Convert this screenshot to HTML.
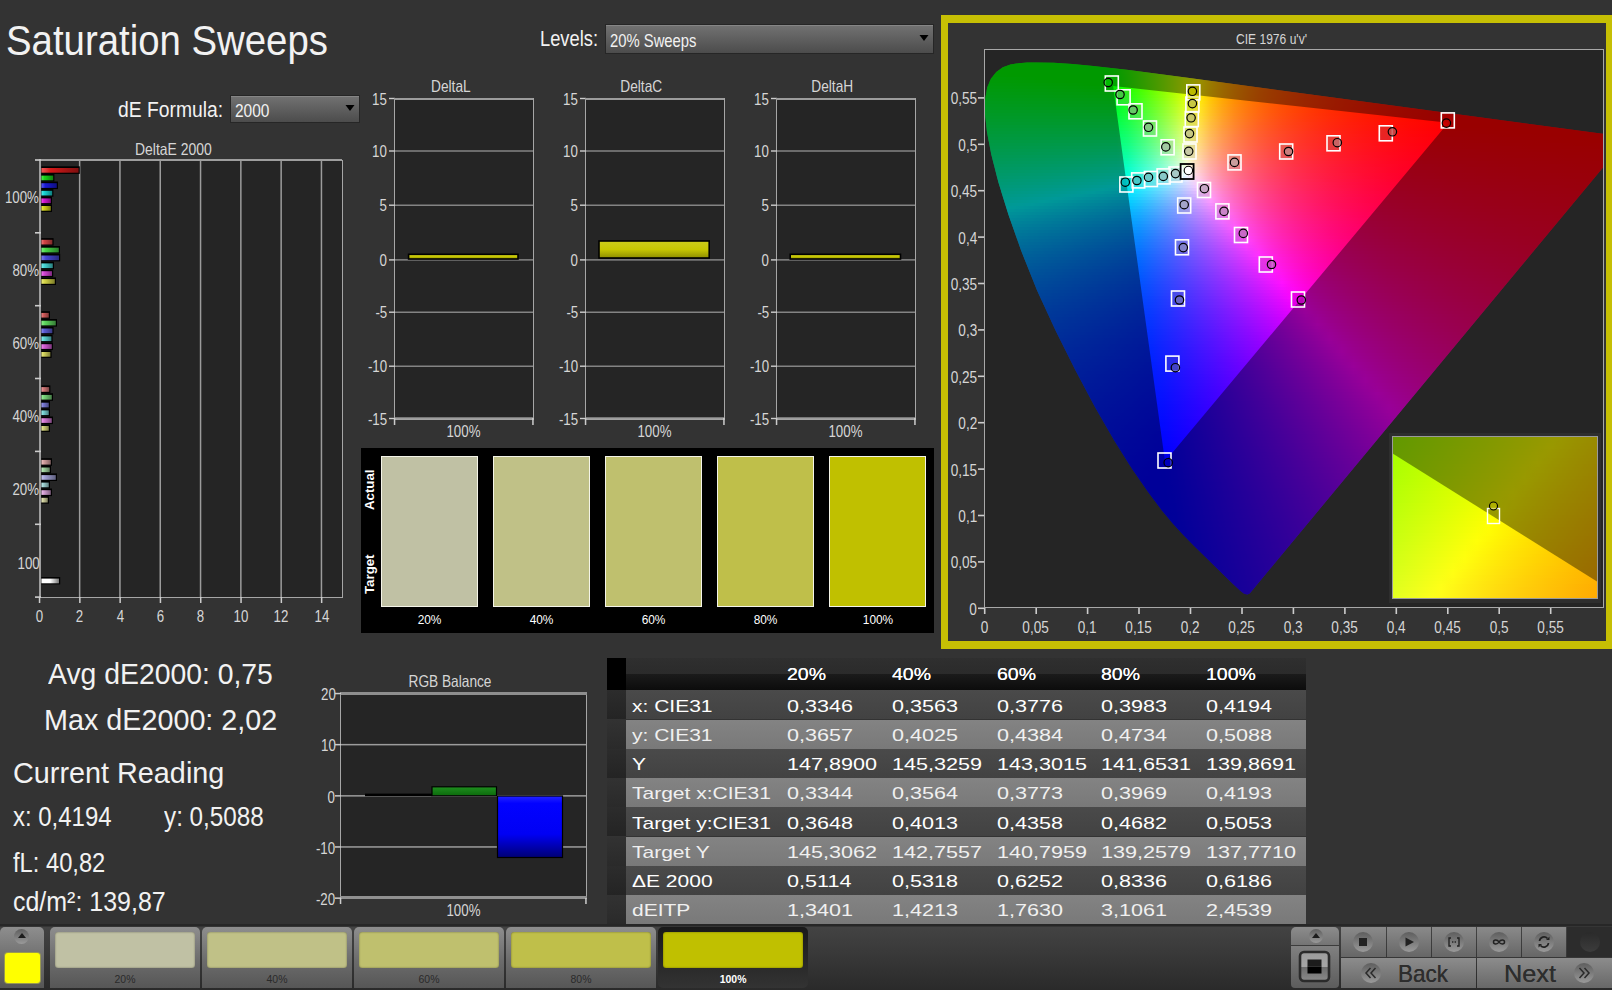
<!DOCTYPE html><html><head><meta charset="utf-8"><title>Saturation Sweeps</title><style>html,body{margin:0;padding:0}body{width:1612px;height:990px;background:#333;position:relative;overflow:hidden;font-family:"Liberation Sans",sans-serif}.t{position:absolute;white-space:nowrap;line-height:1}.s{position:absolute;left:0;width:100%}</style></head><body><div style="position:absolute;left:941.0px;top:15.0px;width:671.0px;height:634.0px;background:#c6bf04"></div>
<div style="position:absolute;left:948.0px;top:23.0px;width:658.0px;height:618.0px;background:#333"></div>
<div style="position:absolute;left:984.0px;top:49.0px;width:620.0px;height:559.0px;background:#252525;border:1px solid #a8a8a8;box-sizing:border-box"></div>
<div style="position:absolute;left:985px;top:50px;width:618px;height:558px;overflow:hidden">
<div style="position:absolute;left:0;top:0;width:618px;height:558px;clip-path:polygon(262.4px 544.4px,264.7px 543.4px,641.8px 88.7px,642.0px 88.1px,642.0px 87.6px,641.6px 87.1px,617.5px 83.7px,202.5px 27.8px,143.8px 20.1px,108.2px 15.9px,87.5px 13.9px,68.7px 12.7px,51.0px 12.4px,42.2px 12.6px,33.6px 13.2px,25.4px 14.6px,17.9px 17.3px,11.3px 21.9px,5.9px 28.7px,2.2px 37.6px,0.1px 49.5px,-0.0px 64.0px,2.0px 82.0px,6.3px 104.6px,13.3px 132.0px,23.4px 164.5px,36.3px 201.1px,52.1px 240.4px,70.7px 280.7px,90.3px 320.1px,110.1px 357.3px,129.1px 390.3px,146.8px 418.5px,163.1px 442.1px,176.7px 460.2px,188.2px 473.9px,198.6px 485.2px,207.9px 494.8px,248.0px 534.1px,255.6px 541.1px,258.8px 543.5px,260.0px 544.1px)">
<div class="s" style="top:0px;height:3px;background:linear-gradient(90deg,#00ff00,#00ff00,#00ff00,#00ff00,#00ff00,#00ff00,#00ff00,#00ff00,#00ff00,#00ff00,#00ff00,#11ff00,#2dff00,#4bff00,#6bff00,#8dff00,#b1ff00,#d9ff00,#fffb00,#ffd500,#ffb800,#ff9f00,#ff8b00,#ff7a00,#ff6c00,#ff6000,#ff5500,#ff4b00,#ff4300,#ff3b00,#ff3400,#ff2e00,#ff2900,#ff2400,#ff1f00,#ff1b00,#ff1700,#ff1300,#ff1000,#ff0d00,#ff0a00,#ff0700,#ff0500,#ff0200,#ff0000,#ff0000,#ff0000,#ff0000,#ff0000,#ff0000,#ff0000,#ff0000,#ff0000)"></div>
<div class="s" style="top:3px;height:3px;background:linear-gradient(90deg,#00ff00,#00ff00,#00ff00,#00ff00,#00ff00,#00ff00,#00ff00,#00ff00,#00ff00,#00ff00,#00ff00,#10ff00,#2cff00,#4aff00,#6aff00,#8dff00,#b2ff00,#d9ff00,#fffa00,#ffd400,#ffb700,#ff9e00,#ff8a00,#ff7a00,#ff6b00,#ff5f00,#ff5400,#ff4a00,#ff4200,#ff3b00,#ff3400,#ff2e00,#ff2800,#ff2300,#ff1f00,#ff1a00,#ff1600,#ff1300,#ff0f00,#ff0c00,#ff0900,#ff0700,#ff0400,#ff0200,#ff0000,#ff0000,#ff0000,#ff0000,#ff0000,#ff0000,#ff0000,#ff0000,#ff0000)"></div>
<div class="s" style="top:6px;height:3px;background:linear-gradient(90deg,#00ff00,#00ff00,#00ff00,#00ff00,#00ff00,#00ff00,#00ff00,#00ff00,#00ff00,#00ff00,#00ff00,#0fff00,#2bff00,#4aff00,#6aff00,#8dff00,#b2ff00,#daff00,#fff900,#ffd300,#ffb600,#ff9d00,#ff8900,#ff7900,#ff6a00,#ff5e00,#ff5300,#ff4a00,#ff4100,#ff3a00,#ff3300,#ff2d00,#ff2800,#ff2300,#ff1e00,#ff1a00,#ff1600,#ff1200,#ff0f00,#ff0c00,#ff0900,#ff0600,#ff0400,#ff0100,#ff0000,#ff0000,#ff0000,#ff0000,#ff0000,#ff0000,#ff0000,#ff0000,#ff0000)"></div>
<div class="s" style="top:9px;height:3px;background:linear-gradient(90deg,#00ff00,#00ff00,#00ff00,#00ff00,#00ff00,#00ff00,#00ff00,#00ff00,#00ff00,#00ff00,#00ff00,#0eff00,#2bff00,#49ff00,#6aff00,#8dff00,#b2ff00,#daff00,#fff800,#ffd300,#ffb500,#ff9c00,#ff8900,#ff7800,#ff6900,#ff5d00,#ff5200,#ff4900,#ff4100,#ff3900,#ff3200,#ff2c00,#ff2700,#ff2200,#ff1d00,#ff1900,#ff1500,#ff1200,#ff0e00,#ff0b00,#ff0800,#ff0600,#ff0300,#ff0100,#ff0000,#ff0000,#ff0000,#ff0000,#ff0000,#ff0000,#ff0000,#ff0000,#ff0000)"></div>
<div class="s" style="top:12px;height:3px;background:linear-gradient(90deg,#00ff00,#00ff00,#00ff00,#00ff00,#00ff00,#00ff00,#00ff00,#00ff00,#00ff00,#00ff00,#00ff00,#0dff00,#2aff00,#49ff00,#6aff00,#8dff00,#b2ff00,#dbff00,#fff700,#ffd200,#ffb400,#ff9c00,#ff8800,#ff7700,#ff6900,#ff5c00,#ff5200,#ff4800,#ff4000,#ff3800,#ff3200,#ff2c00,#ff2600,#ff2100,#ff1d00,#ff1900,#ff1500,#ff1100,#ff0e00,#ff0b00,#ff0800,#ff0500,#ff0300,#ff0000,#ff0000,#ff0000,#ff0000,#ff0000,#ff0000,#ff0000,#ff0000,#ff0000,#ff0000)"></div>
<div class="s" style="top:15px;height:3px;background:linear-gradient(90deg,#00ff00,#00ff00,#00ff00,#00ff00,#00ff00,#00ff00,#00ff00,#00ff00,#00ff00,#00ff00,#00ff00,#0cff00,#29ff00,#48ff00,#69ff00,#8dff00,#b3ff00,#dcff00,#fff600,#ffd100,#ffb300,#ff9b00,#ff8700,#ff7600,#ff6800,#ff5b00,#ff5100,#ff4700,#ff3f00,#ff3800,#ff3100,#ff2b00,#ff2600,#ff2100,#ff1c00,#ff1800,#ff1400,#ff1100,#ff0d00,#ff0a00,#ff0700,#ff0500,#ff0200,#ff0000,#ff0000,#ff0000,#ff0000,#ff0000,#ff0000,#ff0000,#ff0000,#ff0000,#ff0000)"></div>
<div class="s" style="top:18px;height:3px;background:linear-gradient(90deg,#00ff00,#00ff00,#00ff00,#00ff00,#00ff00,#00ff00,#00ff00,#00ff00,#00ff00,#00ff00,#00ff00,#0bff00,#29ff00,#48ff00,#69ff00,#8dff00,#b3ff00,#dcff00,#fff600,#ffd000,#ffb200,#ff9a00,#ff8600,#ff7500,#ff6700,#ff5b00,#ff5000,#ff4700,#ff3e00,#ff3700,#ff3000,#ff2a00,#ff2500,#ff2000,#ff1b00,#ff1700,#ff1300,#ff1000,#ff0d00,#ff0a00,#ff0700,#ff0400,#ff0200,#ff0000,#ff0000,#ff0000,#ff0000,#ff0000,#ff0000,#ff0000,#ff0000,#ff0000,#ff0000)"></div>
<div class="s" style="top:21px;height:3px;background:linear-gradient(90deg,#00ff01,#00ff00,#00ff00,#00ff00,#00ff00,#00ff00,#00ff00,#00ff00,#00ff00,#00ff00,#00ff00,#0bff00,#28ff00,#47ff00,#69ff00,#8dff00,#b3ff00,#ddff00,#fff500,#ffcf00,#ffb100,#ff9900,#ff8500,#ff7400,#ff6600,#ff5a00,#ff4f00,#ff4600,#ff3d00,#ff3600,#ff3000,#ff2a00,#ff2400,#ff1f00,#ff1b00,#ff1700,#ff1300,#ff0f00,#ff0c00,#ff0900,#ff0600,#ff0400,#ff0100,#ff0000,#ff0000,#ff0000,#ff0000,#ff0000,#ff0000,#ff0000,#ff0000,#ff0000,#ff0000)"></div>
<div class="s" style="top:24px;height:3px;background:linear-gradient(90deg,#00ff05,#00ff03,#00ff01,#00ff00,#00ff00,#00ff00,#00ff00,#00ff00,#00ff00,#00ff00,#00ff00,#0aff00,#27ff00,#47ff00,#68ff00,#8cff00,#b3ff00,#ddff00,#fff400,#ffce00,#ffb000,#ff9800,#ff8400,#ff7300,#ff6500,#ff5900,#ff4e00,#ff4500,#ff3d00,#ff3500,#ff2f00,#ff2900,#ff2400,#ff1f00,#ff1a00,#ff1600,#ff1200,#ff0f00,#ff0c00,#ff0900,#ff0600,#ff0300,#ff0100,#ff0000,#ff0000,#ff0000,#ff0000,#ff0000,#ff0000,#ff0000,#ff0000,#ff0000,#ff0000)"></div>
<div class="s" style="top:27px;height:3px;background:linear-gradient(90deg,#00ff09,#00ff08,#00ff06,#00ff04,#00ff02,#00ff00,#00ff00,#00ff00,#00ff00,#00ff00,#00ff00,#09ff00,#26ff00,#46ff00,#68ff00,#8cff00,#b4ff00,#deff00,#fff300,#ffcd00,#ffaf00,#ff9700,#ff8300,#ff7200,#ff6400,#ff5800,#ff4d00,#ff4400,#ff3c00,#ff3500,#ff2e00,#ff2800,#ff2300,#ff1e00,#ff1a00,#ff1500,#ff1200,#ff0e00,#ff0b00,#ff0800,#ff0500,#ff0300,#ff0000,#ff0000,#ff0000,#ff0000,#ff0000,#ff0000,#ff0000,#ff0000,#ff0000,#ff0000,#ff0000)"></div>
<div class="s" style="top:30px;height:3px;background:linear-gradient(90deg,#00ff0d,#00ff0c,#00ff0a,#00ff09,#00ff07,#00ff05,#00ff03,#00ff01,#00ff00,#00ff00,#00ff00,#08ff00,#26ff00,#45ff00,#68ff00,#8cff00,#b4ff00,#dfff00,#fff200,#ffcc00,#ffae00,#ff9600,#ff8200,#ff7100,#ff6300,#ff5700,#ff4d00,#ff4300,#ff3b00,#ff3400,#ff2d00,#ff2800,#ff2200,#ff1d00,#ff1900,#ff1500,#ff1100,#ff0e00,#ff0a00,#ff0800,#ff0500,#ff0200,#ff0000,#ff0000,#ff0000,#ff0000,#ff0000,#ff0000,#ff0000,#ff0000,#ff0000,#ff0000,#ff0000)"></div>
<div class="s" style="top:33px;height:3px;background:linear-gradient(90deg,#00ff12,#00ff10,#00ff0f,#00ff0d,#00ff0c,#00ff0a,#00ff08,#00ff06,#00ff04,#00ff01,#00ff00,#07ff00,#25ff00,#45ff00,#67ff00,#8cff00,#b4ff00,#dfff00,#fff100,#ffcb00,#ffad00,#ff9500,#ff8100,#ff7000,#ff6200,#ff5600,#ff4c00,#ff4300,#ff3a00,#ff3300,#ff2d00,#ff2700,#ff2200,#ff1d00,#ff1800,#ff1400,#ff1100,#ff0d00,#ff0a00,#ff0700,#ff0400,#ff0200,#ff0000,#ff0000,#ff0000,#ff0000,#ff0000,#ff0000,#ff0000,#ff0000,#ff0000,#ff0000,#ff0000)"></div>
<div class="s" style="top:36px;height:3px;background:linear-gradient(90deg,#00ff16,#00ff15,#00ff13,#00ff12,#00ff10,#00ff0f,#00ff0d,#00ff0b,#00ff09,#00ff07,#00ff05,#06ff02,#24ff00,#44ff00,#67ff00,#8cff00,#b5ff00,#e0ff00,#fff000,#ffca00,#ffac00,#ff9400,#ff8000,#ff6f00,#ff6100,#ff5500,#ff4b00,#ff4200,#ff3a00,#ff3200,#ff2c00,#ff2600,#ff2100,#ff1c00,#ff1800,#ff1400,#ff1000,#ff0d00,#ff0900,#ff0600,#ff0400,#ff0100,#ff0000,#ff0000,#ff0000,#ff0000,#ff0000,#ff0000,#ff0000,#ff0000,#ff0000,#ff0000,#ff0000)"></div>
<div class="s" style="top:39px;height:3px;background:linear-gradient(90deg,#00ff1b,#00ff19,#00ff18,#00ff17,#00ff15,#00ff14,#00ff12,#00ff10,#00ff0e,#00ff0c,#00ff0a,#05ff08,#23ff06,#44ff03,#67ff01,#8cff00,#b5ff00,#e1ff00,#ffef00,#ffc800,#ffab00,#ff9300,#ff7f00,#ff6e00,#ff6000,#ff5400,#ff4a00,#ff4100,#ff3900,#ff3200,#ff2b00,#ff2500,#ff2000,#ff1b00,#ff1700,#ff1300,#ff0f00,#ff0c00,#ff0900,#ff0600,#ff0300,#ff0100,#ff0000,#ff0000,#ff0000,#ff0000,#ff0000,#ff0000,#ff0000,#ff0000,#ff0000,#ff0000,#ff0000)"></div>
<div class="s" style="top:42px;height:3px;background:linear-gradient(90deg,#00ff1f,#00ff1e,#00ff1d,#00ff1b,#00ff1a,#00ff19,#00ff17,#00ff16,#00ff14,#00ff12,#00ff10,#04ff0e,#22ff0c,#43ff0a,#66ff07,#8cff05,#b5ff02,#e1ff00,#ffee00,#ffc700,#ffaa00,#ff9200,#ff7e00,#ff6d00,#ff5f00,#ff5400,#ff4900,#ff4000,#ff3800,#ff3100,#ff2a00,#ff2500,#ff1f00,#ff1b00,#ff1600,#ff1200,#ff0f00,#ff0b00,#ff0800,#ff0500,#ff0300,#ff0000,#ff0000,#ff0000,#ff0000,#ff0000,#ff0000,#ff0000,#ff0000,#ff0000,#ff0000,#ff0000,#ff0000)"></div>
<div class="s" style="top:45px;height:3px;background:linear-gradient(90deg,#00ff24,#00ff22,#00ff21,#00ff20,#00ff1f,#00ff1e,#00ff1c,#00ff1b,#00ff19,#00ff18,#00ff16,#03ff14,#22ff12,#43ff10,#66ff0e,#8cff0b,#b5ff09,#e2ff06,#ffed03,#ffc600,#ffa800,#ff9100,#ff7d00,#ff6c00,#ff5f00,#ff5300,#ff4800,#ff3f00,#ff3700,#ff3000,#ff2a00,#ff2400,#ff1f00,#ff1a00,#ff1600,#ff1200,#ff0e00,#ff0b00,#ff0800,#ff0500,#ff0200,#ff0000,#ff0000,#ff0000,#ff0000,#ff0000,#ff0000,#ff0000,#ff0000,#ff0000,#ff0000,#ff0000,#ff0000)"></div>
<div class="s" style="top:48px;height:3px;background:linear-gradient(90deg,#00ff28,#00ff27,#00ff26,#00ff25,#00ff24,#00ff23,#00ff22,#00ff20,#00ff1f,#00ff1e,#00ff1c,#02ff1a,#21ff19,#42ff17,#66ff15,#8cff12,#b6ff10,#e3ff0d,#ffec0a,#ffc506,#ffa703,#ff8f00,#ff7c00,#ff6b00,#ff5e00,#ff5200,#ff4700,#ff3e00,#ff3600,#ff2f00,#ff2900,#ff2300,#ff1e00,#ff1900,#ff1500,#ff1100,#ff0e00,#ff0a00,#ff0700,#ff0400,#ff0200,#ff0000,#ff0000,#ff0000,#ff0000,#ff0000,#ff0000,#ff0000,#ff0000,#ff0000,#ff0000,#ff0000,#ff0000)"></div>
<div class="s" style="top:51px;height:3px;background:linear-gradient(90deg,#00ff2d,#00ff2c,#00ff2b,#00ff2a,#00ff29,#00ff28,#00ff27,#00ff26,#00ff25,#00ff23,#00ff22,#01ff21,#20ff1f,#41ff1d,#65ff1c,#8cff1a,#b6ff17,#e4ff15,#ffeb11,#ffc40c,#ffa608,#ff8e05,#ff7b03,#ff6b01,#ff5d00,#ff5100,#ff4700,#ff3e00,#ff3600,#ff2f00,#ff2800,#ff2300,#ff1d00,#ff1900,#ff1400,#ff1100,#ff0d00,#ff0a00,#ff0700,#ff0400,#ff0100,#ff0000,#ff0000,#ff0000,#ff0000,#ff0000,#ff0000,#ff0000,#ff0000,#ff0000,#ff0000,#ff0000,#ff0000)"></div>
<div class="s" style="top:54px;height:3px;background:linear-gradient(90deg,#00ff31,#00ff31,#00ff30,#00ff2f,#00ff2e,#00ff2d,#00ff2c,#00ff2b,#00ff2a,#00ff29,#00ff28,#00ff27,#1fff26,#41ff24,#65ff22,#8cff21,#b6ff1f,#e4ff1d,#ffea19,#ffc313,#ffa50e,#ff8d0b,#ff7a08,#ff6a05,#ff5c03,#ff5001,#ff4600,#ff3d00,#ff3500,#ff2e00,#ff2800,#ff2200,#ff1d00,#ff1800,#ff1400,#ff1000,#ff0c00,#ff0900,#ff0600,#ff0300,#ff0000,#ff0000,#ff0000,#ff0000,#ff0000,#ff0000,#ff0000,#ff0000,#ff0000,#ff0000,#ff0000,#ff0000,#ff0000)"></div>
<div class="s" style="top:57px;height:3px;background:linear-gradient(90deg,#00ff36,#00ff35,#00ff35,#00ff34,#00ff33,#00ff33,#00ff32,#00ff31,#00ff30,#00ff2f,#00ff2e,#00ff2d,#1eff2c,#40ff2b,#65ff2a,#8cff28,#b7ff27,#e5ff25,#ffe920,#ffc219,#ffa414,#ff8c10,#ff790c,#ff6909,#ff5b07,#ff4f05,#ff4503,#ff3c01,#ff3400,#ff2d00,#ff2700,#ff2100,#ff1c00,#ff1700,#ff1300,#ff0f00,#ff0c00,#ff0800,#ff0500,#ff0300,#ff0000,#ff0000,#ff0000,#ff0000,#ff0000,#ff0000,#ff0000,#ff0000,#ff0000,#ff0000,#ff0000,#ff0000,#ff0000)"></div>
<div class="s" style="top:60px;height:3px;background:linear-gradient(90deg,#00ff3b,#00ff3a,#00ff3a,#00ff39,#00ff39,#00ff38,#00ff37,#00ff37,#00ff36,#00ff35,#00ff35,#00ff34,#1dff33,#3fff32,#64ff31,#8cff30,#b7ff2e,#e6ff2d,#ffe728,#ffc120,#ffa31a,#ff8b15,#ff7811,#ff680e,#ff5a0b,#ff4e09,#ff4406,#ff3b05,#ff3303,#ff2c02,#ff2600,#ff2000,#ff1b00,#ff1700,#ff1300,#ff0f00,#ff0b00,#ff0800,#ff0500,#ff0200,#ff0000,#ff0000,#ff0000,#ff0000,#ff0000,#ff0000,#ff0000,#ff0000,#ff0000,#ff0000,#ff0000,#ff0000,#ff0000)"></div>
<div class="s" style="top:63px;height:3px;background:linear-gradient(90deg,#00ff40,#00ff3f,#00ff3f,#00ff3e,#00ff3e,#00ff3e,#00ff3d,#00ff3d,#00ff3c,#00ff3c,#00ff3b,#00ff3a,#1cff3a,#3fff39,#64ff38,#8cff37,#b7ff36,#e7ff35,#ffe62f,#ffc026,#ffa220,#ff8a1a,#ff7716,#ff6712,#ff590f,#ff4d0c,#ff430a,#ff3a08,#ff3206,#ff2b05,#ff2503,#ff2002,#ff1b01,#ff1600,#ff1200,#ff0e00,#ff0b00,#ff0700,#ff0400,#ff0100,#ff0000,#ff0000,#ff0000,#ff0000,#ff0000,#ff0000,#ff0000,#ff0000,#ff0000,#ff0000,#ff0000,#ff0000,#ff0000)"></div>
<div class="s" style="top:66px;height:3px;background:linear-gradient(90deg,#00ff44,#00ff44,#00ff44,#00ff44,#00ff43,#00ff43,#00ff43,#00ff42,#00ff42,#00ff42,#00ff41,#00ff41,#1cff41,#3eff40,#63ff40,#8cff3f,#b8ff3e,#e7ff3e,#ffe537,#ffbf2d,#ffa126,#ff891f,#ff761a,#ff6616,#ff5813,#ff4c10,#ff420d,#ff390b,#ff3209,#ff2b07,#ff2506,#ff1f04,#ff1a03,#ff1502,#ff1101,#ff0d00,#ff0a00,#ff0700,#ff0400,#ff0100,#ff0000,#ff0000,#ff0000,#ff0000,#ff0000,#ff0000,#ff0000,#ff0000,#ff0000,#ff0000,#ff0000,#ff0000,#ff0000)"></div>
<div class="s" style="top:69px;height:3px;background:linear-gradient(90deg,#00ff49,#00ff49,#00ff49,#00ff49,#00ff49,#00ff49,#00ff49,#00ff48,#00ff48,#00ff48,#00ff48,#00ff48,#1bff48,#3dff47,#63ff47,#8cff47,#b8ff47,#e8ff46,#ffe43f,#ffbe34,#ffa02b,#ff8825,#ff751f,#ff651b,#ff5717,#ff4b14,#ff4111,#ff380e,#ff310c,#ff2a0a,#ff2409,#ff1e07,#ff1906,#ff1504,#ff1103,#ff0d02,#ff0901,#ff0600,#ff0300,#ff0000,#ff0000,#ff0000,#ff0000,#ff0000,#ff0000,#ff0000,#ff0000,#ff0000,#ff0000,#ff0000,#ff0000,#ff0000,#ff0000)"></div>
<div class="s" style="top:72px;height:3px;background:linear-gradient(90deg,#00ff4e,#00ff4e,#00ff4e,#00ff4e,#00ff4e,#00ff4e,#00ff4e,#00ff4e,#00ff4f,#00ff4f,#00ff4f,#00ff4f,#1aff4f,#3dff4f,#63ff4f,#8cff4f,#b8ff4f,#e9ff4f,#ffe347,#ffbc3b,#ff9f31,#ff872a,#ff7424,#ff631f,#ff561b,#ff4a17,#ff4014,#ff3812,#ff300f,#ff290d,#ff230b,#ff1d0a,#ff1908,#ff1407,#ff1005,#ff0c04,#ff0903,#ff0602,#ff0301,#ff0000,#ff0000,#ff0000,#ff0000,#ff0000,#ff0000,#ff0000,#ff0000,#ff0000,#ff0000,#ff0000,#ff0000,#ff0000,#ff0000)"></div>
<div class="s" style="top:75px;height:3px;background:linear-gradient(90deg,#00ff53,#00ff53,#00ff54,#00ff54,#00ff54,#00ff54,#00ff54,#00ff55,#00ff55,#00ff55,#00ff55,#00ff56,#19ff56,#3cff56,#62ff57,#8cff57,#b9ff58,#eaff58,#ffe24f,#ffbb42,#ff9d37,#ff8630,#ff7229,#ff6224,#ff551f,#ff491b,#ff3f18,#ff3715,#ff2f12,#ff2810,#ff220e,#ff1d0c,#ff180b,#ff1309,#ff0f08,#ff0c06,#ff0805,#ff0504,#ff0203,#ff0002,#ff0001,#ff0001,#ff0000,#ff0000,#ff0000,#ff0000,#ff0000,#ff0000,#ff0000,#ff0000,#ff0000,#ff0000,#ff0000)"></div>
<div class="s" style="top:78px;height:3px;background:linear-gradient(90deg,#00ff58,#00ff59,#00ff59,#00ff59,#00ff5a,#00ff5a,#00ff5a,#00ff5b,#00ff5b,#00ff5c,#00ff5c,#00ff5d,#18ff5d,#3bff5e,#62ff5f,#8cff5f,#b9ff60,#ebff61,#ffe157,#ffba48,#ff9c3e,#ff8535,#ff712e,#ff6128,#ff5423,#ff481f,#ff3f1b,#ff3618,#ff2e15,#ff2713,#ff2111,#ff1c0f,#ff170d,#ff130b,#ff0f0a,#ff0b09,#ff0707,#ff0406,#ff0105,#ff0004,#ff0003,#ff0002,#ff0002,#ff0001,#ff0000,#ff0000,#ff0000,#ff0000,#ff0000,#ff0000,#ff0000,#ff0000,#ff0000)"></div>
<div class="s" style="top:81px;height:3px;background:linear-gradient(90deg,#00ff5d,#00ff5e,#00ff5e,#00ff5f,#00ff5f,#00ff60,#00ff60,#00ff61,#00ff62,#00ff62,#00ff63,#00ff64,#17ff65,#3bff66,#61ff67,#8cff68,#b9ff69,#ecff6a,#ffe05f,#ffb94f,#ff9b44,#ff843a,#ff7033,#ff602d,#ff5327,#ff4823,#ff3e1f,#ff351c,#ff2d19,#ff2716,#ff2114,#ff1b11,#ff1610,#ff120e,#ff0e0c,#ff0a0b,#ff0709,#ff0408,#ff0107,#ff0006,#ff0005,#ff0004,#ff0003,#ff0002,#ff0002,#ff0001,#ff0000,#ff0000,#ff0000,#ff0000,#ff0000,#ff0000,#ff0000)"></div>
<div class="s" style="top:84px;height:3px;background:linear-gradient(90deg,#00ff63,#00ff63,#00ff64,#00ff64,#00ff65,#00ff66,#00ff67,#00ff67,#00ff68,#00ff69,#00ff6a,#00ff6b,#16ff6c,#3aff6e,#61ff6f,#8bff71,#baff72,#edff74,#ffde67,#ffb856,#ff9a4a,#ff8240,#ff6f38,#ff5f31,#ff522b,#ff4727,#ff3d23,#ff341f,#ff2d1c,#ff2619,#ff2016,#ff1b14,#ff1612,#ff1110,#ff0d0e,#ff0a0d,#ff060b,#ff030a,#ff0009,#ff0008,#ff0007,#ff0006,#ff0005,#ff0004,#ff0003,#ff0002,#ff0002,#ff0001,#ff0000,#ff0000,#ff0000,#ff0000,#ff0000)"></div>
<div class="s" style="top:87px;height:3px;background:linear-gradient(90deg,#00ff68,#00ff68,#00ff69,#00ff6a,#00ff6b,#00ff6c,#00ff6d,#00ff6e,#00ff6f,#00ff70,#00ff71,#00ff73,#15ff74,#39ff76,#61ff77,#8bff79,#baff7b,#edff7e,#ffdd6f,#ffb75e,#ff9950,#ff8145,#ff6e3d,#ff5e36,#ff5130,#ff462b,#ff3c26,#ff3322,#ff2c1f,#ff251c,#ff1f19,#ff1a17,#ff1515,#ff1113,#ff0d11,#ff090f,#ff060e,#ff030c,#ff000b,#ff000a,#ff0009,#ff0008,#ff0007,#ff0006,#ff0005,#ff0004,#ff0003,#ff0003,#ff0002,#ff0001,#ff0001,#ff0000,#ff0000)"></div>
<div class="s" style="top:90px;height:3px;background:linear-gradient(90deg,#00ff6d,#00ff6e,#00ff6f,#00ff70,#00ff71,#00ff72,#00ff73,#00ff74,#00ff76,#00ff77,#00ff79,#00ff7a,#14ff7c,#38ff7e,#60ff80,#8bff82,#bbff85,#eeff87,#ffdc77,#ffb565,#ff9856,#ff804b,#ff6d42,#ff5d3a,#ff5034,#ff452e,#ff3b2a,#ff3226,#ff2b22,#ff241f,#ff1e1c,#ff1919,#ff1417,#ff1015,#ff0c13,#ff0811,#ff0510,#ff020e,#ff000d,#ff000c,#ff000a,#ff0009,#ff0008,#ff0007,#ff0006,#ff0006,#ff0005,#ff0004,#ff0003,#ff0003,#ff0002,#ff0001,#ff0001)"></div>
<div class="s" style="top:93px;height:3px;background:linear-gradient(90deg,#00ff72,#00ff73,#00ff75,#00ff76,#00ff77,#00ff78,#00ff7a,#00ff7b,#00ff7d,#00ff7e,#00ff80,#00ff82,#13ff84,#38ff86,#60ff89,#8bff8b,#bbff8e,#efff92,#ffdb80,#ffb46c,#ff965d,#ff7f51,#ff6c47,#ff5c3f,#ff4f38,#ff4432,#ff3a2d,#ff3129,#ff2a25,#ff2322,#ff1e1f,#ff181c,#ff141a,#ff0f17,#ff0b15,#ff0813,#ff0412,#ff0110,#ff000f,#ff000d,#ff000c,#ff000b,#ff000a,#ff0009,#ff0008,#ff0007,#ff0006,#ff0005,#ff0005,#ff0004,#ff0003,#ff0003,#ff0002)"></div>
<div class="s" style="top:96px;height:3px;background:linear-gradient(90deg,#00ff78,#00ff79,#00ff7a,#00ff7c,#00ff7d,#00ff7e,#00ff80,#00ff82,#00ff84,#00ff85,#00ff88,#00ff8a,#12ff8c,#37ff8f,#5fff92,#8bff95,#bbff98,#f0ff9c,#ffda88,#ffb373,#ff9563,#ff7e56,#ff6b4c,#ff5b44,#ff4e3c,#ff4336,#ff3931,#ff312c,#ff2928,#ff2325,#ff1d22,#ff181f,#ff131c,#ff0f1a,#ff0b18,#ff0716,#ff0414,#ff0112,#ff0011,#ff000f,#ff000e,#ff000d,#ff000c,#ff000b,#ff000a,#ff0009,#ff0008,#ff0007,#ff0006,#ff0005,#ff0005,#ff0004,#ff0003)"></div>
<div class="s" style="top:99px;height:3px;background:linear-gradient(90deg,#00ff7d,#00ff7f,#00ff80,#00ff82,#00ff83,#00ff85,#00ff87,#00ff89,#00ff8b,#00ff8d,#00ff8f,#00ff92,#11ff94,#36ff97,#5fff9b,#8bff9e,#bcffa2,#f1ffa6,#ffd891,#ffb27b,#ff946a,#ff7d5c,#ff6a51,#ff5a48,#ff4d41,#ff423a,#ff3835,#ff3030,#ff282c,#ff2228,#ff1c24,#ff1721,#ff121f,#ff0e1c,#ff0a1a,#ff0618,#ff0316,#ff0014,#ff0013,#ff0011,#ff0010,#ff000f,#ff000d,#ff000c,#ff000b,#ff000a,#ff0009,#ff0008,#ff0007,#ff0007,#ff0006,#ff0005,#ff0005)"></div>
<div class="s" style="top:102px;height:3px;background:linear-gradient(90deg,#00ff83,#00ff84,#00ff86,#00ff88,#00ff89,#00ff8b,#00ff8d,#00ff8f,#00ff92,#00ff94,#00ff97,#00ff9a,#0fff9d,#35ffa0,#5effa4,#8bffa8,#bcffac,#f2ffb1,#ffd79a,#ffb082,#ff9370,#ff7b62,#ff6956,#ff594d,#ff4c45,#ff413e,#ff3738,#ff2f33,#ff272f,#ff212b,#ff1b27,#ff1624,#ff1121,#ff0d1f,#ff091c,#ff061a,#ff0218,#ff0016,#ff0015,#ff0013,#ff0012,#ff0010,#ff000f,#ff000e,#ff000d,#ff000c,#ff000b,#ff000a,#ff0009,#ff0008,#ff0007,#ff0007,#ff0006)"></div>
<div class="s" style="top:105px;height:3px;background:linear-gradient(90deg,#00ff88,#00ff8a,#00ff8c,#00ff8e,#00ff90,#00ff92,#00ff94,#00ff96,#00ff99,#00ff9c,#00ff9f,#00ffa2,#0effa5,#34ffa9,#5effad,#8bffb2,#bdffb7,#f3ffbc,#ffd6a3,#ffaf8a,#ff9277,#ff7a68,#ff675c,#ff5852,#ff4b49,#ff4042,#ff363c,#ff2e37,#ff2732,#ff202e,#ff1a2a,#ff1527,#ff1124,#ff0c21,#ff091f,#ff051c,#ff021a,#ff0018,#ff0017,#ff0015,#ff0013,#ff0012,#ff0011,#ff000f,#ff000e,#ff000d,#ff000c,#ff000b,#ff000a,#ff0009,#ff0009,#ff0008,#ff0007)"></div>
<div class="s" style="top:108px;height:3px;background:linear-gradient(90deg,#00ff8e,#00ff90,#00ff92,#00ff94,#00ff96,#00ff98,#00ff9b,#00ff9e,#00ffa0,#00ffa3,#00ffa7,#00ffaa,#0dffae,#34ffb2,#5dffb7,#8bffbc,#bdffc1,#f4ffc7,#ffd5ac,#ffae91,#ff907d,#ff796e,#ff6661,#ff5756,#ff4a4e,#ff3f46,#ff3540,#ff2d3a,#ff2635,#ff1f31,#ff1a2d,#ff1529,#ff1026,#ff0c24,#ff0821,#ff041f,#ff011c,#ff001a,#ff0019,#ff0017,#ff0015,#ff0014,#ff0012,#ff0011,#ff0010,#ff000f,#ff000e,#ff000d,#ff000c,#ff000b,#ff000a,#ff0009,#ff0008)"></div>
<div class="s" style="top:111px;height:3px;background:linear-gradient(90deg,#00ff94,#00ff96,#00ff98,#00ff9a,#00ff9d,#00ff9f,#00ffa2,#00ffa5,#00ffa8,#00ffab,#00ffaf,#00ffb3,#0cffb7,#33ffbb,#5dffc0,#8bffc6,#beffcc,#f5ffd3,#ffd3b5,#ffad99,#ff8f84,#ff7873,#ff6566,#ff565b,#ff4952,#ff3e4a,#ff3443,#ff2c3e,#ff2538,#ff1f34,#ff1930,#ff142c,#ff0f29,#ff0b26,#ff0723,#ff0421,#ff011f,#ff001c,#ff001b,#ff0019,#ff0017,#ff0016,#ff0014,#ff0013,#ff0011,#ff0010,#ff000f,#ff000e,#ff000d,#ff000c,#ff000b,#ff000a,#ff000a)"></div>
<div class="s" style="top:114px;height:3px;background:linear-gradient(90deg,#00ff9a,#00ff9c,#00ff9e,#00ffa1,#00ffa3,#00ffa6,#00ffa9,#00ffac,#00ffaf,#00ffb3,#00ffb7,#00ffbb,#0bffc0,#32ffc5,#5cffca,#8bffd0,#beffd7,#f7ffde,#ffd2be,#ffaba1,#ff8e8b,#ff7779,#ff646b,#ff5560,#ff4856,#ff3d4e,#ff3347,#ff2b41,#ff243c,#ff1e37,#ff1833,#ff132f,#ff0e2c,#ff0a28,#ff0726,#ff0323,#ff0021,#ff001f,#ff001d,#ff001b,#ff0019,#ff0017,#ff0016,#ff0014,#ff0013,#ff0012,#ff0011,#ff0010,#ff000f,#ff000e,#ff000d,#ff000c,#ff000b)"></div>
<div class="s" style="top:117px;height:3px;background:linear-gradient(90deg,#00ff9f,#00ffa2,#00ffa4,#00ffa7,#00ffaa,#00ffad,#00ffb0,#00ffb3,#00ffb7,#00ffbb,#00ffbf,#00ffc4,#0affc9,#31ffcf,#5cffd4,#8bffdb,#beffe2,#f8ffea,#ffd1c7,#ffaaa9,#ff8c91,#ff757f,#ff6371,#ff5365,#ff475b,#ff3c52,#ff324b,#ff2a45,#ff233f,#ff1d3a,#ff1736,#ff1232,#ff0e2e,#ff0a2b,#ff0628,#ff0225,#ff0023,#ff0021,#ff001f,#ff001d,#ff001b,#ff0019,#ff0018,#ff0016,#ff0015,#ff0013,#ff0012,#ff0011,#ff0010,#ff000f,#ff000e,#ff000d,#ff000c)"></div>
<div class="s" style="top:120px;height:3px;background:linear-gradient(90deg,#00ffa5,#00ffa8,#00ffab,#00ffad,#00ffb1,#00ffb4,#00ffb7,#00ffbb,#00ffbf,#00ffc3,#00ffc8,#00ffcd,#08ffd2,#30ffd8,#5bffdf,#8bffe6,#bfffee,#f9fff6,#ffcfd0,#ffa9b0,#ff8b98,#ff7485,#ff6276,#ff526a,#ff465f,#ff3b56,#ff314f,#ff2948,#ff2242,#ff1c3d,#ff1639,#ff1134,#ff0d31,#ff092d,#ff052a,#ff0228,#ff0025,#ff0023,#ff0021,#ff001e,#ff001d,#ff001b,#ff0019,#ff0018,#ff0016,#ff0015,#ff0014,#ff0013,#ff0011,#ff0010,#ff000f,#ff000e,#ff000d)"></div>
<div class="s" style="top:123px;height:3px;background:linear-gradient(90deg,#00ffab,#00ffae,#00ffb1,#00ffb4,#00ffb7,#00ffbb,#00ffbf,#00ffc3,#00ffc7,#00ffcc,#00ffd1,#00ffd6,#07ffdc,#2fffe2,#5bffe9,#8bfff1,#bffff9,#f6fbff,#ffceda,#ffa7b8,#ff8a9f,#ff738b,#ff607c,#ff516f,#ff4464,#ff3a5a,#ff3052,#ff284c,#ff2146,#ff1b40,#ff163b,#ff1137,#ff0c33,#ff0830,#ff042d,#ff012a,#ff0027,#ff0025,#ff0022,#ff0020,#ff001e,#ff001d,#ff001b,#ff0019,#ff0018,#ff0017,#ff0015,#ff0014,#ff0013,#ff0012,#ff0011,#ff0010,#ff000f)"></div>
<div class="s" style="top:126px;height:3px;background:linear-gradient(90deg,#00ffb1,#00ffb4,#00ffb7,#00ffbb,#00ffbe,#00ffc2,#00ffc6,#00ffca,#00ffcf,#00ffd4,#00ffd9,#00ffdf,#06ffe6,#2effec,#5afff4,#8afffc,#bbf9ff,#ecefff,#ffcde3,#ffa6c0,#ff89a6,#ff7292,#ff5f81,#ff5073,#ff4368,#ff395f,#ff2f56,#ff274f,#ff2049,#ff1a43,#ff153e,#ff103a,#ff0b36,#ff0732,#ff042f,#ff002c,#ff0029,#ff0027,#ff0024,#ff0022,#ff0020,#ff001e,#ff001d,#ff001b,#ff001a,#ff0018,#ff0017,#ff0015,#ff0014,#ff0013,#ff0012,#ff0011,#ff0010)"></div>
<div class="s" style="top:129px;height:3px;background:linear-gradient(90deg,#00ffb8,#00ffbb,#00ffbe,#00ffc2,#00ffc5,#00ffc9,#00ffce,#00ffd2,#00ffd7,#00ffdd,#00ffe2,#00ffe9,#05ffef,#2dfff7,#5affff,#86f6ff,#b3eeff,#e2e4ff,#ffcbed,#ffa5c9,#ff87ad,#ff7098,#ff5e87,#ff4f78,#ff426d,#ff3863,#ff2e5a,#ff2753,#ff204c,#ff1946,#ff1441,#ff0f3d,#ff0b39,#ff0735,#ff0331,#ff002e,#ff002c,#ff0029,#ff0027,#ff0024,#ff0022,#ff0020,#ff001e,#ff001d,#ff001b,#ff001a,#ff0018,#ff0017,#ff0016,#ff0015,#ff0013,#ff0012,#ff0011)"></div>
<div class="s" style="top:132px;height:3px;background:linear-gradient(90deg,#00ffbe,#00ffc1,#00ffc5,#00ffc8,#00ffcc,#00ffd1,#00ffd5,#00ffda,#00ffe0,#00ffe5,#00ffeb,#00fff2,#03fff9,#2cfdff,#55f4ff,#80ecff,#ace3ff,#d9daff,#ffcaf7,#ffa3d1,#ff86b4,#ff6f9e,#ff5d8c,#ff4e7d,#ff4171,#ff3767,#ff2d5e,#ff2656,#ff1f50,#ff194a,#ff1344,#ff0e40,#ff0a3b,#ff0637,#ff0234,#ff0031,#ff002e,#ff002b,#ff0029,#ff0026,#ff0024,#ff0022,#ff0020,#ff001e,#ff001d,#ff001b,#ff001a,#ff0018,#ff0017,#ff0016,#ff0015,#ff0014,#ff0013)"></div>
<div class="s" style="top:135px;height:3px;background:linear-gradient(90deg,#00ffc4,#00ffc8,#00ffcb,#00ffcf,#00ffd4,#00ffd8,#00ffdd,#00ffe2,#00ffe8,#00ffee,#00fff5,#00fffc,#02faff,#29f3ff,#51eaff,#7be2ff,#a5d9ff,#d1d1ff,#fdc7ff,#ffa2d9,#ff85bb,#ff6ea4,#ff5b92,#ff4d82,#ff4076,#ff366b,#ff2c62,#ff255a,#ff1e53,#ff184d,#ff1247,#ff0e42,#ff093e,#ff053a,#ff0236,#ff0033,#ff0030,#ff002d,#ff002b,#ff0028,#ff0026,#ff0024,#ff0022,#ff0020,#ff001e,#ff001d,#ff001b,#ff001a,#ff0019,#ff0017,#ff0016,#ff0015,#ff0014)"></div>
<div class="s" style="top:138px;height:3px;background:linear-gradient(90deg,#00ffca,#00ffce,#00ffd2,#00ffd6,#00ffdb,#00ffe0,#00ffe5,#00ffeb,#00fff1,#00fff7,#00fffe,#00f8ff,#01f1ff,#27e9ff,#4de1ff,#75d9ff,#9ed0ff,#c9c8ff,#f4bfff,#ffa0e1,#ff83c2,#ff6caa,#ff5a97,#ff4b87,#ff3f7a,#ff346f,#ff2c66,#ff245d,#ff1d56,#ff1750,#ff124a,#ff0d45,#ff0841,#ff043c,#ff0139,#ff0035,#ff0032,#ff002f,#ff002d,#ff002a,#ff0028,#ff0026,#ff0024,#ff0022,#ff0020,#ff001e,#ff001d,#ff001b,#ff001a,#ff0019,#ff0017,#ff0016,#ff0015)"></div>
<div class="s" style="top:141px;height:3px;background:linear-gradient(90deg,#00ffd1,#00ffd5,#00ffd9,#00ffde,#00ffe2,#00ffe8,#00ffed,#00fff3,#00fff9,#00feff,#00f7ff,#00efff,#00e8ff,#24e0ff,#4ad8ff,#71d0ff,#98c8ff,#c1bfff,#ebb6ff,#ff9fea,#ff82ca,#ff6bb1,#ff599d,#ff4a8d,#ff3e7f,#ff3373,#ff2a6a,#ff2361,#ff1c5a,#ff1653,#ff114d,#ff0c48,#ff0843,#ff043f,#ff003b,#ff0038,#ff0034,#ff0031,#ff002f,#ff002c,#ff002a,#ff0027,#ff0025,#ff0023,#ff0022,#ff0020,#ff001e,#ff001d,#ff001b,#ff001a,#ff0019,#ff0018,#ff0016)"></div>
<div class="s" style="top:144px;height:3px;background:linear-gradient(90deg,#00ffd7,#00ffdc,#00ffe0,#00ffe5,#00ffea,#00ffef,#00fff5,#00fffc,#00fcff,#00f5ff,#00eeff,#00e7ff,#00dfff,#22d8ff,#47d0ff,#6cc8ff,#93c0ff,#bab7ff,#e3afff,#ff9df2,#ff80d1,#ff6ab7,#ff58a3,#ff4992,#ff3d84,#ff3278,#ff296e,#ff2265,#ff1b5d,#ff1556,#ff1050,#ff0b4b,#ff0746,#ff0342,#ff003e,#ff003a,#ff0037,#ff0033,#ff0031,#ff002e,#ff002c,#ff0029,#ff0027,#ff0025,#ff0023,#ff0022,#ff0020,#ff001e,#ff001d,#ff001c,#ff001a,#ff0019,#ff0018)"></div>
<div class="s" style="top:147px;height:3px;background:linear-gradient(90deg,#00ffde,#00ffe3,#00ffe7,#00ffec,#00fff2,#00fff7,#00fffe,#00faff,#00f3ff,#00ecff,#00e5ff,#00deff,#00d7ff,#20cfff,#43c8ff,#68c0ff,#8db8ff,#b3b0ff,#dba7ff,#ff9cfb,#ff7fd8,#ff68be,#ff57a8,#ff4897,#ff3c88,#ff317c,#ff2872,#ff2168,#ff1a60,#ff1459,#ff0f53,#ff0a4e,#ff0649,#ff0244,#ff0040,#ff003c,#ff0039,#ff0036,#ff0033,#ff0030,#ff002d,#ff002b,#ff0029,#ff0027,#ff0025,#ff0023,#ff0021,#ff0020,#ff001e,#ff001d,#ff001c,#ff001a,#ff0019)"></div>
<div class="s" style="top:150px;height:3px;background:linear-gradient(90deg,#00ffe5,#00ffe9,#00ffee,#00fff4,#00fff9,#00ffff,#00f8ff,#00f2ff,#00ebff,#00e4ff,#00deff,#00d6ff,#00cfff,#1ec8ff,#40c0ff,#64b9ff,#88b1ff,#ada9ff,#d3a0ff,#fa98ff,#ff7ee0,#ff67c4,#ff55ae,#ff479c,#ff3a8d,#ff3080,#ff2775,#ff206c,#ff1964,#ff135d,#ff0e56,#ff0a50,#ff054b,#ff0247,#ff0042,#ff003f,#ff003b,#ff0038,#ff0035,#ff0032,#ff002f,#ff002d,#ff002b,#ff0029,#ff0027,#ff0025,#ff0023,#ff0021,#ff0020,#ff001e,#ff001d,#ff001c,#ff001a)"></div>
<div class="s" style="top:153px;height:3px;background:linear-gradient(90deg,#00ffec,#00fff0,#00fff6,#00fffb,#00fdff,#00f7ff,#00f0ff,#00eaff,#00e3ff,#00ddff,#00d6ff,#00cfff,#00c8ff,#1cc1ff,#3db9ff,#60b2ff,#83aaff,#a7a2ff,#cc9aff,#f291ff,#ff7ce7,#ff66cb,#ff54b4,#ff45a1,#ff3992,#ff2f85,#ff2679,#ff1f70,#ff1867,#ff1260,#ff0d59,#ff0953,#ff054e,#ff0149,#ff0045,#ff0041,#ff003d,#ff003a,#ff0037,#ff0034,#ff0031,#ff002f,#ff002c,#ff002a,#ff0028,#ff0026,#ff0025,#ff0023,#ff0021,#ff0020,#ff001e,#ff001d,#ff001c)"></div>
<div class="s" style="top:156px;height:3px;background:linear-gradient(90deg,#00fff2,#00fff8,#00fffd,#00fbff,#00f5ff,#00efff,#00e9ff,#00e3ff,#00dcff,#00d6ff,#00cfff,#00c8ff,#00c1ff,#1abaff,#3bb3ff,#5cabff,#7fa3ff,#a29cff,#c694ff,#ea8bff,#ff7bef,#ff64d1,#ff53ba,#ff44a6,#ff3897,#ff2e89,#ff257d,#ff1e74,#ff176b,#ff1263,#ff0c5c,#ff0856,#ff0451,#ff004c,#ff0047,#ff0043,#ff003f,#ff003c,#ff0039,#ff0036,#ff0033,#ff0031,#ff002e,#ff002c,#ff002a,#ff0028,#ff0026,#ff0024,#ff0023,#ff0021,#ff0020,#ff001e,#ff001d)"></div>
<div class="s" style="top:159px;height:3px;background:linear-gradient(90deg,#00fff9,#00ffff,#00faff,#00f4ff,#00eeff,#00e8ff,#00e2ff,#00dcff,#00d5ff,#00cfff,#00c8ff,#00c1ff,#00baff,#18b3ff,#38acff,#59a5ff,#7a9dff,#9c96ff,#bf8eff,#e386ff,#ff79f7,#ff63d8,#ff51c0,#ff43ac,#ff379b,#ff2d8d,#ff2482,#ff1d77,#ff166e,#ff1166,#ff0c5f,#ff0759,#ff0353,#ff004e,#ff004a,#ff0046,#ff0042,#ff003e,#ff003b,#ff0038,#ff0035,#ff0032,#ff0030,#ff002e,#ff002c,#ff002a,#ff0028,#ff0026,#ff0024,#ff0023,#ff0021,#ff0020,#ff001e)"></div>
<div class="s" style="top:162px;height:3px;background:linear-gradient(90deg,#00feff,#00f8ff,#00f2ff,#00edff,#00e7ff,#00e1ff,#00dbff,#00d5ff,#00cfff,#00c8ff,#00c2ff,#00bbff,#00b4ff,#17adff,#36a6ff,#569fff,#7697ff,#9790ff,#b988ff,#dc80ff,#ff78fe,#ff62df,#ff50c6,#ff42b1,#ff36a0,#ff2c92,#ff2386,#ff1c7b,#ff1572,#ff106a,#ff0b62,#ff065c,#ff0256,#ff0051,#ff004c,#ff0048,#ff0044,#ff0040,#ff003d,#ff003a,#ff0037,#ff0034,#ff0032,#ff002f,#ff002d,#ff002b,#ff0029,#ff0027,#ff0026,#ff0024,#ff0022,#ff0021,#ff0020)"></div>
<div class="s" style="top:165px;height:3px;background:linear-gradient(90deg,#00f7ff,#00f1ff,#00ecff,#00e6ff,#00e0ff,#00daff,#00d4ff,#00ceff,#00c8ff,#00c2ff,#00bbff,#00b5ff,#00aeff,#15a7ff,#33a0ff,#5299ff,#7292ff,#938aff,#b483ff,#d57bff,#f873ff,#ff60e5,#ff4fcc,#ff41b6,#ff35a5,#ff2b96,#ff228a,#ff1b7f,#ff1575,#ff0f6d,#ff0a66,#ff055f,#ff0159,#ff0054,#ff004f,#ff004a,#ff0046,#ff0042,#ff003f,#ff003c,#ff0039,#ff0036,#ff0034,#ff0031,#ff002f,#ff002d,#ff002b,#ff0029,#ff0027,#ff0025,#ff0024,#ff0022,#ff0021)"></div>
<div class="s" style="top:168px;height:3px;background:linear-gradient(90deg,#00f0ff,#00ebff,#00e5ff,#00e0ff,#00daff,#00d4ff,#00ceff,#00c8ff,#00c2ff,#00bcff,#00b6ff,#00afff,#00a8ff,#13a2ff,#319bff,#4f94ff,#6e8dff,#8e85ff,#ae7eff,#cf76ff,#f16eff,#ff5fec,#ff4dd2,#ff3fbc,#ff34aa,#ff2a9b,#ff218e,#ff1a83,#ff1479,#ff0e70,#ff0969,#ff0562,#ff015c,#ff0056,#ff0051,#ff004d,#ff0048,#ff0045,#ff0041,#ff003e,#ff003b,#ff0038,#ff0035,#ff0033,#ff0031,#ff002e,#ff002c,#ff002a,#ff0029,#ff0027,#ff0025,#ff0024,#ff0022)"></div>
<div class="s" style="top:171px;height:3px;background:linear-gradient(90deg,#00eaff,#00e4ff,#00dfff,#00d9ff,#00d4ff,#00ceff,#00c8ff,#00c2ff,#00bcff,#00b6ff,#00b0ff,#00a9ff,#00a3ff,#129cff,#2f96ff,#4d8fff,#6b88ff,#8a80ff,#a979ff,#c971ff,#ea6aff,#ff5df3,#ff4cd8,#ff3ec1,#ff32af,#ff299f,#ff2092,#ff1986,#ff137c,#ff0d74,#ff086c,#ff0465,#ff005e,#ff0059,#ff0054,#ff004f,#ff004b,#ff0047,#ff0043,#ff0040,#ff003d,#ff003a,#ff0037,#ff0035,#ff0032,#ff0030,#ff002e,#ff002c,#ff002a,#ff0028,#ff0027,#ff0025,#ff0024)"></div>
<div class="s" style="top:174px;height:3px;background:linear-gradient(90deg,#00e4ff,#00deff,#00d9ff,#00d4ff,#00ceff,#00c8ff,#00c3ff,#00bdff,#00b7ff,#00b1ff,#00aaff,#00a4ff,#009eff,#1197ff,#2d90ff,#4a8aff,#6783ff,#857cff,#a474ff,#c36dff,#e366ff,#ff5cfa,#ff4bde,#ff3dc7,#ff31b4,#ff27a4,#ff1f96,#ff188a,#ff1280,#ff0c77,#ff076f,#ff0368,#ff0061,#ff005b,#ff0056,#ff0051,#ff004d,#ff0049,#ff0045,#ff0042,#ff003f,#ff003c,#ff0039,#ff0036,#ff0034,#ff0032,#ff002f,#ff002d,#ff002c,#ff002a,#ff0028,#ff0026,#ff0025)"></div>
<div class="s" style="top:177px;height:3px;background:linear-gradient(90deg,#00deff,#00d9ff,#00d3ff,#00ceff,#00c8ff,#00c3ff,#00bdff,#00b7ff,#00b1ff,#00abff,#00a5ff,#009fff,#0099ff,#0f92ff,#2b8cff,#4785ff,#647eff,#8277ff,#9f70ff,#be69ff,#dd61ff,#fd5aff,#ff49e4,#ff3ccc,#ff30b9,#ff26a8,#ff1e9a,#ff178e,#ff1183,#ff0b7a,#ff0672,#ff026b,#ff0064,#ff005e,#ff0059,#ff0054,#ff004f,#ff004b,#ff0047,#ff0044,#ff0041,#ff003e,#ff003b,#ff0038,#ff0036,#ff0033,#ff0031,#ff002f,#ff002d,#ff002b,#ff0029,#ff0028,#ff0026)"></div>
<div class="s" style="top:180px;height:3px;background:linear-gradient(90deg,#00d8ff,#00d3ff,#00ceff,#00c8ff,#00c3ff,#00bdff,#00b8ff,#00b2ff,#00acff,#00a6ff,#00a0ff,#009aff,#0094ff,#0e8eff,#2987ff,#4580ff,#617aff,#7e73ff,#9b6cff,#b965ff,#d75dff,#f656ff,#ff48ea,#ff3ad2,#ff2fbe,#ff25ad,#ff1d9e,#ff1692,#ff1087,#ff0a7e,#ff0675,#ff016e,#ff0067,#ff0061,#ff005b,#ff0056,#ff0052,#ff004d,#ff0049,#ff0046,#ff0042,#ff003f,#ff003c,#ff003a,#ff0037,#ff0035,#ff0033,#ff0031,#ff002f,#ff002d,#ff002b,#ff0029,#ff0028)"></div>
<div class="s" style="top:183px;height:3px;background:linear-gradient(90deg,#00d3ff,#00ceff,#00c8ff,#00c3ff,#00beff,#00b8ff,#00b3ff,#00adff,#00a7ff,#00a1ff,#009cff,#0095ff,#008fff,#0d89ff,#2783ff,#427cff,#5e75ff,#7a6fff,#9768ff,#b461ff,#d15aff,#f052ff,#ff47f0,#ff39d7,#ff2ec3,#ff24b1,#ff1ca3,#ff1596,#ff0f8b,#ff0981,#ff0578,#ff0071,#ff006a,#ff0063,#ff005e,#ff0059,#ff0054,#ff0050,#ff004c,#ff0048,#ff0044,#ff0041,#ff003e,#ff003c,#ff0039,#ff0036,#ff0034,#ff0032,#ff0030,#ff002e,#ff002c,#ff002b,#ff0029)"></div>
<div class="s" style="top:186px;height:3px;background:linear-gradient(90deg,#00ceff,#00c9ff,#00c3ff,#00beff,#00b9ff,#00b3ff,#00aeff,#00a8ff,#00a3ff,#009dff,#0097ff,#0091ff,#008bff,#0c85ff,#267eff,#4078ff,#5b71ff,#776bff,#9364ff,#af5dff,#cc56ff,#ea4fff,#ff45f7,#ff38dd,#ff2cc8,#ff23b6,#ff1ba7,#ff149a,#ff0e8e,#ff0984,#ff047b,#ff0074,#ff006c,#ff0066,#ff0060,#ff005b,#ff0056,#ff0052,#ff004e,#ff004a,#ff0046,#ff0043,#ff0040,#ff003d,#ff003b,#ff0038,#ff0036,#ff0034,#ff0031,#ff0030,#ff002e,#ff002c,#ff002a)"></div>
<div class="s" style="top:189px;height:3px;background:linear-gradient(90deg,#00c9ff,#00c4ff,#00beff,#00b9ff,#00b4ff,#00afff,#00a9ff,#00a4ff,#009eff,#0098ff,#0093ff,#008dff,#0087ff,#0b81ff,#247aff,#3e74ff,#586eff,#7367ff,#8f60ff,#aa5aff,#c753ff,#e44cff,#ff44fd,#ff36e3,#ff2bcd,#ff22bb,#ff1aab,#ff139e,#ff0d92,#ff0888,#ff037f,#ff0077,#ff006f,#ff0069,#ff0063,#ff005d,#ff0058,#ff0054,#ff0050,#ff004c,#ff0048,#ff0045,#ff0042,#ff003f,#ff003c,#ff003a,#ff0037,#ff0035,#ff0033,#ff0031,#ff002f,#ff002d,#ff002c)"></div>
<div class="s" style="top:192px;height:3px;background:linear-gradient(90deg,#00c4ff,#00bfff,#00baff,#00b5ff,#00afff,#00aaff,#00a5ff,#009fff,#009aff,#0094ff,#008eff,#0088ff,#0083ff,#0a7dff,#2376ff,#3c70ff,#566aff,#7063ff,#8b5dff,#a656ff,#c24fff,#de48ff,#fb41ff,#ff35e8,#ff2ad2,#ff21bf,#ff19af,#ff12a2,#ff0c96,#ff078b,#ff0282,#ff007a,#ff0072,#ff006b,#ff0065,#ff0060,#ff005b,#ff0056,#ff0052,#ff004e,#ff004a,#ff0047,#ff0044,#ff0041,#ff003e,#ff003b,#ff0039,#ff0037,#ff0034,#ff0032,#ff0030,#ff002f,#ff002d)"></div>
<div class="s" style="top:195px;height:3px;background:linear-gradient(90deg,#00bfff,#00baff,#00b5ff,#00b0ff,#00abff,#00a6ff,#00a0ff,#009bff,#0095ff,#0090ff,#008aff,#0084ff,#007fff,#0979ff,#2173ff,#3a6dff,#5366ff,#6d60ff,#8759ff,#a253ff,#bd4cff,#d945ff,#f53eff,#ff34ee,#ff29d7,#ff1fc4,#ff18b4,#ff11a5,#ff0b99,#ff068f,#ff0185,#ff007d,#ff0075,#ff006e,#ff0068,#ff0062,#ff005d,#ff0058,#ff0054,#ff0050,#ff004c,#ff0049,#ff0046,#ff0043,#ff0040,#ff003d,#ff003b,#ff0038,#ff0036,#ff0034,#ff0032,#ff0030,#ff002e)"></div>
<div class="s" style="top:198px;height:3px;background:linear-gradient(90deg,#00baff,#00b6ff,#00b1ff,#00acff,#00a7ff,#00a1ff,#009cff,#0097ff,#0091ff,#008cff,#0086ff,#0081ff,#007bff,#0875ff,#206fff,#3869ff,#5163ff,#6a5dff,#8456ff,#9e50ff,#b849ff,#d342ff,#ef3cff,#ff32f4,#ff27dc,#ff1ec9,#ff16b8,#ff10a9,#ff0a9d,#ff0592,#ff0088,#ff0080,#ff0078,#ff0071,#ff006b,#ff0065,#ff005f,#ff005b,#ff0056,#ff0052,#ff004e,#ff004b,#ff0047,#ff0044,#ff0041,#ff003f,#ff003c,#ff003a,#ff0037,#ff0035,#ff0033,#ff0031,#ff0030)"></div>
<div class="s" style="top:201px;height:3px;background:linear-gradient(90deg,#00b6ff,#00b1ff,#00acff,#00a7ff,#00a2ff,#009dff,#0098ff,#0093ff,#008dff,#0088ff,#0082ff,#007dff,#0077ff,#0771ff,#1e6cff,#3666ff,#4e60ff,#6759ff,#8053ff,#9a4dff,#b446ff,#ce40ff,#e939ff,#ff31fa,#ff26e1,#ff1dcd,#ff15bc,#ff0fad,#ff09a1,#ff0495,#ff008b,#ff0083,#ff007b,#ff0074,#ff006d,#ff0067,#ff0062,#ff005d,#ff0058,#ff0054,#ff0050,#ff004d,#ff0049,#ff0046,#ff0043,#ff0040,#ff003e,#ff003b,#ff0039,#ff0037,#ff0035,#ff0033,#ff0031)"></div>
<div class="s" style="top:204px;height:3px;background:linear-gradient(90deg,#00b2ff,#00adff,#00a8ff,#00a3ff,#009eff,#0099ff,#0094ff,#008fff,#008aff,#0084ff,#007fff,#0079ff,#0074ff,#066eff,#1d68ff,#3462ff,#4c5cff,#6456ff,#7d50ff,#964aff,#b043ff,#ca3dff,#e436ff,#ff30ff,#ff25e7,#ff1cd2,#ff14c1,#ff0eb1,#ff08a4,#ff0399,#ff008f,#ff0086,#ff007e,#ff0076,#ff0070,#ff006a,#ff0064,#ff005f,#ff005a,#ff0056,#ff0052,#ff004e,#ff004b,#ff0048,#ff0045,#ff0042,#ff003f,#ff003d,#ff003a,#ff0038,#ff0036,#ff0034,#ff0032)"></div>
<div class="s" style="top:207px;height:3px;background:linear-gradient(90deg,#00aeff,#00a9ff,#00a4ff,#009fff,#009aff,#0095ff,#0090ff,#008bff,#0086ff,#0081ff,#007bff,#0076ff,#0070ff,#056bff,#1b65ff,#335fff,#4a59ff,#6253ff,#7a4dff,#9347ff,#ac41ff,#c53aff,#df34ff,#f92dff,#ff24ec,#ff1bd7,#ff13c5,#ff0db5,#ff07a8,#ff029c,#ff0092,#ff0089,#ff0080,#ff0079,#ff0072,#ff006c,#ff0067,#ff0061,#ff005d,#ff0058,#ff0054,#ff0050,#ff004d,#ff004a,#ff0047,#ff0044,#ff0041,#ff003e,#ff003c,#ff003a,#ff0038,#ff0036,#ff0034)"></div>
<div class="s" style="top:210px;height:3px;background:linear-gradient(90deg,#00aaff,#00a5ff,#00a0ff,#009cff,#0097ff,#0092ff,#008dff,#0088ff,#0082ff,#007dff,#0078ff,#0073ff,#006dff,#0467ff,#1a62ff,#315cff,#4856ff,#5f50ff,#774aff,#8f44ff,#a83eff,#c038ff,#da31ff,#f32bff,#ff22f1,#ff19dc,#ff12c9,#ff0cba,#ff06ac,#ff01a0,#ff0095,#ff008c,#ff0083,#ff007c,#ff0075,#ff006f,#ff0069,#ff0064,#ff005f,#ff005a,#ff0056,#ff0052,#ff004f,#ff004b,#ff0048,#ff0045,#ff0043,#ff0040,#ff003e,#ff003b,#ff0039,#ff0037,#ff0035)"></div>
<div class="s" style="top:213px;height:3px;background:linear-gradient(90deg,#00a6ff,#00a1ff,#009dff,#0098ff,#0093ff,#008eff,#0089ff,#0084ff,#007fff,#007aff,#0075ff,#006fff,#006aff,#0364ff,#195fff,#2f59ff,#4653ff,#5d4eff,#7448ff,#8c42ff,#a43cff,#bc35ff,#d52fff,#ee29ff,#ff21f7,#ff18e0,#ff11ce,#ff0abe,#ff05b0,#ff00a3,#ff0099,#ff008f,#ff0086,#ff007f,#ff0077,#ff0071,#ff006b,#ff0066,#ff0061,#ff005c,#ff0058,#ff0054,#ff0051,#ff004d,#ff004a,#ff0047,#ff0044,#ff0042,#ff003f,#ff003d,#ff003a,#ff0038,#ff0036)"></div>
<div class="s" style="top:216px;height:3px;background:linear-gradient(90deg,#00a2ff,#009eff,#0099ff,#0094ff,#008fff,#008bff,#0086ff,#0081ff,#007cff,#0077ff,#0071ff,#006cff,#0067ff,#0261ff,#185cff,#2e56ff,#4451ff,#5a4bff,#7145ff,#883fff,#a039ff,#b833ff,#d02dff,#e927ff,#ff20fc,#ff17e5,#ff10d2,#ff09c2,#ff04b3,#ff00a7,#ff009c,#ff0092,#ff0089,#ff0081,#ff007a,#ff0074,#ff006e,#ff0068,#ff0063,#ff005e,#ff005a,#ff0056,#ff0052,#ff004f,#ff004c,#ff0049,#ff0046,#ff0043,#ff0041,#ff003e,#ff003c,#ff003a,#ff0038)"></div>
<div class="s" style="top:219px;height:3px;background:linear-gradient(90deg,#009fff,#009aff,#0095ff,#0091ff,#008cff,#0087ff,#0082ff,#007dff,#0078ff,#0073ff,#006eff,#0069ff,#0064ff,#025fff,#1759ff,#2c54ff,#424eff,#5848ff,#6f43ff,#853dff,#9c37ff,#b431ff,#cc2bff,#e424ff,#fd1eff,#ff16ea,#ff0fd7,#ff08c6,#ff03b7,#ff00aa,#ff009f,#ff0095,#ff008c,#ff0084,#ff007d,#ff0076,#ff0070,#ff006a,#ff0065,#ff0061,#ff005c,#ff0058,#ff0054,#ff0051,#ff004d,#ff004a,#ff0047,#ff0045,#ff0042,#ff0040,#ff003d,#ff003b,#ff0039)"></div>
<div class="s" style="top:222px;height:3px;background:linear-gradient(90deg,#009bff,#0097ff,#0092ff,#008dff,#0089ff,#0084ff,#007fff,#007aff,#0075ff,#0070ff,#006bff,#0066ff,#0061ff,#015cff,#1656ff,#2b51ff,#404bff,#5646ff,#6c40ff,#823aff,#9935ff,#b02fff,#c829ff,#df22ff,#f71cff,#ff15ef,#ff0ddb,#ff07ca,#ff02bb,#ff00ae,#ff00a2,#ff0098,#ff008f,#ff0087,#ff007f,#ff0079,#ff0072,#ff006d,#ff0067,#ff0063,#ff005e,#ff005a,#ff0056,#ff0053,#ff004f,#ff004c,#ff0049,#ff0046,#ff0044,#ff0041,#ff003f,#ff003d,#ff003a)"></div>
<div class="s" style="top:225px;height:3px;background:linear-gradient(90deg,#0098ff,#0093ff,#008fff,#008aff,#0085ff,#0081ff,#007cff,#0077ff,#0072ff,#006dff,#0068ff,#0063ff,#005eff,#0059ff,#1554ff,#294eff,#3e49ff,#5443ff,#693eff,#7f38ff,#9632ff,#ac2dff,#c327ff,#db21ff,#f21aff,#ff13f4,#ff0ce0,#ff06ce,#ff01bf,#ff00b2,#ff00a6,#ff009b,#ff0092,#ff008a,#ff0082,#ff007b,#ff0075,#ff006f,#ff006a,#ff0065,#ff0060,#ff005c,#ff0058,#ff0054,#ff0051,#ff004e,#ff004b,#ff0048,#ff0045,#ff0043,#ff0040,#ff003e,#ff003c)"></div>
<div class="s" style="top:228px;height:3px;background:linear-gradient(90deg,#0094ff,#0090ff,#008bff,#0087ff,#0082ff,#007eff,#0079ff,#0074ff,#006fff,#006bff,#0066ff,#0061ff,#005cff,#0056ff,#1451ff,#284cff,#3d46ff,#5241ff,#673cff,#7d36ff,#9330ff,#a92aff,#bf25ff,#d61fff,#ed19ff,#ff12f9,#ff0be4,#ff05d2,#ff00c3,#ff00b5,#ff00a9,#ff009f,#ff0095,#ff008c,#ff0085,#ff007e,#ff0077,#ff0071,#ff006c,#ff0067,#ff0062,#ff005e,#ff005a,#ff0056,#ff0053,#ff004f,#ff004c,#ff0049,#ff0047,#ff0044,#ff0042,#ff003f,#ff003d)"></div>
<div class="s" style="top:231px;height:3px;background:linear-gradient(90deg,#0091ff,#008dff,#0088ff,#0084ff,#007fff,#007bff,#0076ff,#0071ff,#006dff,#0068ff,#0063ff,#005eff,#0059ff,#0054ff,#134fff,#2749ff,#3b44ff,#503fff,#6539ff,#7a34ff,#8f2eff,#a529ff,#bb23ff,#d21dff,#e917ff,#ff11fe,#ff0ae9,#ff04d6,#ff00c7,#ff00b9,#ff00ad,#ff00a2,#ff0098,#ff008f,#ff0087,#ff0080,#ff007a,#ff0074,#ff006e,#ff0069,#ff0064,#ff0060,#ff005c,#ff0058,#ff0054,#ff0051,#ff004e,#ff004b,#ff0048,#ff0046,#ff0043,#ff0041,#ff003e)"></div>
<div class="s" style="top:234px;height:3px;background:linear-gradient(90deg,#008eff,#008aff,#0085ff,#0081ff,#007cff,#0078ff,#0073ff,#006fff,#006aff,#0065ff,#0060ff,#005bff,#0056ff,#0051ff,#124cff,#2547ff,#3942ff,#4e3dff,#6237ff,#7732ff,#8c2cff,#a227ff,#b821ff,#ce1bff,#e415ff,#fb0fff,#ff09ed,#ff03db,#ff00cb,#ff00bc,#ff00b0,#ff00a5,#ff009b,#ff0092,#ff008a,#ff0083,#ff007c,#ff0076,#ff0070,#ff006b,#ff0066,#ff0062,#ff005e,#ff005a,#ff0056,#ff0053,#ff0050,#ff004d,#ff004a,#ff0047,#ff0045,#ff0042,#ff0040)"></div>
<div class="s" style="top:237px;height:3px;background:linear-gradient(90deg,#008bff,#0087ff,#0082ff,#007eff,#007aff,#0075ff,#0070ff,#006cff,#0067ff,#0062ff,#005eff,#0059ff,#0054ff,#004fff,#114aff,#2445ff,#3840ff,#4c3aff,#6035ff,#7530ff,#8a2aff,#9f25ff,#b41fff,#ca19ff,#e014ff,#f60eff,#ff08f2,#ff02df,#ff00ce,#ff00c0,#ff00b3,#ff00a8,#ff009e,#ff0095,#ff008d,#ff0085,#ff007e,#ff0078,#ff0072,#ff006d,#ff0068,#ff0064,#ff0060,#ff005c,#ff0058,#ff0054,#ff0051,#ff004e,#ff004b,#ff0049,#ff0046,#ff0044,#ff0041)"></div>
<div class="s" style="top:240px;height:3px;background:linear-gradient(90deg,#0088ff,#0084ff,#007fff,#007bff,#0077ff,#0072ff,#006eff,#0069ff,#0065ff,#0060ff,#005bff,#0056ff,#0052ff,#004dff,#1048ff,#2343ff,#363eff,#4a38ff,#5e33ff,#722eff,#8728ff,#9b23ff,#b11dff,#c618ff,#db12ff,#f10cff,#ff06f7,#ff01e3,#ff00d2,#ff00c4,#ff00b7,#ff00ab,#ff00a1,#ff0098,#ff008f,#ff0088,#ff0081,#ff007b,#ff0075,#ff006f,#ff006a,#ff0066,#ff0061,#ff005d,#ff005a,#ff0056,#ff0053,#ff0050,#ff004d,#ff004a,#ff0047,#ff0045,#ff0043)"></div>
<div class="s" style="top:243px;height:3px;background:linear-gradient(90deg,#0085ff,#0081ff,#007dff,#0078ff,#0074ff,#0070ff,#006bff,#0067ff,#0062ff,#005dff,#0059ff,#0054ff,#004fff,#004aff,#0f46ff,#2241ff,#353bff,#4836ff,#5c31ff,#702cff,#8427ff,#9821ff,#ad1cff,#c216ff,#d711ff,#ed0bff,#ff05fb,#ff00e7,#ff00d6,#ff00c7,#ff00ba,#ff00ae,#ff00a4,#ff009b,#ff0092,#ff008a,#ff0083,#ff007d,#ff0077,#ff0071,#ff006c,#ff0068,#ff0063,#ff005f,#ff005b,#ff0058,#ff0054,#ff0051,#ff004e,#ff004c,#ff0049,#ff0046,#ff0044)"></div>
<div class="s" style="top:246px;height:3px;background:linear-gradient(90deg,#0082ff,#007eff,#007aff,#0076ff,#0071ff,#006dff,#0069ff,#0064ff,#0060ff,#005bff,#0056ff,#0052ff,#004dff,#0048ff,#0e43ff,#213eff,#3339ff,#4734ff,#5a2fff,#6d2aff,#8125ff,#9520ff,#aa1aff,#be15ff,#d30fff,#e90aff,#fe04ff,#ff00ec,#ff00da,#ff00cb,#ff00be,#ff00b2,#ff00a7,#ff009d,#ff0095,#ff008d,#ff0086,#ff007f,#ff0079,#ff0074,#ff006e,#ff006a,#ff0065,#ff0061,#ff005d,#ff005a,#ff0056,#ff0053,#ff0050,#ff004d,#ff004a,#ff0048,#ff0045)"></div>
<div class="s" style="top:249px;height:3px;background:linear-gradient(90deg,#0080ff,#007bff,#0077ff,#0073ff,#006fff,#006bff,#0066ff,#0062ff,#005dff,#0059ff,#0054ff,#0050ff,#004bff,#0046ff,#0d41ff,#1f3cff,#3238ff,#4533ff,#582eff,#6b28ff,#7f23ff,#931eff,#a719ff,#bb13ff,#cf0eff,#e408ff,#f903ff,#ff00f0,#ff00de,#ff00cf,#ff00c1,#ff00b5,#ff00aa,#ff00a0,#ff0097,#ff008f,#ff0088,#ff0082,#ff007b,#ff0076,#ff0070,#ff006c,#ff0067,#ff0063,#ff005f,#ff005b,#ff0058,#ff0055,#ff0051,#ff004f,#ff004c,#ff0049,#ff0047)"></div>
<div class="s" style="top:252px;height:3px;background:linear-gradient(90deg,#007dff,#0079ff,#0075ff,#0071ff,#006cff,#0068ff,#0064ff,#005fff,#005bff,#0056ff,#0052ff,#004dff,#0049ff,#0044ff,#0c3fff,#1e3bff,#3136ff,#4331ff,#562cff,#6927ff,#7c22ff,#901cff,#a317ff,#b712ff,#cc0cff,#e007ff,#f501ff,#ff00f4,#ff00e2,#ff00d2,#ff00c5,#ff00b8,#ff00ad,#ff00a3,#ff009a,#ff0092,#ff008b,#ff0084,#ff007e,#ff0078,#ff0073,#ff006e,#ff0069,#ff0065,#ff0061,#ff005d,#ff0059,#ff0056,#ff0053,#ff0050,#ff004d,#ff004b,#ff0048)"></div>
<div class="s" style="top:255px;height:3px;background:linear-gradient(90deg,#007aff,#0076ff,#0072ff,#006eff,#006aff,#0066ff,#0061ff,#005dff,#0059ff,#0054ff,#0050ff,#004bff,#0047ff,#0042ff,#0c3dff,#1d39ff,#2f34ff,#422fff,#542aff,#6725ff,#7a20ff,#8d1bff,#a016ff,#b410ff,#c80bff,#dc06ff,#f100ff,#ff00f9,#ff00e6,#ff00d6,#ff00c8,#ff00bb,#ff00b0,#ff00a6,#ff009d,#ff0095,#ff008d,#ff0086,#ff0080,#ff007a,#ff0075,#ff0070,#ff006b,#ff0067,#ff0063,#ff005f,#ff005b,#ff0058,#ff0055,#ff0052,#ff004f,#ff004c,#ff004a)"></div>
<div class="s" style="top:258px;height:3px;background:linear-gradient(90deg,#0078ff,#0074ff,#0070ff,#006cff,#0068ff,#0063ff,#005fff,#005bff,#0057ff,#0052ff,#004eff,#0049ff,#0045ff,#0040ff,#0b3bff,#1c37ff,#2e32ff,#402dff,#5228ff,#6523ff,#771eff,#8a19ff,#9d14ff,#b10fff,#c40aff,#d805ff,#ec00ff,#ff00fd,#ff00ea,#ff00da,#ff00cb,#ff00bf,#ff00b3,#ff00a9,#ff00a0,#ff0097,#ff0090,#ff0089,#ff0082,#ff007c,#ff0077,#ff0072,#ff006d,#ff0068,#ff0064,#ff0060,#ff005d,#ff0059,#ff0056,#ff0053,#ff0050,#ff004d,#ff004b)"></div>
<div class="s" style="top:261px;height:3px;background:linear-gradient(90deg,#0075ff,#0071ff,#006dff,#0069ff,#0065ff,#0061ff,#005dff,#0059ff,#0054ff,#0050ff,#004cff,#0047ff,#0043ff,#003eff,#0a3aff,#1b35ff,#2d30ff,#3f2cff,#5127ff,#6322ff,#751dff,#8818ff,#9b13ff,#ae0eff,#c109ff,#d503ff,#e800ff,#fc00ff,#ff00ee,#ff00de,#ff00cf,#ff00c2,#ff00b6,#ff00ac,#ff00a2,#ff009a,#ff0092,#ff008b,#ff0084,#ff007e,#ff0079,#ff0074,#ff006f,#ff006a,#ff0066,#ff0062,#ff005e,#ff005b,#ff0058,#ff0055,#ff0052,#ff004f,#ff004c)"></div>
<div class="s" style="top:264px;height:3px;background:linear-gradient(90deg,#0073ff,#006fff,#006bff,#0067ff,#0063ff,#005fff,#005bff,#0057ff,#0052ff,#004eff,#004aff,#0045ff,#0041ff,#003cff,#0938ff,#1a33ff,#2c2fff,#3d2aff,#4f25ff,#6120ff,#731bff,#8517ff,#9812ff,#ab0cff,#be07ff,#d102ff,#e400ff,#f800ff,#ff00f3,#ff00e1,#ff00d3,#ff00c5,#ff00b9,#ff00af,#ff00a5,#ff009d,#ff0095,#ff008d,#ff0087,#ff0081,#ff007b,#ff0076,#ff0071,#ff006c,#ff0068,#ff0064,#ff0060,#ff005d,#ff0059,#ff0056,#ff0053,#ff0050,#ff004e)"></div>
<div class="s" style="top:267px;height:3px;background:linear-gradient(90deg,#0071ff,#006dff,#0069ff,#0065ff,#0061ff,#005dff,#0059ff,#0054ff,#0050ff,#004cff,#0048ff,#0043ff,#003fff,#003bff,#0936ff,#1932ff,#2b2dff,#3c28ff,#4d24ff,#5f1fff,#711aff,#8315ff,#9510ff,#a80bff,#ba06ff,#cd01ff,#e100ff,#f400ff,#ff00f7,#ff00e5,#ff00d6,#ff00c9,#ff00bd,#ff00b2,#ff00a8,#ff009f,#ff0097,#ff0090,#ff0089,#ff0083,#ff007d,#ff0078,#ff0073,#ff006e,#ff006a,#ff0066,#ff0062,#ff005e,#ff005b,#ff0058,#ff0055,#ff0052,#ff004f)"></div>
<div class="s" style="top:270px;height:3px;background:linear-gradient(90deg,#006eff,#006aff,#0067ff,#0063ff,#005fff,#005bff,#0057ff,#0052ff,#004eff,#004aff,#0046ff,#0042ff,#003dff,#0039ff,#0834ff,#1930ff,#292bff,#3a27ff,#4c22ff,#5d1dff,#6f19ff,#8014ff,#930fff,#a50aff,#b705ff,#ca00ff,#dd00ff,#f000ff,#ff00fb,#ff00e9,#ff00da,#ff00cc,#ff00c0,#ff00b5,#ff00ab,#ff00a2,#ff009a,#ff0092,#ff008b,#ff0085,#ff007f,#ff007a,#ff0075,#ff0070,#ff006b,#ff0067,#ff0063,#ff0060,#ff005c,#ff0059,#ff0056,#ff0053,#ff0050)"></div>
<div class="s" style="top:273px;height:3px;background:linear-gradient(90deg,#006cff,#0068ff,#0064ff,#0060ff,#005dff,#0059ff,#0055ff,#0050ff,#004cff,#0048ff,#0044ff,#0040ff,#003bff,#0037ff,#0733ff,#182eff,#282aff,#3925ff,#4a21ff,#5b1cff,#6d17ff,#7e13ff,#900eff,#a209ff,#b404ff,#c700ff,#d900ff,#ec00ff,#ff00ff,#ff00ed,#ff00dd,#ff00cf,#ff00c3,#ff00b8,#ff00ae,#ff00a4,#ff009c,#ff0095,#ff008e,#ff0087,#ff0081,#ff007c,#ff0077,#ff0072,#ff006d,#ff0069,#ff0065,#ff0061,#ff005e,#ff005b,#ff0058,#ff0055,#ff0052)"></div>
<div class="s" style="top:276px;height:3px;background:linear-gradient(90deg,#006aff,#0066ff,#0062ff,#005eff,#005bff,#0057ff,#0053ff,#004fff,#004aff,#0046ff,#0042ff,#003eff,#003aff,#0035ff,#0731ff,#172dff,#2728ff,#3824ff,#491fff,#591bff,#6b16ff,#7c11ff,#8d0cff,#9f08ff,#b103ff,#c300ff,#d600ff,#e800ff,#fb00ff,#ff00f1,#ff00e1,#ff00d3,#ff00c6,#ff00bb,#ff00b0,#ff00a7,#ff009f,#ff0097,#ff0090,#ff0089,#ff0083,#ff007e,#ff0078,#ff0074,#ff006f,#ff006b,#ff0067,#ff0063,#ff0060,#ff005c,#ff0059,#ff0056,#ff0053)"></div>
<div class="s" style="top:279px;height:3px;background:linear-gradient(90deg,#0068ff,#0064ff,#0060ff,#005cff,#0059ff,#0055ff,#0051ff,#004dff,#0049ff,#0045ff,#0040ff,#003cff,#0038ff,#0034ff,#062fff,#162bff,#2627ff,#3622ff,#471eff,#5819ff,#6915ff,#7a10ff,#8b0bff,#9d07ff,#ae02ff,#c000ff,#d200ff,#e500ff,#f700ff,#ff00f5,#ff00e4,#ff00d6,#ff00c9,#ff00be,#ff00b3,#ff00aa,#ff00a1,#ff0099,#ff0092,#ff008b,#ff0085,#ff0080,#ff007a,#ff0075,#ff0071,#ff006d,#ff0069,#ff0065,#ff0061,#ff005e,#ff005b,#ff0058,#ff0055)"></div>
<div class="s" style="top:282px;height:3px;background:linear-gradient(90deg,#0066ff,#0062ff,#005eff,#005aff,#0057ff,#0053ff,#004fff,#004bff,#0047ff,#0043ff,#003fff,#003bff,#0036ff,#0032ff,#052eff,#152aff,#2525ff,#3521ff,#461cff,#5618ff,#6713ff,#780fff,#890aff,#9a05ff,#ab01ff,#bd00ff,#cf00ff,#e100ff,#f300ff,#ff00f9,#ff00e8,#ff00d9,#ff00cc,#ff00c1,#ff00b6,#ff00ac,#ff00a4,#ff009c,#ff0094,#ff008e,#ff0087,#ff0082,#ff007c,#ff0077,#ff0073,#ff006e,#ff006a,#ff0066,#ff0063,#ff005f,#ff005c,#ff0059,#ff0056)"></div>
<div class="s" style="top:285px;height:3px;background:linear-gradient(90deg,#0064ff,#0060ff,#005cff,#0058ff,#0055ff,#0051ff,#004dff,#0049ff,#0045ff,#0041ff,#003dff,#0039ff,#0035ff,#0031ff,#052cff,#1428ff,#2424ff,#3420ff,#441bff,#5417ff,#6512ff,#760eff,#8609ff,#9704ff,#a900ff,#ba00ff,#cc00ff,#dd00ff,#ef00ff,#ff00fc,#ff00ec,#ff00dd,#ff00cf,#ff00c4,#ff00b9,#ff00af,#ff00a6,#ff009e,#ff0097,#ff0090,#ff008a,#ff0084,#ff007e,#ff0079,#ff0075,#ff0070,#ff006c,#ff0068,#ff0064,#ff0061,#ff005e,#ff005a,#ff0058)"></div>
<div class="s" style="top:288px;height:3px;background:linear-gradient(90deg,#0062ff,#005eff,#005aff,#0057ff,#0053ff,#004fff,#004bff,#0047ff,#0043ff,#003fff,#003bff,#0037ff,#0033ff,#002fff,#042bff,#1427ff,#2323ff,#331eff,#431aff,#5315ff,#6311ff,#740dff,#8408ff,#9503ff,#a600ff,#b700ff,#c800ff,#da00ff,#ec00ff,#fe00ff,#ff00ef,#ff00e0,#ff00d3,#ff00c7,#ff00bc,#ff00b2,#ff00a9,#ff00a1,#ff0099,#ff0092,#ff008c,#ff0086,#ff0080,#ff007b,#ff0076,#ff0072,#ff006e,#ff006a,#ff0066,#ff0062,#ff005f,#ff005c,#ff0059)"></div>
<div class="s" style="top:291px;height:3px;background:linear-gradient(90deg,#0060ff,#005cff,#0058ff,#0055ff,#0051ff,#004dff,#0049ff,#0046ff,#0042ff,#003eff,#003aff,#0036ff,#0032ff,#002eff,#042aff,#1325ff,#2221ff,#321dff,#4119ff,#5114ff,#6110ff,#720bff,#8207ff,#9202ff,#a300ff,#b400ff,#c500ff,#d700ff,#e800ff,#fa00ff,#ff00f3,#ff00e4,#ff00d6,#ff00ca,#ff00bf,#ff00b4,#ff00ab,#ff00a3,#ff009b,#ff0094,#ff008e,#ff0088,#ff0082,#ff007d,#ff0078,#ff0074,#ff006f,#ff006b,#ff0068,#ff0064,#ff0061,#ff005d,#ff005a)"></div>
<div class="s" style="top:294px;height:3px;background:linear-gradient(90deg,#005eff,#005aff,#0057ff,#0053ff,#004fff,#004bff,#0048ff,#0044ff,#0040ff,#003cff,#0038ff,#0034ff,#0030ff,#002cff,#0328ff,#1224ff,#2120ff,#311cff,#4017ff,#5013ff,#600fff,#700aff,#8006ff,#9001ff,#a100ff,#b100ff,#c200ff,#d300ff,#e500ff,#f600ff,#ff00f7,#ff00e7,#ff00d9,#ff00cd,#ff00c1,#ff00b7,#ff00ae,#ff00a5,#ff009e,#ff0097,#ff0090,#ff008a,#ff0084,#ff007f,#ff007a,#ff0075,#ff0071,#ff006d,#ff0069,#ff0066,#ff0062,#ff005f,#ff005c)"></div>
<div class="s" style="top:297px;height:3px;background:linear-gradient(90deg,#005cff,#0058ff,#0055ff,#0051ff,#004eff,#004aff,#0046ff,#0042ff,#003eff,#003bff,#0037ff,#0033ff,#002fff,#002bff,#0227ff,#1123ff,#201fff,#2f1aff,#3f16ff,#4e12ff,#5e0eff,#6e09ff,#7e05ff,#8e00ff,#9e00ff,#af00ff,#bf00ff,#d000ff,#e100ff,#f200ff,#ff00fa,#ff00ea,#ff00dc,#ff00d0,#ff00c4,#ff00ba,#ff00b1,#ff00a8,#ff00a0,#ff0099,#ff0092,#ff008c,#ff0086,#ff0081,#ff007c,#ff0077,#ff0073,#ff006f,#ff006b,#ff0067,#ff0064,#ff0060,#ff005d)"></div>
<div class="s" style="top:300px;height:3px;background:linear-gradient(90deg,#005aff,#0057ff,#0053ff,#004fff,#004cff,#0048ff,#0044ff,#0041ff,#003dff,#0039ff,#0035ff,#0031ff,#002dff,#0029ff,#0225ff,#1121ff,#1f1dff,#2e19ff,#3e15ff,#4d11ff,#5c0dff,#6c08ff,#7c04ff,#8c00ff,#9c00ff,#ac00ff,#bc00ff,#cd00ff,#de00ff,#ef00ff,#ff00fe,#ff00ee,#ff00e0,#ff00d3,#ff00c7,#ff00bd,#ff00b3,#ff00aa,#ff00a2,#ff009b,#ff0094,#ff008e,#ff0088,#ff0083,#ff007e,#ff0079,#ff0074,#ff0070,#ff006c,#ff0069,#ff0065,#ff0062,#ff005f)"></div>
<div class="s" style="top:303px;height:3px;background:linear-gradient(90deg,#0058ff,#0055ff,#0051ff,#004eff,#004aff,#0047ff,#0043ff,#003fff,#003bff,#0038ff,#0034ff,#0030ff,#002cff,#0028ff,#0124ff,#1020ff,#1f1cff,#2d18ff,#3c14ff,#4b10ff,#5b0bff,#6a07ff,#7a03ff,#8900ff,#9900ff,#a900ff,#ba00ff,#ca00ff,#db00ff,#eb00ff,#fc00ff,#ff00f1,#ff00e3,#ff00d6,#ff00ca,#ff00bf,#ff00b6,#ff00ad,#ff00a5,#ff009d,#ff0096,#ff0090,#ff008a,#ff0085,#ff0080,#ff007b,#ff0076,#ff0072,#ff006e,#ff006a,#ff0067,#ff0063,#ff0060)"></div>
<div class="s" style="top:306px;height:3px;background:linear-gradient(90deg,#0057ff,#0053ff,#0050ff,#004cff,#0049ff,#0045ff,#0041ff,#003eff,#003aff,#0036ff,#0032ff,#002fff,#002bff,#0027ff,#0123ff,#0f1fff,#1e1bff,#2c17ff,#3b13ff,#4a0fff,#590aff,#6806ff,#7802ff,#8700ff,#9700ff,#a700ff,#b700ff,#c700ff,#d700ff,#e800ff,#f900ff,#ff00f5,#ff00e6,#ff00d9,#ff00cd,#ff00c2,#ff00b8,#ff00af,#ff00a7,#ff00a0,#ff0099,#ff0092,#ff008c,#ff0087,#ff0081,#ff007c,#ff0078,#ff0074,#ff0070,#ff006c,#ff0068,#ff0065,#ff0062)"></div>
<div class="s" style="top:309px;height:3px;background:linear-gradient(90deg,#0055ff,#0051ff,#004eff,#004aff,#0047ff,#0043ff,#0040ff,#003cff,#0038ff,#0035ff,#0031ff,#002dff,#0029ff,#0026ff,#0022ff,#0f1eff,#1d1aff,#2b16ff,#3a12ff,#490eff,#5809ff,#6705ff,#7601ff,#8500ff,#9500ff,#a400ff,#b400ff,#c400ff,#d400ff,#e500ff,#f500ff,#ff00f8,#ff00e9,#ff00dc,#ff00d0,#ff00c5,#ff00bb,#ff00b2,#ff00aa,#ff00a2,#ff009b,#ff0094,#ff008e,#ff0088,#ff0083,#ff007e,#ff007a,#ff0075,#ff0071,#ff006d,#ff006a,#ff0066,#ff0063)"></div>
<div class="s" style="top:312px;height:3px;background:linear-gradient(90deg,#0053ff,#0050ff,#004cff,#0049ff,#0045ff,#0042ff,#003eff,#003bff,#0037ff,#0033ff,#0030ff,#002cff,#0028ff,#0024ff,#0020ff,#0e1dff,#1c19ff,#2a15ff,#3911ff,#470dff,#5608ff,#6504ff,#7400ff,#8300ff,#9200ff,#a200ff,#b200ff,#c100ff,#d100ff,#e100ff,#f200ff,#ff00fc,#ff00ed,#ff00df,#ff00d3,#ff00c8,#ff00be,#ff00b4,#ff00ac,#ff00a4,#ff009d,#ff0096,#ff0090,#ff008a,#ff0085,#ff0080,#ff007b,#ff0077,#ff0073,#ff006f,#ff006b,#ff0068,#ff0064)"></div>
<div class="s" style="top:315px;height:3px;background:linear-gradient(90deg,#0052ff,#004eff,#004bff,#0047ff,#0044ff,#0040ff,#003dff,#0039ff,#0036ff,#0032ff,#002eff,#002bff,#0027ff,#0023ff,#001fff,#0d1bff,#1b17ff,#2914ff,#3810ff,#460cff,#5508ff,#6303ff,#7200ff,#8100ff,#9000ff,#a000ff,#af00ff,#bf00ff,#ce00ff,#de00ff,#ee00ff,#ff00ff,#ff00f0,#ff00e2,#ff00d6,#ff00ca,#ff00c0,#ff00b7,#ff00ae,#ff00a6,#ff009f,#ff0098,#ff0092,#ff008c,#ff0087,#ff0082,#ff007d,#ff0079,#ff0074,#ff0070,#ff006d,#ff0069,#ff0066)"></div>
<div class="s" style="top:318px;height:3px;background:linear-gradient(90deg,#0050ff,#004dff,#0049ff,#0046ff,#0042ff,#003fff,#003bff,#0038ff,#0034ff,#0031ff,#002dff,#0029ff,#0026ff,#0022ff,#001eff,#0d1aff,#1b16ff,#2812ff,#370fff,#450bff,#5307ff,#6203ff,#7000ff,#7f00ff,#8e00ff,#9d00ff,#ad00ff,#bc00ff,#cb00ff,#db00ff,#eb00ff,#fb00ff,#ff00f3,#ff00e5,#ff00d9,#ff00cd,#ff00c3,#ff00b9,#ff00b1,#ff00a9,#ff00a1,#ff009b,#ff0094,#ff008e,#ff0089,#ff0084,#ff007f,#ff007a,#ff0076,#ff0072,#ff006e,#ff006b,#ff0067)"></div>
<div class="s" style="top:321px;height:3px;background:linear-gradient(90deg,#004eff,#004bff,#0048ff,#0044ff,#0041ff,#003dff,#003aff,#0036ff,#0033ff,#002fff,#002cff,#0028ff,#0024ff,#0021ff,#001dff,#0c19ff,#1a15ff,#2811ff,#360eff,#440aff,#5206ff,#6002ff,#6f00ff,#7d00ff,#8c00ff,#9b00ff,#aa00ff,#b900ff,#c900ff,#d800ff,#e800ff,#f800ff,#ff00f7,#ff00e8,#ff00dc,#ff00d0,#ff00c5,#ff00bc,#ff00b3,#ff00ab,#ff00a4,#ff009d,#ff0096,#ff0090,#ff008b,#ff0085,#ff0081,#ff007c,#ff0078,#ff0074,#ff0070,#ff006c,#ff0069)"></div>
<div class="s" style="top:324px;height:3px;background:linear-gradient(90deg,#004dff,#004aff,#0046ff,#0043ff,#003fff,#003cff,#0039ff,#0035ff,#0032ff,#002eff,#002aff,#0027ff,#0023ff,#001fff,#001cff,#0b18ff,#1914ff,#2710ff,#340dff,#4209ff,#5005ff,#5f01ff,#6d00ff,#7b00ff,#8a00ff,#9900ff,#a800ff,#b700ff,#c600ff,#d500ff,#e500ff,#f400ff,#ff00fa,#ff00ec,#ff00df,#ff00d3,#ff00c8,#ff00be,#ff00b5,#ff00ad,#ff00a6,#ff009f,#ff0098,#ff0092,#ff008d,#ff0087,#ff0082,#ff007e,#ff0079,#ff0075,#ff0071,#ff006e,#ff006a)"></div>
<div class="s" style="top:327px;height:3px;background:linear-gradient(90deg,#004bff,#0048ff,#0045ff,#0041ff,#003eff,#003bff,#0037ff,#0034ff,#0030ff,#002dff,#0029ff,#0026ff,#0022ff,#001eff,#001bff,#0b17ff,#1813ff,#260fff,#330cff,#4108ff,#4f04ff,#5d00ff,#6b00ff,#7a00ff,#8800ff,#9700ff,#a500ff,#b400ff,#c300ff,#d200ff,#e200ff,#f100ff,#ff00fd,#ff00ef,#ff00e1,#ff00d6,#ff00cb,#ff00c1,#ff00b8,#ff00b0,#ff00a8,#ff00a1,#ff009a,#ff0094,#ff008e,#ff0089,#ff0084,#ff007f,#ff007b,#ff0077,#ff0073,#ff006f,#ff006c)"></div>
<div class="s" style="top:330px;height:3px;background:linear-gradient(90deg,#004aff,#0047ff,#0043ff,#0040ff,#003dff,#0039ff,#0036ff,#0032ff,#002fff,#002cff,#0028ff,#0024ff,#0021ff,#001dff,#001aff,#0a16ff,#1812ff,#250eff,#320bff,#4007ff,#4e03ff,#5c00ff,#6a00ff,#7800ff,#8600ff,#9500ff,#a300ff,#b200ff,#c100ff,#d000ff,#df00ff,#ee00ff,#fd00ff,#ff00f2,#ff00e4,#ff00d8,#ff00cd,#ff00c3,#ff00ba,#ff00b2,#ff00aa,#ff00a3,#ff009c,#ff0096,#ff0090,#ff008b,#ff0086,#ff0081,#ff007d,#ff0078,#ff0074,#ff0071,#ff006d)"></div>
<div class="s" style="top:333px;height:3px;background:linear-gradient(90deg,#0048ff,#0045ff,#0042ff,#003fff,#003bff,#0038ff,#0035ff,#0031ff,#002eff,#002aff,#0027ff,#0023ff,#0020ff,#001cff,#0019ff,#0a15ff,#1711ff,#240eff,#310aff,#3f06ff,#4d02ff,#5a00ff,#6800ff,#7600ff,#8400ff,#9200ff,#a100ff,#af00ff,#be00ff,#cd00ff,#dc00ff,#eb00ff,#fa00ff,#ff00f5,#ff00e7,#ff00db,#ff00d0,#ff00c6,#ff00bd,#ff00b4,#ff00ac,#ff00a5,#ff009e,#ff0098,#ff0092,#ff008d,#ff0088,#ff0083,#ff007e,#ff007a,#ff0076,#ff0072,#ff006f)"></div>
<div class="s" style="top:336px;height:3px;background:linear-gradient(90deg,#0047ff,#0044ff,#0041ff,#003dff,#003aff,#0037ff,#0033ff,#0030ff,#002dff,#0029ff,#0026ff,#0022ff,#001fff,#001bff,#0018ff,#0914ff,#1610ff,#230dff,#3009ff,#3e05ff,#4b01ff,#5900ff,#6700ff,#7400ff,#8200ff,#9000ff,#9f00ff,#ad00ff,#bc00ff,#ca00ff,#d900ff,#e800ff,#f700ff,#ff00f8,#ff00ea,#ff00de,#ff00d3,#ff00c9,#ff00bf,#ff00b7,#ff00af,#ff00a7,#ff00a0,#ff009a,#ff0094,#ff008f,#ff0089,#ff0084,#ff0080,#ff007c,#ff0077,#ff0074,#ff0070)"></div>
<div class="s" style="top:339px;height:3px;background:linear-gradient(90deg,#0046ff,#0042ff,#003fff,#003cff,#0039ff,#0035ff,#0032ff,#002fff,#002bff,#0028ff,#0025ff,#0021ff,#001eff,#001aff,#0017ff,#0913ff,#160fff,#220cff,#3008ff,#3d04ff,#4a01ff,#5800ff,#6500ff,#7300ff,#8100ff,#8e00ff,#9d00ff,#ab00ff,#b900ff,#c700ff,#d600ff,#e500ff,#f400ff,#ff00fb,#ff00ed,#ff00e1,#ff00d6,#ff00cb,#ff00c2,#ff00b9,#ff00b1,#ff00a9,#ff00a2,#ff009c,#ff0096,#ff0090,#ff008b,#ff0086,#ff0082,#ff007d,#ff0079,#ff0075,#ff0071)"></div>
<div class="s" style="top:342px;height:3px;background:linear-gradient(90deg,#0044ff,#0041ff,#003eff,#003bff,#0037ff,#0034ff,#0031ff,#002eff,#002aff,#0027ff,#0023ff,#0020ff,#001dff,#0019ff,#0016ff,#0812ff,#150eff,#220bff,#2f07ff,#3c03ff,#4900ff,#5600ff,#6400ff,#7100ff,#7f00ff,#8d00ff,#9a00ff,#a800ff,#b700ff,#c500ff,#d300ff,#e200ff,#f100ff,#ff00ff,#ff00f1,#ff00e4,#ff00d8,#ff00ce,#ff00c4,#ff00bb,#ff00b3,#ff00ab,#ff00a4,#ff009e,#ff0098,#ff0092,#ff008d,#ff0088,#ff0083,#ff007f,#ff007b,#ff0077,#ff0073)"></div>
<div class="s" style="top:345px;height:3px;background:linear-gradient(90deg,#0043ff,#0040ff,#003dff,#0039ff,#0036ff,#0033ff,#0030ff,#002cff,#0029ff,#0026ff,#0022ff,#001fff,#001cff,#0018ff,#0015ff,#0811ff,#140dff,#210aff,#2e06ff,#3b03ff,#4800ff,#5500ff,#6200ff,#7000ff,#7d00ff,#8b00ff,#9800ff,#a600ff,#b400ff,#c200ff,#d100ff,#df00ff,#ee00ff,#fc00ff,#ff00f4,#ff00e7,#ff00db,#ff00d0,#ff00c7,#ff00be,#ff00b5,#ff00ae,#ff00a7,#ff00a0,#ff009a,#ff0094,#ff008f,#ff008a,#ff0085,#ff0080,#ff007c,#ff0078,#ff0074)"></div>
<div class="s" style="top:348px;height:3px;background:linear-gradient(90deg,#0042ff,#003eff,#003bff,#0038ff,#0035ff,#0032ff,#002fff,#002bff,#0028ff,#0025ff,#0021ff,#001eff,#001bff,#0017ff,#0014ff,#0710ff,#140dff,#2009ff,#2d05ff,#3a02ff,#4700ff,#5400ff,#6100ff,#6e00ff,#7b00ff,#8900ff,#9600ff,#a400ff,#b200ff,#c000ff,#ce00ff,#dc00ff,#eb00ff,#f900ff,#ff00f7,#ff00ea,#ff00de,#ff00d3,#ff00c9,#ff00c0,#ff00b8,#ff00b0,#ff00a9,#ff00a2,#ff009c,#ff0096,#ff0090,#ff008b,#ff0087,#ff0082,#ff007e,#ff007a,#ff0076)"></div>
<div class="s" style="top:351px;height:3px;background:linear-gradient(90deg,#0040ff,#003dff,#003aff,#0037ff,#0034ff,#0031ff,#002dff,#002aff,#0027ff,#0024ff,#0020ff,#001dff,#001aff,#0016ff,#0013ff,#070fff,#130cff,#1f08ff,#2c05ff,#3901ff,#4500ff,#5200ff,#5f00ff,#6c00ff,#7a00ff,#8700ff,#9400ff,#a200ff,#b000ff,#bd00ff,#cb00ff,#d900ff,#e800ff,#f600ff,#ff00fa,#ff00ec,#ff00e0,#ff00d5,#ff00cb,#ff00c2,#ff00ba,#ff00b2,#ff00ab,#ff00a4,#ff009e,#ff0098,#ff0092,#ff008d,#ff0088,#ff0084,#ff007f,#ff007b,#ff0077)"></div>
<div class="s" style="top:354px;height:3px;background:linear-gradient(90deg,#003fff,#003cff,#0039ff,#0036ff,#0033ff,#002fff,#002cff,#0029ff,#0026ff,#0023ff,#001fff,#001cff,#0019ff,#0015ff,#0012ff,#060eff,#120bff,#1f07ff,#2b04ff,#3800ff,#4400ff,#5100ff,#5e00ff,#6b00ff,#7800ff,#8500ff,#9200ff,#a000ff,#ad00ff,#bb00ff,#c900ff,#d700ff,#e500ff,#f300ff,#ff00fd,#ff00ef,#ff00e3,#ff00d8,#ff00ce,#ff00c5,#ff00bc,#ff00b4,#ff00ad,#ff00a6,#ff00a0,#ff009a,#ff0094,#ff008f,#ff008a,#ff0085,#ff0081,#ff007d,#ff0079)"></div>
<div class="s" style="top:357px;height:3px;background:linear-gradient(90deg,#003eff,#003bff,#0038ff,#0035ff,#0031ff,#002eff,#002bff,#0028ff,#0025ff,#0021ff,#001eff,#001bff,#0018ff,#0014ff,#0011ff,#060dff,#120aff,#1e07ff,#2a03ff,#3700ff,#4300ff,#5000ff,#5d00ff,#6900ff,#7600ff,#8300ff,#9100ff,#9e00ff,#ab00ff,#b900ff,#c600ff,#d400ff,#e200ff,#f000ff,#fe00ff,#ff00f2,#ff00e6,#ff00db,#ff00d0,#ff00c7,#ff00be,#ff00b6,#ff00af,#ff00a8,#ff00a1,#ff009b,#ff0096,#ff0090,#ff008c,#ff0087,#ff0082,#ff007e,#ff007a)"></div>
<div class="s" style="top:360px;height:3px;background:linear-gradient(90deg,#003dff,#003aff,#0036ff,#0033ff,#0030ff,#002dff,#002aff,#0027ff,#0024ff,#0020ff,#001dff,#001aff,#0017ff,#0013ff,#0010ff,#050dff,#1109ff,#1d06ff,#2902ff,#3600ff,#4200ff,#4f00ff,#5b00ff,#6800ff,#7500ff,#8200ff,#8f00ff,#9c00ff,#a900ff,#b700ff,#c400ff,#d200ff,#df00ff,#ed00ff,#fb00ff,#ff00f5,#ff00e9,#ff00dd,#ff00d3,#ff00c9,#ff00c1,#ff00b8,#ff00b1,#ff00aa,#ff00a3,#ff009d,#ff0098,#ff0092,#ff008d,#ff0088,#ff0084,#ff0080,#ff007c)"></div>
<div class="s" style="top:363px;height:3px;background:linear-gradient(90deg,#003bff,#0038ff,#0035ff,#0032ff,#002fff,#002cff,#0029ff,#0026ff,#0023ff,#001fff,#001cff,#0019ff,#0016ff,#0012ff,#000fff,#050cff,#1108ff,#1d05ff,#2902ff,#3500ff,#4100ff,#4d00ff,#5a00ff,#6700ff,#7300ff,#8000ff,#8d00ff,#9a00ff,#a700ff,#b400ff,#c200ff,#cf00ff,#dd00ff,#ea00ff,#f800ff,#ff00f8,#ff00eb,#ff00e0,#ff00d5,#ff00cc,#ff00c3,#ff00bb,#ff00b3,#ff00ac,#ff00a5,#ff009f,#ff0099,#ff0094,#ff008f,#ff008a,#ff0086,#ff0081,#ff007d)"></div>
<div class="s" style="top:366px;height:3px;background:linear-gradient(90deg,#003aff,#0037ff,#0034ff,#0031ff,#002eff,#002bff,#0028ff,#0025ff,#0022ff,#001eff,#001bff,#0018ff,#0015ff,#0012ff,#000eff,#040bff,#1008ff,#1c04ff,#2801ff,#3400ff,#4000ff,#4c00ff,#5900ff,#6500ff,#7200ff,#7e00ff,#8b00ff,#9800ff,#a500ff,#b200ff,#bf00ff,#cd00ff,#da00ff,#e800ff,#f500ff,#ff00fb,#ff00ee,#ff00e3,#ff00d8,#ff00ce,#ff00c5,#ff00bd,#ff00b5,#ff00ae,#ff00a7,#ff00a1,#ff009b,#ff0096,#ff0091,#ff008c,#ff0087,#ff0083,#ff007f)"></div>
<div class="s" style="top:369px;height:3px;background:linear-gradient(90deg,#0039ff,#0036ff,#0033ff,#0030ff,#002dff,#002aff,#0027ff,#0024ff,#0021ff,#001eff,#001aff,#0017ff,#0014ff,#0011ff,#000dff,#040aff,#0f07ff,#1b03ff,#2700ff,#3300ff,#3f00ff,#4b00ff,#5700ff,#6400ff,#7000ff,#7d00ff,#8900ff,#9600ff,#a300ff,#b000ff,#bd00ff,#ca00ff,#d700ff,#e500ff,#f200ff,#ff00fe,#ff00f1,#ff00e5,#ff00da,#ff00d1,#ff00c7,#ff00bf,#ff00b7,#ff00b0,#ff00a9,#ff00a3,#ff009d,#ff0097,#ff0092,#ff008d,#ff0089,#ff0084,#ff0080)"></div>
<div class="s" style="top:372px;height:3px;background:linear-gradient(90deg,#0038ff,#0035ff,#0032ff,#002fff,#002cff,#0029ff,#0026ff,#0023ff,#0020ff,#001dff,#0019ff,#0016ff,#0013ff,#0010ff,#000dff,#0309ff,#0f06ff,#1b03ff,#2600ff,#3200ff,#3e00ff,#4a00ff,#5600ff,#6200ff,#6f00ff,#7b00ff,#8800ff,#9400ff,#a100ff,#ae00ff,#bb00ff,#c800ff,#d500ff,#e200ff,#f000ff,#fd00ff,#ff00f4,#ff00e8,#ff00dd,#ff00d3,#ff00ca,#ff00c1,#ff00b9,#ff00b2,#ff00ab,#ff00a5,#ff009f,#ff0099,#ff0094,#ff008f,#ff008a,#ff0086,#ff0082)"></div>
<div class="s" style="top:375px;height:3px;background:linear-gradient(90deg,#0037ff,#0034ff,#0031ff,#002eff,#002bff,#0028ff,#0025ff,#0022ff,#001fff,#001cff,#0019ff,#0015ff,#0012ff,#000fff,#000cff,#0309ff,#0e05ff,#1a02ff,#2600ff,#3100ff,#3d00ff,#4900ff,#5500ff,#6100ff,#6d00ff,#7a00ff,#8600ff,#9200ff,#9f00ff,#ac00ff,#b900ff,#c500ff,#d300ff,#e000ff,#ed00ff,#fa00ff,#ff00f7,#ff00eb,#ff00df,#ff00d5,#ff00cc,#ff00c3,#ff00bb,#ff00b4,#ff00ad,#ff00a7,#ff00a1,#ff009b,#ff0096,#ff0091,#ff008c,#ff0087,#ff0083)"></div>
<div class="s" style="top:378px;height:3px;background:linear-gradient(90deg,#0036ff,#0033ff,#0030ff,#002dff,#002aff,#0027ff,#0024ff,#0021ff,#001eff,#001bff,#0018ff,#0015ff,#0011ff,#000eff,#000bff,#0308ff,#0e05ff,#1901ff,#2500ff,#3000ff,#3c00ff,#4800ff,#5400ff,#6000ff,#6c00ff,#7800ff,#8400ff,#9100ff,#9d00ff,#aa00ff,#b600ff,#c300ff,#d000ff,#dd00ff,#ea00ff,#f700ff,#ff00f9,#ff00ed,#ff00e2,#ff00d8,#ff00ce,#ff00c6,#ff00be,#ff00b6,#ff00af,#ff00a9,#ff00a2,#ff009d,#ff0097,#ff0092,#ff008d,#ff0089,#ff0085)"></div>
<div class="s" style="top:381px;height:3px;background:linear-gradient(90deg,#0034ff,#0032ff,#002fff,#002cff,#0029ff,#0026ff,#0023ff,#0020ff,#001dff,#001aff,#0017ff,#0014ff,#0011ff,#000dff,#000aff,#0207ff,#0d04ff,#1901ff,#2400ff,#3000ff,#3b00ff,#4700ff,#5300ff,#5f00ff,#6a00ff,#7700ff,#8300ff,#8f00ff,#9b00ff,#a800ff,#b400ff,#c100ff,#ce00ff,#db00ff,#e800ff,#f500ff,#ff00fc,#ff00f0,#ff00e5,#ff00da,#ff00d1,#ff00c8,#ff00c0,#ff00b8,#ff00b1,#ff00aa,#ff00a4,#ff009e,#ff0099,#ff0094,#ff008f,#ff008a,#ff0086)"></div>
<div class="s" style="top:384px;height:3px;background:linear-gradient(90deg,#0033ff,#0031ff,#002eff,#002bff,#0028ff,#0025ff,#0022ff,#001fff,#001cff,#0019ff,#0016ff,#0013ff,#0010ff,#000dff,#0009ff,#0206ff,#0d03ff,#1800ff,#2300ff,#2f00ff,#3a00ff,#4600ff,#5200ff,#5d00ff,#6900ff,#7500ff,#8100ff,#8d00ff,#9900ff,#a600ff,#b200ff,#bf00ff,#cb00ff,#d800ff,#e500ff,#f200ff,#ff00ff,#ff00f3,#ff00e7,#ff00dd,#ff00d3,#ff00ca,#ff00c2,#ff00ba,#ff00b3,#ff00ac,#ff00a6,#ff00a0,#ff009b,#ff0096,#ff0091,#ff008c,#ff0088)"></div>
<div class="s" style="top:387px;height:3px;background:linear-gradient(90deg,#0032ff,#0030ff,#002dff,#002aff,#0027ff,#0024ff,#0021ff,#001eff,#001bff,#0018ff,#0015ff,#0012ff,#000fff,#000cff,#0009ff,#0106ff,#0c02ff,#1700ff,#2300ff,#2e00ff,#3900ff,#4500ff,#5000ff,#5c00ff,#6800ff,#7400ff,#8000ff,#8c00ff,#9800ff,#a400ff,#b000ff,#bd00ff,#c900ff,#d600ff,#e200ff,#ef00ff,#fc00ff,#ff00f5,#ff00ea,#ff00df,#ff00d5,#ff00cc,#ff00c4,#ff00bc,#ff00b5,#ff00ae,#ff00a8,#ff00a2,#ff009c,#ff0097,#ff0092,#ff008e,#ff0089)"></div>
<div class="s" style="top:390px;height:3px;background:linear-gradient(90deg,#0031ff,#002fff,#002cff,#0029ff,#0026ff,#0023ff,#0020ff,#001dff,#001aff,#0017ff,#0014ff,#0011ff,#000eff,#000bff,#0008ff,#0105ff,#0c02ff,#1700ff,#2200ff,#2d00ff,#3800ff,#4400ff,#4f00ff,#5b00ff,#6600ff,#7200ff,#7e00ff,#8a00ff,#9600ff,#a200ff,#ae00ff,#ba00ff,#c700ff,#d300ff,#e000ff,#ed00ff,#f900ff,#ff00f8,#ff00ec,#ff00e2,#ff00d8,#ff00cf,#ff00c6,#ff00be,#ff00b7,#ff00b0,#ff00aa,#ff00a4,#ff009e,#ff0099,#ff0094,#ff008f,#ff008b)"></div>
<div class="s" style="top:393px;height:3px;background:linear-gradient(90deg,#0030ff,#002eff,#002bff,#0028ff,#0025ff,#0022ff,#001fff,#001cff,#0019ff,#0016ff,#0013ff,#0010ff,#000dff,#000aff,#0007ff,#0104ff,#0b01ff,#1600ff,#2100ff,#2c00ff,#3800ff,#4300ff,#4e00ff,#5a00ff,#6500ff,#7100ff,#7c00ff,#8800ff,#9400ff,#a000ff,#ac00ff,#b800ff,#c500ff,#d100ff,#dd00ff,#ea00ff,#f700ff,#ff00fb,#ff00ef,#ff00e4,#ff00da,#ff00d1,#ff00c8,#ff00c0,#ff00b9,#ff00b2,#ff00ac,#ff00a6,#ff00a0,#ff009a,#ff0095,#ff0091,#ff008c)"></div>
<div class="s" style="top:396px;height:3px;background:linear-gradient(90deg,#002fff,#002dff,#002aff,#0027ff,#0024ff,#0021ff,#001eff,#001bff,#0019ff,#0016ff,#0013ff,#0010ff,#000dff,#000aff,#0007ff,#0003ff,#0b00ff,#1600ff,#2100ff,#2c00ff,#3700ff,#4200ff,#4d00ff,#5800ff,#6400ff,#6f00ff,#7b00ff,#8700ff,#9200ff,#9e00ff,#aa00ff,#b600ff,#c200ff,#cf00ff,#db00ff,#e700ff,#f400ff,#ff00fd,#ff00f1,#ff00e6,#ff00dc,#ff00d3,#ff00ca,#ff00c2,#ff00bb,#ff00b4,#ff00ad,#ff00a7,#ff00a2,#ff009c,#ff0097,#ff0092,#ff008e)"></div>
<div class="s" style="top:399px;height:3px;background:linear-gradient(90deg,#002eff,#002cff,#0029ff,#0026ff,#0023ff,#0020ff,#001dff,#001bff,#0018ff,#0015ff,#0012ff,#000fff,#000cff,#0009ff,#0006ff,#0003ff,#0a00ff,#1500ff,#2000ff,#2b00ff,#3600ff,#4100ff,#4c00ff,#5700ff,#6300ff,#6e00ff,#7a00ff,#8500ff,#9100ff,#9d00ff,#a800ff,#b400ff,#c000ff,#cc00ff,#d900ff,#e500ff,#f100ff,#fe00ff,#ff00f4,#ff00e9,#ff00df,#ff00d5,#ff00cd,#ff00c4,#ff00bd,#ff00b6,#ff00af,#ff00a9,#ff00a3,#ff009e,#ff0099,#ff0094,#ff008f)"></div>
<div class="s" style="top:402px;height:3px;background:linear-gradient(90deg,#002dff,#002bff,#0028ff,#0025ff,#0022ff,#001fff,#001dff,#001aff,#0017ff,#0014ff,#0011ff,#000eff,#000bff,#0008ff,#0005ff,#0002ff,#0a00ff,#1500ff,#1f00ff,#2a00ff,#3500ff,#4000ff,#4b00ff,#5600ff,#6100ff,#6d00ff,#7800ff,#8400ff,#8f00ff,#9b00ff,#a700ff,#b200ff,#be00ff,#ca00ff,#d600ff,#e300ff,#ef00ff,#fb00ff,#ff00f7,#ff00eb,#ff00e1,#ff00d8,#ff00cf,#ff00c6,#ff00bf,#ff00b8,#ff00b1,#ff00ab,#ff00a5,#ff009f,#ff009a,#ff0095,#ff0091)"></div>
<div class="s" style="top:405px;height:3px;background:linear-gradient(90deg,#002cff,#002aff,#0027ff,#0024ff,#0021ff,#001fff,#001cff,#0019ff,#0016ff,#0013ff,#0010ff,#000dff,#000aff,#0007ff,#0005ff,#0002ff,#0a00ff,#1400ff,#1f00ff,#2900ff,#3400ff,#3f00ff,#4a00ff,#5500ff,#6000ff,#6b00ff,#7700ff,#8200ff,#8e00ff,#9900ff,#a500ff,#b000ff,#bc00ff,#c800ff,#d400ff,#e000ff,#ec00ff,#f900ff,#ff00f9,#ff00ee,#ff00e3,#ff00da,#ff00d1,#ff00c9,#ff00c1,#ff00ba,#ff00b3,#ff00ad,#ff00a7,#ff00a1,#ff009c,#ff0097,#ff0092)"></div>
<div class="s" style="top:408px;height:3px;background:linear-gradient(90deg,#002bff,#0029ff,#0026ff,#0023ff,#0021ff,#001eff,#001bff,#0018ff,#0015ff,#0012ff,#0010ff,#000dff,#000aff,#0007ff,#0004ff,#0001ff,#0900ff,#1400ff,#1e00ff,#2900ff,#3300ff,#3e00ff,#4900ff,#5400ff,#5f00ff,#6a00ff,#7500ff,#8100ff,#8c00ff,#9700ff,#a300ff,#ae00ff,#ba00ff,#c600ff,#d200ff,#de00ff,#ea00ff,#f600ff,#ff00fc,#ff00f0,#ff00e6,#ff00dc,#ff00d3,#ff00cb,#ff00c3,#ff00bc,#ff00b5,#ff00ae,#ff00a8,#ff00a3,#ff009e,#ff0099,#ff0094)"></div>
<div class="s" style="top:411px;height:3px;background:linear-gradient(90deg,#002bff,#0028ff,#0025ff,#0022ff,#0020ff,#001dff,#001aff,#0017ff,#0014ff,#0012ff,#000fff,#000cff,#0009ff,#0006ff,#0003ff,#0000ff,#0900ff,#1300ff,#1e00ff,#2800ff,#3300ff,#3d00ff,#4800ff,#5300ff,#5e00ff,#6900ff,#7400ff,#7f00ff,#8a00ff,#9600ff,#a100ff,#ad00ff,#b800ff,#c400ff,#d000ff,#db00ff,#e700ff,#f300ff,#ff00fe,#ff00f3,#ff00e8,#ff00de,#ff00d5,#ff00cd,#ff00c5,#ff00be,#ff00b7,#ff00b0,#ff00aa,#ff00a5,#ff009f,#ff009a,#ff0095)"></div>
<div class="s" style="top:414px;height:3px;background:linear-gradient(90deg,#002aff,#0027ff,#0024ff,#0022ff,#001fff,#001cff,#0019ff,#0017ff,#0014ff,#0011ff,#000eff,#000bff,#0008ff,#0005ff,#0003ff,#0000ff,#0800ff,#1300ff,#1d00ff,#2700ff,#3200ff,#3c00ff,#4700ff,#5200ff,#5d00ff,#6800ff,#7300ff,#7e00ff,#8900ff,#9400ff,#9f00ff,#ab00ff,#b600ff,#c200ff,#cd00ff,#d900ff,#e500ff,#f100ff,#fd00ff,#ff00f5,#ff00eb,#ff00e1,#ff00d7,#ff00cf,#ff00c7,#ff00bf,#ff00b9,#ff00b2,#ff00ac,#ff00a6,#ff00a1,#ff009c,#ff0097)"></div>
<div class="s" style="top:417px;height:3px;background:linear-gradient(90deg,#0029ff,#0026ff,#0023ff,#0021ff,#001eff,#001bff,#0019ff,#0016ff,#0013ff,#0010ff,#000dff,#000bff,#0008ff,#0005ff,#0002ff,#0000ff,#0800ff,#1200ff,#1c00ff,#2700ff,#3100ff,#3c00ff,#4600ff,#5100ff,#5c00ff,#6600ff,#7100ff,#7c00ff,#8700ff,#9200ff,#9e00ff,#a900ff,#b400ff,#c000ff,#cb00ff,#d700ff,#e300ff,#ee00ff,#fa00ff,#ff00f8,#ff00ed,#ff00e3,#ff00da,#ff00d1,#ff00c9,#ff00c1,#ff00ba,#ff00b4,#ff00ae,#ff00a8,#ff00a2,#ff009d,#ff0098)"></div>
<div class="s" style="top:420px;height:3px;background:linear-gradient(90deg,#0028ff,#0025ff,#0023ff,#0020ff,#001dff,#001aff,#0018ff,#0015ff,#0012ff,#000fff,#000dff,#000aff,#0007ff,#0004ff,#0001ff,#0000ff,#0700ff,#1200ff,#1c00ff,#2600ff,#3000ff,#3b00ff,#4500ff,#5000ff,#5b00ff,#6500ff,#7000ff,#7b00ff,#8600ff,#9100ff,#9c00ff,#a700ff,#b200ff,#be00ff,#c900ff,#d500ff,#e000ff,#ec00ff,#f800ff,#ff00fa,#ff00ef,#ff00e5,#ff00dc,#ff00d3,#ff00cb,#ff00c3,#ff00bc,#ff00b6,#ff00af,#ff00aa,#ff00a4,#ff009f,#ff009a)"></div>
<div class="s" style="top:423px;height:3px;background:linear-gradient(90deg,#0027ff,#0024ff,#0022ff,#001fff,#001cff,#001aff,#0017ff,#0014ff,#0011ff,#000fff,#000cff,#0009ff,#0006ff,#0004ff,#0001ff,#0000ff,#0700ff,#1100ff,#1b00ff,#2500ff,#3000ff,#3a00ff,#4400ff,#4f00ff,#5900ff,#6400ff,#6f00ff,#7a00ff,#8400ff,#8f00ff,#9a00ff,#a500ff,#b100ff,#bc00ff,#c700ff,#d300ff,#de00ff,#ea00ff,#f500ff,#ff00fd,#ff00f2,#ff00e7,#ff00de,#ff00d5,#ff00cd,#ff00c5,#ff00be,#ff00b7,#ff00b1,#ff00ab,#ff00a6,#ff00a0,#ff009b)"></div>
<div class="s" style="top:426px;height:3px;background:linear-gradient(90deg,#0026ff,#0023ff,#0021ff,#001eff,#001cff,#0019ff,#0016ff,#0014ff,#0011ff,#000eff,#000bff,#0009ff,#0006ff,#0003ff,#0000ff,#0000ff,#0700ff,#1100ff,#1b00ff,#2500ff,#2f00ff,#3900ff,#4300ff,#4e00ff,#5800ff,#6300ff,#6e00ff,#7800ff,#8300ff,#8e00ff,#9900ff,#a400ff,#af00ff,#ba00ff,#c500ff,#d000ff,#dc00ff,#e700ff,#f300ff,#ff00ff,#ff00f4,#ff00ea,#ff00e0,#ff00d7,#ff00cf,#ff00c7,#ff00c0,#ff00b9,#ff00b3,#ff00ad,#ff00a7,#ff00a2,#ff009d)"></div>
<div class="s" style="top:429px;height:3px;background:linear-gradient(90deg,#0025ff,#0023ff,#0020ff,#001dff,#001bff,#0018ff,#0015ff,#0013ff,#0010ff,#000dff,#000bff,#0008ff,#0005ff,#0002ff,#0000ff,#0000ff,#0600ff,#1000ff,#1a00ff,#2400ff,#2e00ff,#3800ff,#4300ff,#4d00ff,#5700ff,#6200ff,#6c00ff,#7700ff,#8200ff,#8c00ff,#9700ff,#a200ff,#ad00ff,#b800ff,#c300ff,#ce00ff,#da00ff,#e500ff,#f100ff,#fc00ff,#ff00f7,#ff00ec,#ff00e2,#ff00d9,#ff00d1,#ff00c9,#ff00c2,#ff00bb,#ff00b5,#ff00af,#ff00a9,#ff00a4,#ff009f)"></div>
<div class="s" style="top:432px;height:3px;background:linear-gradient(90deg,#0024ff,#0022ff,#001fff,#001dff,#001aff,#0017ff,#0015ff,#0012ff,#000fff,#000dff,#000aff,#0007ff,#0004ff,#0002ff,#0000ff,#0000ff,#0600ff,#1000ff,#1a00ff,#2300ff,#2d00ff,#3800ff,#4200ff,#4c00ff,#5600ff,#6100ff,#6b00ff,#7600ff,#8000ff,#8b00ff,#9600ff,#a000ff,#ab00ff,#b600ff,#c100ff,#cc00ff,#d800ff,#e300ff,#ee00ff,#fa00ff,#ff00f9,#ff00ee,#ff00e5,#ff00dc,#ff00d3,#ff00cb,#ff00c4,#ff00bd,#ff00b6,#ff00b0,#ff00ab,#ff00a5,#ff00a0)"></div>
<div class="s" style="top:435px;height:3px;background:linear-gradient(90deg,#0024ff,#0021ff,#001eff,#001cff,#0019ff,#0017ff,#0014ff,#0011ff,#000fff,#000cff,#0009ff,#0007ff,#0004ff,#0001ff,#0000ff,#0000ff,#0500ff,#0f00ff,#1900ff,#2300ff,#2d00ff,#3700ff,#4100ff,#4b00ff,#5500ff,#6000ff,#6a00ff,#7400ff,#7f00ff,#8900ff,#9400ff,#9f00ff,#a900ff,#b400ff,#bf00ff,#ca00ff,#d500ff,#e100ff,#ec00ff,#f700ff,#ff00fb,#ff00f1,#ff00e7,#ff00de,#ff00d5,#ff00cd,#ff00c6,#ff00bf,#ff00b8,#ff00b2,#ff00ac,#ff00a7,#ff00a2)"></div>
<div class="s" style="top:438px;height:3px;background:linear-gradient(90deg,#0023ff,#0020ff,#001eff,#001bff,#0019ff,#0016ff,#0013ff,#0011ff,#000eff,#000bff,#0009ff,#0006ff,#0003ff,#0000ff,#0000ff,#0000ff,#0500ff,#0f00ff,#1800ff,#2200ff,#2c00ff,#3600ff,#4000ff,#4a00ff,#5400ff,#5e00ff,#6900ff,#7300ff,#7d00ff,#8800ff,#9200ff,#9d00ff,#a800ff,#b300ff,#bd00ff,#c800ff,#d300ff,#de00ff,#ea00ff,#f500ff,#ff00fe,#ff00f3,#ff00e9,#ff00e0,#ff00d7,#ff00cf,#ff00c8,#ff00c1,#ff00ba,#ff00b4,#ff00ae,#ff00a8,#ff00a3)"></div>
<div class="s" style="top:441px;height:3px;background:linear-gradient(90deg,#0022ff,#001fff,#001dff,#001aff,#0018ff,#0015ff,#0013ff,#0010ff,#000dff,#000bff,#0008ff,#0005ff,#0003ff,#0000ff,#0000ff,#0000ff,#0500ff,#0e00ff,#1800ff,#2200ff,#2b00ff,#3500ff,#3f00ff,#4900ff,#5300ff,#5d00ff,#6800ff,#7200ff,#7c00ff,#8600ff,#9100ff,#9b00ff,#a600ff,#b100ff,#bc00ff,#c600ff,#d100ff,#dc00ff,#e700ff,#f200ff,#fe00ff,#ff00f5,#ff00eb,#ff00e2,#ff00d9,#ff00d1,#ff00ca,#ff00c2,#ff00bc,#ff00b5,#ff00b0,#ff00aa,#ff00a5)"></div>
<div class="s" style="top:444px;height:3px;background:linear-gradient(90deg,#0021ff,#001fff,#001cff,#001aff,#0017ff,#0014ff,#0012ff,#000fff,#000dff,#000aff,#0007ff,#0005ff,#0002ff,#0000ff,#0000ff,#0000ff,#0400ff,#0e00ff,#1700ff,#2100ff,#2b00ff,#3500ff,#3e00ff,#4800ff,#5200ff,#5c00ff,#6600ff,#7100ff,#7b00ff,#8500ff,#8f00ff,#9a00ff,#a400ff,#af00ff,#ba00ff,#c400ff,#cf00ff,#da00ff,#e500ff,#f000ff,#fb00ff,#ff00f8,#ff00ee,#ff00e4,#ff00db,#ff00d3,#ff00cb,#ff00c4,#ff00be,#ff00b7,#ff00b1,#ff00ac,#ff00a6)"></div>
<div class="s" style="top:447px;height:3px;background:linear-gradient(90deg,#0020ff,#001eff,#001bff,#0019ff,#0016ff,#0014ff,#0011ff,#000fff,#000cff,#0009ff,#0007ff,#0004ff,#0001ff,#0000ff,#0000ff,#0000ff,#0400ff,#0d00ff,#1700ff,#2000ff,#2a00ff,#3400ff,#3e00ff,#4700ff,#5100ff,#5b00ff,#6500ff,#6f00ff,#7a00ff,#8400ff,#8e00ff,#9800ff,#a300ff,#ad00ff,#b800ff,#c300ff,#cd00ff,#d800ff,#e300ff,#ee00ff,#f900ff,#ff00fa,#ff00f0,#ff00e6,#ff00dd,#ff00d5,#ff00cd,#ff00c6,#ff00bf,#ff00b9,#ff00b3,#ff00ad,#ff00a8)"></div>
<div class="s" style="top:450px;height:3px;background:linear-gradient(90deg,#0020ff,#001dff,#001bff,#0018ff,#0016ff,#0013ff,#0011ff,#000eff,#000bff,#0009ff,#0006ff,#0004ff,#0001ff,#0000ff,#0000ff,#0000ff,#0400ff,#0d00ff,#1600ff,#2000ff,#2900ff,#3300ff,#3d00ff,#4700ff,#5000ff,#5a00ff,#6400ff,#6e00ff,#7800ff,#8200ff,#8d00ff,#9700ff,#a100ff,#ac00ff,#b600ff,#c100ff,#cb00ff,#d600ff,#e100ff,#ec00ff,#f700ff,#ff00fc,#ff00f2,#ff00e8,#ff00df,#ff00d7,#ff00cf,#ff00c8,#ff00c1,#ff00bb,#ff00b5,#ff00af,#ff00a9)"></div>
<div class="s" style="top:453px;height:3px;background:linear-gradient(90deg,#001fff,#001cff,#001aff,#0017ff,#0015ff,#0012ff,#0010ff,#000dff,#000bff,#0008ff,#0006ff,#0003ff,#0000ff,#0000ff,#0000ff,#0000ff,#0300ff,#0d00ff,#1600ff,#1f00ff,#2900ff,#3200ff,#3c00ff,#4600ff,#4f00ff,#5900ff,#6300ff,#6d00ff,#7700ff,#8100ff,#8b00ff,#9500ff,#a000ff,#aa00ff,#b400ff,#bf00ff,#c900ff,#d400ff,#df00ff,#e900ff,#f400ff,#ff00ff,#ff00f4,#ff00eb,#ff00e2,#ff00d9,#ff00d1,#ff00ca,#ff00c3,#ff00bc,#ff00b6,#ff00b0,#ff00ab)"></div>
<div class="s" style="top:456px;height:3px;background:linear-gradient(90deg,#001eff,#001cff,#0019ff,#0017ff,#0014ff,#0012ff,#000fff,#000dff,#000aff,#0008ff,#0005ff,#0002ff,#0000ff,#0000ff,#0000ff,#0000ff,#0300ff,#0c00ff,#1500ff,#1f00ff,#2800ff,#3200ff,#3b00ff,#4500ff,#4e00ff,#5800ff,#6200ff,#6c00ff,#7600ff,#8000ff,#8a00ff,#9400ff,#9e00ff,#a800ff,#b300ff,#bd00ff,#c700ff,#d200ff,#dd00ff,#e700ff,#f200ff,#fd00ff,#ff00f7,#ff00ed,#ff00e4,#ff00db,#ff00d3,#ff00cc,#ff00c5,#ff00be,#ff00b8,#ff00b2,#ff00ad)"></div>
<div class="s" style="top:459px;height:3px;background:linear-gradient(90deg,#001dff,#001bff,#0018ff,#0016ff,#0014ff,#0011ff,#000fff,#000cff,#000aff,#0007ff,#0004ff,#0002ff,#0000ff,#0000ff,#0000ff,#0000ff,#0300ff,#0c00ff,#1500ff,#1e00ff,#2800ff,#3100ff,#3a00ff,#4400ff,#4e00ff,#5700ff,#6100ff,#6b00ff,#7500ff,#7e00ff,#8800ff,#9200ff,#9d00ff,#a700ff,#b100ff,#bb00ff,#c600ff,#d000ff,#db00ff,#e500ff,#f000ff,#fb00ff,#ff00f9,#ff00ef,#ff00e6,#ff00dd,#ff00d5,#ff00ce,#ff00c6,#ff00c0,#ff00ba,#ff00b4,#ff00ae)"></div>
<div class="s" style="top:462px;height:3px;background:linear-gradient(90deg,#001dff,#001aff,#0018ff,#0015ff,#0013ff,#0010ff,#000eff,#000bff,#0009ff,#0006ff,#0004ff,#0001ff,#0000ff,#0000ff,#0000ff,#0000ff,#0200ff,#0b00ff,#1500ff,#1e00ff,#2700ff,#3000ff,#3a00ff,#4300ff,#4d00ff,#5600ff,#6000ff,#6a00ff,#7300ff,#7d00ff,#8700ff,#9100ff,#9b00ff,#a500ff,#af00ff,#b900ff,#c400ff,#ce00ff,#d900ff,#e300ff,#ee00ff,#f800ff,#ff00fb,#ff00f1,#ff00e8,#ff00df,#ff00d7,#ff00cf,#ff00c8,#ff00c2,#ff00bb,#ff00b5,#ff00b0)"></div>
<div class="s" style="top:465px;height:3px;background:linear-gradient(90deg,#001cff,#001aff,#0017ff,#0015ff,#0012ff,#0010ff,#000dff,#000bff,#0008ff,#0006ff,#0003ff,#0001ff,#0000ff,#0000ff,#0000ff,#0000ff,#0200ff,#0b00ff,#1400ff,#1d00ff,#2600ff,#3000ff,#3900ff,#4200ff,#4c00ff,#5500ff,#5f00ff,#6900ff,#7200ff,#7c00ff,#8600ff,#9000ff,#9a00ff,#a400ff,#ae00ff,#b800ff,#c200ff,#cc00ff,#d700ff,#e100ff,#eb00ff,#f600ff,#ff00fd,#ff00f3,#ff00ea,#ff00e1,#ff00d9,#ff00d1,#ff00ca,#ff00c3,#ff00bd,#ff00b7,#ff00b1)"></div>
<div class="s" style="top:468px;height:3px;background:linear-gradient(90deg,#001bff,#0019ff,#0016ff,#0014ff,#0012ff,#000fff,#000dff,#000aff,#0008ff,#0005ff,#0003ff,#0000ff,#0000ff,#0000ff,#0000ff,#0000ff,#0200ff,#0b00ff,#1400ff,#1d00ff,#2600ff,#2f00ff,#3800ff,#4200ff,#4b00ff,#5400ff,#5e00ff,#6700ff,#7100ff,#7b00ff,#8400ff,#8e00ff,#9800ff,#a200ff,#ac00ff,#b600ff,#c000ff,#ca00ff,#d500ff,#df00ff,#e900ff,#f400ff,#fe00ff,#ff00f5,#ff00ec,#ff00e3,#ff00db,#ff00d3,#ff00cc,#ff00c5,#ff00bf,#ff00b9,#ff00b3)"></div>
<div class="s" style="top:471px;height:3px;background:linear-gradient(90deg,#001bff,#0018ff,#0016ff,#0013ff,#0011ff,#000fff,#000cff,#000aff,#0007ff,#0005ff,#0002ff,#0000ff,#0000ff,#0000ff,#0000ff,#0000ff,#0100ff,#0a00ff,#1300ff,#1c00ff,#2500ff,#2e00ff,#3800ff,#4100ff,#4a00ff,#5300ff,#5d00ff,#6600ff,#7000ff,#7900ff,#8300ff,#8d00ff,#9700ff,#a100ff,#aa00ff,#b400ff,#be00ff,#c900ff,#d300ff,#dd00ff,#e700ff,#f200ff,#fc00ff,#ff00f8,#ff00ee,#ff00e5,#ff00dd,#ff00d5,#ff00ce,#ff00c7,#ff00c0,#ff00ba,#ff00b4)"></div>
<div class="s" style="top:474px;height:3px;background:linear-gradient(90deg,#001aff,#0017ff,#0015ff,#0013ff,#0010ff,#000eff,#000bff,#0009ff,#0007ff,#0004ff,#0002ff,#0000ff,#0000ff,#0000ff,#0000ff,#0000ff,#0100ff,#0a00ff,#1300ff,#1c00ff,#2500ff,#2e00ff,#3700ff,#4000ff,#4900ff,#5300ff,#5c00ff,#6500ff,#6f00ff,#7800ff,#8200ff,#8c00ff,#9500ff,#9f00ff,#a900ff,#b300ff,#bd00ff,#c700ff,#d100ff,#db00ff,#e500ff,#ef00ff,#fa00ff,#ff00fa,#ff00f0,#ff00e7,#ff00df,#ff00d7,#ff00d0,#ff00c9,#ff00c2,#ff00bc,#ff00b6)"></div>
<div class="s" style="top:477px;height:3px;background:linear-gradient(90deg,#0019ff,#0017ff,#0014ff,#0012ff,#0010ff,#000dff,#000bff,#0008ff,#0006ff,#0004ff,#0001ff,#0000ff,#0000ff,#0000ff,#0000ff,#0000ff,#0100ff,#0900ff,#1200ff,#1b00ff,#2400ff,#2d00ff,#3600ff,#3f00ff,#4800ff,#5200ff,#5b00ff,#6400ff,#6e00ff,#7700ff,#8100ff,#8a00ff,#9400ff,#9e00ff,#a700ff,#b100ff,#bb00ff,#c500ff,#cf00ff,#d900ff,#e300ff,#ed00ff,#f800ff,#ff00fc,#ff00f2,#ff00e9,#ff00e1,#ff00d9,#ff00d1,#ff00ca,#ff00c4,#ff00be,#ff00b8)"></div>
<div class="s" style="top:480px;height:3px;background:linear-gradient(90deg,#0018ff,#0016ff,#0014ff,#0011ff,#000fff,#000dff,#000aff,#0008ff,#0005ff,#0003ff,#0001ff,#0000ff,#0000ff,#0000ff,#0000ff,#0000ff,#0000ff,#0900ff,#1200ff,#1b00ff,#2400ff,#2c00ff,#3500ff,#3f00ff,#4800ff,#5100ff,#5a00ff,#6300ff,#6d00ff,#7600ff,#7f00ff,#8900ff,#9200ff,#9c00ff,#a600ff,#af00ff,#b900ff,#c300ff,#cd00ff,#d700ff,#e100ff,#eb00ff,#f500ff,#ff00fe,#ff00f4,#ff00eb,#ff00e3,#ff00db,#ff00d3,#ff00cc,#ff00c5,#ff00bf,#ff00b9)"></div>
<div class="s" style="top:483px;height:3px;background:linear-gradient(90deg,#0018ff,#0016ff,#0013ff,#0011ff,#000eff,#000cff,#000aff,#0007ff,#0005ff,#0002ff,#0000ff,#0000ff,#0000ff,#0000ff,#0000ff,#0000ff,#0000ff,#0900ff,#1100ff,#1a00ff,#2300ff,#2c00ff,#3500ff,#3e00ff,#4700ff,#5000ff,#5900ff,#6200ff,#6b00ff,#7500ff,#7e00ff,#8800ff,#9100ff,#9b00ff,#a400ff,#ae00ff,#b800ff,#c100ff,#cb00ff,#d500ff,#df00ff,#e900ff,#f300ff,#fd00ff,#ff00f7,#ff00ed,#ff00e5,#ff00dd,#ff00d5,#ff00ce,#ff00c7,#ff00c1,#ff00bb)"></div>
<div class="s" style="top:486px;height:3px;background:linear-gradient(90deg,#0017ff,#0015ff,#0013ff,#0010ff,#000eff,#000cff,#0009ff,#0007ff,#0004ff,#0002ff,#0000ff,#0000ff,#0000ff,#0000ff,#0000ff,#0000ff,#0000ff,#0800ff,#1100ff,#1a00ff,#2200ff,#2b00ff,#3400ff,#3d00ff,#4600ff,#4f00ff,#5800ff,#6100ff,#6a00ff,#7400ff,#7d00ff,#8600ff,#9000ff,#9900ff,#a300ff,#ac00ff,#b600ff,#c000ff,#c900ff,#d300ff,#dd00ff,#e700ff,#f100ff,#fb00ff,#ff00f9,#ff00ef,#ff00e7,#ff00de,#ff00d7,#ff00d0,#ff00c9,#ff00c2,#ff00bc)"></div>
<div class="s" style="top:489px;height:3px;background:linear-gradient(90deg,#0017ff,#0014ff,#0012ff,#0010ff,#000dff,#000bff,#0009ff,#0006ff,#0004ff,#0001ff,#0000ff,#0000ff,#0000ff,#0000ff,#0000ff,#0000ff,#0000ff,#0800ff,#1100ff,#1900ff,#2200ff,#2b00ff,#3300ff,#3c00ff,#4500ff,#4e00ff,#5700ff,#6000ff,#6900ff,#7300ff,#7c00ff,#8500ff,#8e00ff,#9800ff,#a100ff,#ab00ff,#b400ff,#be00ff,#c800ff,#d100ff,#db00ff,#e500ff,#ef00ff,#f900ff,#ff00fb,#ff00f1,#ff00e9,#ff00e0,#ff00d9,#ff00d1,#ff00cb,#ff00c4,#ff00be)"></div>
<div class="s" style="top:492px;height:3px;background:linear-gradient(90deg,#0016ff,#0014ff,#0011ff,#000fff,#000dff,#000aff,#0008ff,#0006ff,#0003ff,#0001ff,#0000ff,#0000ff,#0000ff,#0000ff,#0000ff,#0000ff,#0000ff,#0800ff,#1000ff,#1900ff,#2100ff,#2a00ff,#3300ff,#3c00ff,#4400ff,#4d00ff,#5600ff,#5f00ff,#6800ff,#7100ff,#7b00ff,#8400ff,#8d00ff,#9600ff,#a000ff,#a900ff,#b300ff,#bc00ff,#c600ff,#d000ff,#d900ff,#e300ff,#ed00ff,#f700ff,#ff00fd,#ff00f3,#ff00eb,#ff00e2,#ff00da,#ff00d3,#ff00cc,#ff00c6,#ff00c0)"></div>
<div class="s" style="top:495px;height:3px;background:linear-gradient(90deg,#0015ff,#0013ff,#0011ff,#000eff,#000cff,#000aff,#0007ff,#0005ff,#0003ff,#0000ff,#0000ff,#0000ff,#0000ff,#0000ff,#0000ff,#0000ff,#0000ff,#0700ff,#1000ff,#1800ff,#2100ff,#2900ff,#3200ff,#3b00ff,#4400ff,#4d00ff,#5500ff,#5e00ff,#6700ff,#7000ff,#7900ff,#8300ff,#8c00ff,#9500ff,#9e00ff,#a800ff,#b100ff,#bb00ff,#c400ff,#ce00ff,#d800ff,#e100ff,#eb00ff,#f500ff,#ff00ff,#ff00f6,#ff00ed,#ff00e4,#ff00dc,#ff00d5,#ff00ce,#ff00c7,#ff00c1)"></div>
<div class="s" style="top:498px;height:3px;background:linear-gradient(90deg,#0015ff,#0012ff,#0010ff,#000eff,#000cff,#0009ff,#0007ff,#0005ff,#0002ff,#0000ff,#0000ff,#0000ff,#0000ff,#0000ff,#0000ff,#0000ff,#0000ff,#0700ff,#0f00ff,#1800ff,#2000ff,#2900ff,#3200ff,#3a00ff,#4300ff,#4c00ff,#5500ff,#5d00ff,#6600ff,#6f00ff,#7800ff,#8100ff,#8b00ff,#9400ff,#9d00ff,#a600ff,#b000ff,#b900ff,#c300ff,#cc00ff,#d600ff,#df00ff,#e900ff,#f300ff,#fd00ff,#ff00f8,#ff00ef,#ff00e6,#ff00de,#ff00d7,#ff00d0,#ff00c9,#ff00c3)"></div>
<div class="s" style="top:501px;height:3px;background:linear-gradient(90deg,#0014ff,#0012ff,#0010ff,#000dff,#000bff,#0009ff,#0006ff,#0004ff,#0002ff,#0000ff,#0000ff,#0000ff,#0000ff,#0000ff,#0000ff,#0000ff,#0000ff,#0700ff,#0f00ff,#1700ff,#2000ff,#2800ff,#3100ff,#3a00ff,#4200ff,#4b00ff,#5400ff,#5c00ff,#6500ff,#6e00ff,#7700ff,#8000ff,#8900ff,#9200ff,#9c00ff,#a500ff,#ae00ff,#b800ff,#c100ff,#ca00ff,#d400ff,#de00ff,#e700ff,#f100ff,#fb00ff,#ff00fa,#ff00f1,#ff00e8,#ff00e0,#ff00d9,#ff00d1,#ff00cb,#ff00c5)"></div>
<div class="s" style="top:504px;height:3px;background:linear-gradient(90deg,#0013ff,#0011ff,#000fff,#000dff,#000aff,#0008ff,#0006ff,#0004ff,#0001ff,#0000ff,#0000ff,#0000ff,#0000ff,#0000ff,#0000ff,#0000ff,#0000ff,#0600ff,#0f00ff,#1700ff,#1f00ff,#2800ff,#3000ff,#3900ff,#4100ff,#4a00ff,#5300ff,#5c00ff,#6400ff,#6d00ff,#7600ff,#7f00ff,#8800ff,#9100ff,#9a00ff,#a300ff,#ad00ff,#b600ff,#bf00ff,#c900ff,#d200ff,#dc00ff,#e500ff,#ef00ff,#f900ff,#ff00fc,#ff00f3,#ff00ea,#ff00e2,#ff00da,#ff00d3,#ff00cc,#ff00c6)"></div>
<div class="s" style="top:507px;height:3px;background:linear-gradient(90deg,#0013ff,#0011ff,#000eff,#000cff,#000aff,#0008ff,#0005ff,#0003ff,#0001ff,#0000ff,#0000ff,#0000ff,#0000ff,#0000ff,#0000ff,#0000ff,#0000ff,#0600ff,#0e00ff,#1700ff,#1f00ff,#2700ff,#3000ff,#3800ff,#4100ff,#4900ff,#5200ff,#5b00ff,#6300ff,#6c00ff,#7500ff,#7e00ff,#8700ff,#9000ff,#9900ff,#a200ff,#ab00ff,#b400ff,#be00ff,#c700ff,#d000ff,#da00ff,#e300ff,#ed00ff,#f600ff,#ff00fe,#ff00f5,#ff00ec,#ff00e4,#ff00dc,#ff00d5,#ff00ce,#ff00c8)"></div>
<div class="s" style="top:510px;height:3px;background:linear-gradient(90deg,#0012ff,#0010ff,#000eff,#000cff,#0009ff,#0007ff,#0005ff,#0003ff,#0000ff,#0000ff,#0000ff,#0000ff,#0000ff,#0000ff,#0000ff,#0000ff,#0000ff,#0600ff,#0e00ff,#1600ff,#1e00ff,#2700ff,#2f00ff,#3800ff,#4000ff,#4900ff,#5100ff,#5a00ff,#6200ff,#6b00ff,#7400ff,#7d00ff,#8600ff,#8f00ff,#9800ff,#a100ff,#aa00ff,#b300ff,#bc00ff,#c500ff,#cf00ff,#d800ff,#e100ff,#eb00ff,#f400ff,#fe00ff,#ff00f7,#ff00ee,#ff00e6,#ff00de,#ff00d7,#ff00d0,#ff00c9)"></div>
<div class="s" style="top:513px;height:3px;background:linear-gradient(90deg,#0012ff,#000fff,#000dff,#000bff,#0009ff,#0007ff,#0004ff,#0002ff,#0000ff,#0000ff,#0000ff,#0000ff,#0000ff,#0000ff,#0000ff,#0000ff,#0000ff,#0500ff,#0d00ff,#1600ff,#1e00ff,#2600ff,#2f00ff,#3700ff,#3f00ff,#4800ff,#5000ff,#5900ff,#6200ff,#6a00ff,#7300ff,#7c00ff,#8400ff,#8d00ff,#9600ff,#9f00ff,#a800ff,#b100ff,#bb00ff,#c400ff,#cd00ff,#d600ff,#e000ff,#e900ff,#f200ff,#fc00ff,#ff00f9,#ff00f0,#ff00e7,#ff00e0,#ff00d8,#ff00d2,#ff00cb)"></div>
<div class="s" style="top:516px;height:3px;background:linear-gradient(90deg,#0011ff,#000fff,#000dff,#000aff,#0008ff,#0006ff,#0004ff,#0002ff,#0000ff,#0000ff,#0000ff,#0000ff,#0000ff,#0000ff,#0000ff,#0000ff,#0000ff,#0500ff,#0d00ff,#1500ff,#1d00ff,#2600ff,#2e00ff,#3600ff,#3f00ff,#4700ff,#5000ff,#5800ff,#6100ff,#6900ff,#7200ff,#7b00ff,#8300ff,#8c00ff,#9500ff,#9e00ff,#a700ff,#b000ff,#b900ff,#c200ff,#cb00ff,#d400ff,#de00ff,#e700ff,#f100ff,#fa00ff,#ff00fb,#ff00f2,#ff00e9,#ff00e2,#ff00da,#ff00d3,#ff00cd)"></div>
<div class="s" style="top:519px;height:3px;background:linear-gradient(90deg,#0011ff,#000eff,#000cff,#000aff,#0008ff,#0006ff,#0003ff,#0001ff,#0000ff,#0000ff,#0000ff,#0000ff,#0000ff,#0000ff,#0000ff,#0000ff,#0000ff,#0500ff,#0d00ff,#1500ff,#1d00ff,#2500ff,#2d00ff,#3600ff,#3e00ff,#4600ff,#4f00ff,#5700ff,#6000ff,#6800ff,#7100ff,#7900ff,#8200ff,#8b00ff,#9400ff,#9d00ff,#a500ff,#ae00ff,#b700ff,#c000ff,#ca00ff,#d300ff,#dc00ff,#e500ff,#ef00ff,#f800ff,#ff00fd,#ff00f4,#ff00eb,#ff00e3,#ff00dc,#ff00d5,#ff00ce)"></div>
<div class="s" style="top:522px;height:3px;background:linear-gradient(90deg,#0010ff,#000eff,#000cff,#0009ff,#0007ff,#0005ff,#0003ff,#0001ff,#0000ff,#0000ff,#0000ff,#0000ff,#0000ff,#0000ff,#0000ff,#0000ff,#0000ff,#0400ff,#0c00ff,#1400ff,#1c00ff,#2500ff,#2d00ff,#3500ff,#3d00ff,#4600ff,#4e00ff,#5600ff,#5f00ff,#6700ff,#7000ff,#7800ff,#8100ff,#8a00ff,#9200ff,#9b00ff,#a400ff,#ad00ff,#b600ff,#bf00ff,#c800ff,#d100ff,#da00ff,#e300ff,#ed00ff,#f600ff,#ff00ff,#ff00f6,#ff00ed,#ff00e5,#ff00de,#ff00d7,#ff00d0)"></div>
<div class="s" style="top:525px;height:3px;background:linear-gradient(90deg,#000fff,#000dff,#000bff,#0009ff,#0007ff,#0005ff,#0002ff,#0000ff,#0000ff,#0000ff,#0000ff,#0000ff,#0000ff,#0000ff,#0000ff,#0000ff,#0000ff,#0400ff,#0c00ff,#1400ff,#1c00ff,#2400ff,#2c00ff,#3400ff,#3d00ff,#4500ff,#4d00ff,#5500ff,#5e00ff,#6600ff,#6f00ff,#7700ff,#8000ff,#8900ff,#9100ff,#9a00ff,#a300ff,#ac00ff,#b400ff,#bd00ff,#c600ff,#cf00ff,#d800ff,#e200ff,#eb00ff,#f400ff,#fd00ff,#ff00f8,#ff00ef,#ff00e7,#ff00df,#ff00d8,#ff00d2)"></div>
<div class="s" style="top:528px;height:3px;background:linear-gradient(90deg,#000fff,#000dff,#000bff,#0008ff,#0006ff,#0004ff,#0002ff,#0000ff,#0000ff,#0000ff,#0000ff,#0000ff,#0000ff,#0000ff,#0000ff,#0000ff,#0000ff,#0400ff,#0c00ff,#1400ff,#1c00ff,#2400ff,#2c00ff,#3400ff,#3c00ff,#4400ff,#4c00ff,#5500ff,#5d00ff,#6500ff,#6e00ff,#7600ff,#7f00ff,#8700ff,#9000ff,#9900ff,#a100ff,#aa00ff,#b300ff,#bc00ff,#c500ff,#ce00ff,#d700ff,#e000ff,#e900ff,#f200ff,#fb00ff,#ff00fa,#ff00f1,#ff00e9,#ff00e1,#ff00da,#ff00d3)"></div>
<div class="s" style="top:531px;height:3px;background:linear-gradient(90deg,#000eff,#000cff,#000aff,#0008ff,#0006ff,#0004ff,#0001ff,#0000ff,#0000ff,#0000ff,#0000ff,#0000ff,#0000ff,#0000ff,#0000ff,#0000ff,#0000ff,#0300ff,#0b00ff,#1300ff,#1b00ff,#2300ff,#2b00ff,#3300ff,#3b00ff,#4300ff,#4c00ff,#5400ff,#5c00ff,#6400ff,#6d00ff,#7500ff,#7e00ff,#8600ff,#8f00ff,#9700ff,#a000ff,#a900ff,#b100ff,#ba00ff,#c300ff,#cc00ff,#d500ff,#de00ff,#e700ff,#f000ff,#f900ff,#ff00fb,#ff00f3,#ff00eb,#ff00e3,#ff00dc,#ff00d5)"></div>
<div class="s" style="top:534px;height:3px;background:linear-gradient(90deg,#000eff,#000cff,#000aff,#0007ff,#0005ff,#0003ff,#0001ff,#0000ff,#0000ff,#0000ff,#0000ff,#0000ff,#0000ff,#0000ff,#0000ff,#0000ff,#0000ff,#0300ff,#0b00ff,#1300ff,#1b00ff,#2300ff,#2b00ff,#3300ff,#3b00ff,#4300ff,#4b00ff,#5300ff,#5b00ff,#6400ff,#6c00ff,#7400ff,#7d00ff,#8500ff,#8e00ff,#9600ff,#9f00ff,#a700ff,#b000ff,#b900ff,#c200ff,#ca00ff,#d300ff,#dc00ff,#e500ff,#ee00ff,#f700ff,#ff00fd,#ff00f5,#ff00ec,#ff00e5,#ff00dd,#ff00d7)"></div>
<div class="s" style="top:537px;height:3px;background:linear-gradient(90deg,#000dff,#000bff,#0009ff,#0007ff,#0005ff,#0003ff,#0000ff,#0000ff,#0000ff,#0000ff,#0000ff,#0000ff,#0000ff,#0000ff,#0000ff,#0000ff,#0000ff,#0300ff,#0b00ff,#1200ff,#1a00ff,#2200ff,#2a00ff,#3200ff,#3a00ff,#4200ff,#4a00ff,#5200ff,#5a00ff,#6300ff,#6b00ff,#7300ff,#7c00ff,#8400ff,#8c00ff,#9500ff,#9d00ff,#a600ff,#af00ff,#b700ff,#c000ff,#c900ff,#d200ff,#db00ff,#e300ff,#ec00ff,#f500ff,#ff00ff,#ff00f7,#ff00ee,#ff00e6,#ff00df,#ff00d8)"></div>
<div class="s" style="top:540px;height:3px;background:linear-gradient(90deg,#000dff,#000bff,#0009ff,#0006ff,#0004ff,#0002ff,#0000ff,#0000ff,#0000ff,#0000ff,#0000ff,#0000ff,#0000ff,#0000ff,#0000ff,#0000ff,#0000ff,#0300ff,#0a00ff,#1200ff,#1a00ff,#2200ff,#2a00ff,#3100ff,#3900ff,#4100ff,#4900ff,#5100ff,#5a00ff,#6200ff,#6a00ff,#7200ff,#7a00ff,#8300ff,#8b00ff,#9400ff,#9c00ff,#a500ff,#ad00ff,#b600ff,#bf00ff,#c700ff,#d000ff,#d900ff,#e200ff,#eb00ff,#f400ff,#fd00ff,#ff00f8,#ff00f0,#ff00e8,#ff00e1,#ff00da)"></div>
<div class="s" style="top:543px;height:3px;background:linear-gradient(90deg,#000cff,#000aff,#0008ff,#0006ff,#0004ff,#0002ff,#0000ff,#0000ff,#0000ff,#0000ff,#0000ff,#0000ff,#0000ff,#0000ff,#0000ff,#0000ff,#0000ff,#0200ff,#0a00ff,#1200ff,#1900ff,#2100ff,#2900ff,#3100ff,#3900ff,#4100ff,#4900ff,#5100ff,#5900ff,#6100ff,#6900ff,#7100ff,#7900ff,#8200ff,#8a00ff,#9200ff,#9b00ff,#a300ff,#ac00ff,#b400ff,#bd00ff,#c600ff,#ce00ff,#d700ff,#e000ff,#e900ff,#f200ff,#fb00ff,#ff00fa,#ff00f2,#ff00ea,#ff00e3,#ff00dc)"></div>
<div class="s" style="top:546px;height:3px;background:linear-gradient(90deg,#000cff,#000aff,#0008ff,#0005ff,#0003ff,#0001ff,#0000ff,#0000ff,#0000ff,#0000ff,#0000ff,#0000ff,#0000ff,#0000ff,#0000ff,#0000ff,#0000ff,#0200ff,#0a00ff,#1100ff,#1900ff,#2100ff,#2800ff,#3000ff,#3800ff,#4000ff,#4800ff,#5000ff,#5800ff,#6000ff,#6800ff,#7000ff,#7800ff,#8100ff,#8900ff,#9100ff,#9a00ff,#a200ff,#ab00ff,#b300ff,#bc00ff,#c400ff,#cd00ff,#d600ff,#de00ff,#e700ff,#f000ff,#f900ff,#ff00fc,#ff00f4,#ff00ec,#ff00e4,#ff00dd)"></div>
<div class="s" style="top:549px;height:3px;background:linear-gradient(90deg,#000bff,#0009ff,#0007ff,#0005ff,#0003ff,#0001ff,#0000ff,#0000ff,#0000ff,#0000ff,#0000ff,#0000ff,#0000ff,#0000ff,#0000ff,#0000ff,#0000ff,#0200ff,#0900ff,#1100ff,#1900ff,#2000ff,#2800ff,#3000ff,#3800ff,#3f00ff,#4700ff,#4f00ff,#5700ff,#5f00ff,#6700ff,#6f00ff,#7700ff,#8000ff,#8800ff,#9000ff,#9800ff,#a100ff,#a900ff,#b200ff,#ba00ff,#c300ff,#cb00ff,#d400ff,#dd00ff,#e500ff,#ee00ff,#f700ff,#ff00fe,#ff00f6,#ff00ee,#ff00e6,#ff00df)"></div>
<div class="s" style="top:552px;height:3px;background:linear-gradient(90deg,#000bff,#0009ff,#0007ff,#0004ff,#0002ff,#0000ff,#0000ff,#0000ff,#0000ff,#0000ff,#0000ff,#0000ff,#0000ff,#0000ff,#0000ff,#0000ff,#0000ff,#0200ff,#0900ff,#1100ff,#1800ff,#2000ff,#2700ff,#2f00ff,#3700ff,#3f00ff,#4700ff,#4e00ff,#5600ff,#5e00ff,#6600ff,#6e00ff,#7600ff,#7f00ff,#8700ff,#8f00ff,#9700ff,#9f00ff,#a800ff,#b000ff,#b900ff,#c100ff,#ca00ff,#d200ff,#db00ff,#e400ff,#ec00ff,#f500ff,#fe00ff,#ff00f8,#ff00ef,#ff00e8,#ff00e1)"></div>
<div class="s" style="top:555px;height:3px;background:linear-gradient(90deg,#000aff,#0008ff,#0006ff,#0004ff,#0002ff,#0000ff,#0000ff,#0000ff,#0000ff,#0000ff,#0000ff,#0000ff,#0000ff,#0000ff,#0000ff,#0000ff,#0000ff,#0100ff,#0900ff,#1000ff,#1800ff,#1f00ff,#2700ff,#2f00ff,#3600ff,#3e00ff,#4600ff,#4e00ff,#5600ff,#5d00ff,#6500ff,#6d00ff,#7500ff,#7d00ff,#8600ff,#8e00ff,#9600ff,#9e00ff,#a700ff,#af00ff,#b700ff,#c000ff,#c800ff,#d100ff,#d900ff,#e200ff,#ea00ff,#f300ff,#fc00ff,#ff00f9,#ff00f1,#ff00e9,#ff00e2)"></div>
<svg style="position:absolute;left:0;top:0" width="618" height="558"><path d="M0 0H618V558H0Z M463.3 72.8 128.1 36.0 180.0 411.5Z" fill="#000" fill-opacity="0.4" fill-rule="evenodd"/></svg>
</div></div>
<div style="position:absolute;left:1389.0px;top:433.0px;width:212.0px;height:170.0px;background:#2e2e2e"></div>
<div style="position:absolute;left:1392.0px;top:436.0px;width:206.0px;height:163.0px;background:#9a9a9a"></div>
<div style="position:absolute;left:1393px;top:437px;width:204px;height:161px;overflow:hidden">
<div class="s" style="top:0px;height:3px;background:linear-gradient(90deg,#a3ff00,#a9ff00,#b0ff00,#b6ff00,#bdff00,#c3ff00,#caff00,#d1ff00,#d7ff00,#deff00,#e5ff00,#ecff00,#f4ff00,#fbff00,#fffc00,#fff500,#ffee00,#ffe800)"></div>
<div class="s" style="top:3px;height:3px;background:linear-gradient(90deg,#a4ff00,#aaff00,#b1ff00,#b7ff00,#beff00,#c4ff00,#cbff00,#d2ff00,#d9ff00,#e0ff00,#e7ff00,#eeff00,#f5ff00,#fcff00,#fffa00,#fff300,#ffed00,#ffe600)"></div>
<div class="s" style="top:6px;height:3px;background:linear-gradient(90deg,#a5ff00,#abff00,#b2ff00,#b8ff00,#bfff00,#c5ff00,#ccff00,#d3ff00,#daff00,#e1ff00,#e8ff00,#efff00,#f6ff00,#feff00,#fff900,#fff200,#ffeb00,#ffe500)"></div>
<div class="s" style="top:9px;height:3px;background:linear-gradient(90deg,#a6ff00,#acff00,#b3ff00,#b9ff00,#c0ff00,#c7ff00,#cdff00,#d4ff00,#dbff00,#e2ff00,#e9ff00,#f0ff00,#f8ff00,#ffff00,#fff800,#fff100,#ffea00,#ffe400)"></div>
<div class="s" style="top:12px;height:3px;background:linear-gradient(90deg,#a7ff00,#adff00,#b4ff00,#baff00,#c1ff00,#c8ff00,#cfff00,#d5ff00,#dcff00,#e3ff00,#ebff00,#f2ff00,#f9ff00,#fffd00,#fff600,#ffef00,#ffe900,#ffe200)"></div>
<div class="s" style="top:15px;height:3px;background:linear-gradient(90deg,#a8ff00,#aeff00,#b5ff00,#bbff00,#c2ff00,#c9ff00,#d0ff00,#d7ff00,#deff00,#e5ff00,#ecff00,#f3ff00,#fbff00,#fffc00,#fff500,#ffee00,#ffe800,#ffe100)"></div>
<div class="s" style="top:18px;height:3px;background:linear-gradient(90deg,#a9ff01,#afff00,#b6ff00,#bdff00,#c3ff00,#caff00,#d1ff00,#d8ff00,#dfff00,#e6ff00,#edff00,#f5ff00,#fcff00,#fffb00,#fff400,#ffed00,#ffe600,#ffe000)"></div>
<div class="s" style="top:21px;height:3px;background:linear-gradient(90deg,#aaff01,#b1ff00,#b7ff00,#beff00,#c4ff00,#cbff00,#d2ff00,#d9ff00,#e0ff00,#e7ff00,#efff00,#f6ff00,#fdff00,#fff900,#fff200,#ffeb00,#ffe500,#ffdf00)"></div>
<div class="s" style="top:24px;height:3px;background:linear-gradient(90deg,#abff02,#b2ff00,#b8ff00,#bfff00,#c6ff00,#ccff00,#d3ff00,#daff00,#e2ff00,#e9ff00,#f0ff00,#f7ff00,#ffff00,#fff800,#fff100,#ffea00,#ffe400,#ffde00)"></div>
<div class="s" style="top:27px;height:3px;background:linear-gradient(90deg,#acff02,#b3ff01,#b9ff00,#c0ff00,#c7ff00,#ceff00,#d5ff00,#dcff00,#e3ff00,#eaff00,#f1ff00,#f9ff00,#fffe00,#fff600,#fff000,#ffe900,#ffe200,#ffdc00)"></div>
<div class="s" style="top:30px;height:3px;background:linear-gradient(90deg,#adff03,#b4ff01,#baff00,#c1ff00,#c8ff00,#cfff00,#d6ff00,#ddff00,#e4ff00,#ebff00,#f3ff00,#faff00,#fffc00,#fff500,#ffee00,#ffe800,#ffe100,#ffdb00)"></div>
<div class="s" style="top:33px;height:3px;background:linear-gradient(90deg,#aeff04,#b5ff02,#bcff01,#c2ff00,#c9ff00,#d0ff00,#d7ff00,#deff00,#e5ff00,#edff00,#f4ff00,#fcff00,#fffb00,#fff400,#ffed00,#ffe600,#ffe000,#ffda00)"></div>
<div class="s" style="top:36px;height:3px;background:linear-gradient(90deg,#afff04,#b6ff03,#bdff01,#c4ff00,#caff00,#d1ff00,#d8ff00,#e0ff00,#e7ff00,#eeff00,#f6ff00,#fdff00,#fff900,#fff200,#ffeb00,#ffe500,#ffdf00,#ffd900)"></div>
<div class="s" style="top:39px;height:3px;background:linear-gradient(90deg,#b0ff05,#b7ff03,#beff02,#c5ff00,#ccff00,#d3ff00,#daff00,#e1ff00,#e8ff00,#efff00,#f7ff00,#feff00,#fff800,#fff100,#ffea00,#ffe400,#ffdd00,#ffd700)"></div>
<div class="s" style="top:42px;height:3px;background:linear-gradient(90deg,#b2ff05,#b8ff04,#bfff02,#c6ff01,#cdff00,#d4ff00,#dbff00,#e2ff00,#e9ff00,#f1ff00,#f8ff00,#fffe00,#fff700,#fff000,#ffe900,#ffe200,#ffdc00,#ffd600)"></div>
<div class="s" style="top:45px;height:3px;background:linear-gradient(90deg,#b3ff06,#b9ff04,#c0ff03,#c7ff01,#ceff00,#d5ff00,#dcff00,#e4ff00,#ebff00,#f2ff00,#faff00,#fffd00,#fff500,#ffee00,#ffe800,#ffe100,#ffdb00,#ffd500)"></div>
<div class="s" style="top:48px;height:3px;background:linear-gradient(90deg,#b4ff07,#bbff05,#c1ff04,#c8ff02,#cfff01,#d6ff00,#deff00,#e5ff00,#ecff00,#f4ff00,#fbff00,#fffb00,#fff400,#ffed00,#ffe600,#ffe000,#ffda00,#ffd400)"></div>
<div class="s" style="top:51px;height:3px;background:linear-gradient(90deg,#b5ff07,#bcff06,#c3ff04,#c9ff03,#d1ff01,#d8ff00,#dfff00,#e6ff00,#eeff00,#f5ff00,#fdff00,#fffa00,#fff200,#ffec00,#ffe500,#ffdf00,#ffd900,#ffd300)"></div>
<div class="s" style="top:54px;height:3px;background:linear-gradient(90deg,#b6ff08,#bdff06,#c4ff05,#cbff03,#d2ff02,#d9ff00,#e0ff00,#e8ff00,#efff00,#f7ff00,#feff00,#fff800,#fff100,#ffea00,#ffe400,#ffdd00,#ffd700,#ffd100)"></div>
<div class="s" style="top:57px;height:3px;background:linear-gradient(90deg,#b7ff08,#beff07,#c5ff06,#ccff04,#d3ff02,#daff01,#e2ff00,#e9ff00,#f0ff00,#f8ff00,#fffe00,#fff700,#fff000,#ffe900,#ffe200,#ffdc00,#ffd600,#ffd000)"></div>
<div class="s" style="top:60px;height:3px;background:linear-gradient(90deg,#b8ff09,#bfff08,#c6ff06,#cdff05,#d4ff03,#dcff02,#e3ff00,#eaff00,#f2ff00,#f9ff00,#fffd00,#fff500,#ffee00,#ffe800,#ffe100,#ffdb00,#ffd500,#ffcf00)"></div>
<div class="s" style="top:63px;height:3px;background:linear-gradient(90deg,#b9ff0a,#c0ff08,#c7ff07,#ceff05,#d6ff04,#ddff02,#e4ff01,#ecff00,#f3ff00,#fbff00,#fffb00,#fff400,#ffed00,#ffe600,#ffe000,#ffda00,#ffd400,#ffce00)"></div>
<div class="s" style="top:66px;height:3px;background:linear-gradient(90deg,#bbff0a,#c2ff09,#c9ff07,#d0ff06,#d7ff04,#deff03,#e6ff01,#edff00,#f5ff00,#fcff00,#fffa00,#fff300,#ffec00,#ffe500,#ffde00,#ffd800,#ffd200,#ffcd00)"></div>
<div class="s" style="top:69px;height:3px;background:linear-gradient(90deg,#bcff0b,#c3ff0a,#caff08,#d1ff07,#d8ff05,#e0ff03,#e7ff02,#eeff00,#f6ff00,#feff00,#fff900,#fff100,#ffea00,#ffe400,#ffdd00,#ffd700,#ffd100,#ffcc00)"></div>
<div class="s" style="top:72px;height:3px;background:linear-gradient(90deg,#bdff0c,#c4ff0a,#cbff09,#d2ff07,#d9ff06,#e1ff04,#e8ff03,#f0ff01,#f8ff00,#ffff00,#fff700,#fff000,#ffe900,#ffe200,#ffdc00,#ffd600,#ffd000,#ffca00)"></div>
<div class="s" style="top:75px;height:3px;background:linear-gradient(90deg,#beff0c,#c5ff0b,#ccff09,#d3ff08,#dbff06,#e2ff05,#eaff03,#f1ff02,#f9ff00,#fffd00,#fff600,#ffee00,#ffe800,#ffe100,#ffdb00,#ffd500,#ffcf00,#ffc900)"></div>
<div class="s" style="top:78px;height:3px;background:linear-gradient(90deg,#bfff0d,#c6ff0c,#ceff0a,#d5ff09,#dcff07,#e4ff05,#ebff04,#f3ff02,#faff01,#fffc00,#fff400,#ffed00,#ffe600,#ffe000,#ffd900,#ffd300,#ffce00,#ffc800)"></div>
<div class="s" style="top:81px;height:3px;background:linear-gradient(90deg,#c0ff0e,#c8ff0c,#cfff0b,#d6ff09,#ddff08,#e5ff06,#edff04,#f4ff03,#fcff01,#fffa00,#fff300,#ffec00,#ffe500,#ffde00,#ffd800,#ffd200,#ffcc00,#ffc700)"></div>
<div class="s" style="top:84px;height:3px;background:linear-gradient(90deg,#c2ff0e,#c9ff0d,#d0ff0b,#d7ff0a,#dfff08,#e6ff07,#eeff05,#f6ff04,#fdff02,#fff900,#fff100,#ffea00,#ffe400,#ffdd00,#ffd700,#ffd100,#ffcb00,#ffc600)"></div>
<div class="s" style="top:87px;height:3px;background:linear-gradient(90deg,#c3ff0f,#caff0e,#d1ff0c,#d9ff0b,#e0ff09,#e8ff07,#efff06,#f7ff04,#ffff03,#fff701,#fff000,#ffe900,#ffe200,#ffdc00,#ffd600,#ffd000,#ffca00,#ffc500)"></div>
<div class="s" style="top:90px;height:3px;background:linear-gradient(90deg,#c4ff10,#cbff0e,#d3ff0d,#daff0b,#e2ff0a,#e9ff08,#f1ff07,#f9ff05,#fffe03,#fff602,#ffef00,#ffe800,#ffe100,#ffdb00,#ffd400,#ffcf00,#ffc900,#ffc400)"></div>
<div class="s" style="top:93px;height:3px;background:linear-gradient(90deg,#c5ff10,#cdff0f,#d4ff0d,#dbff0c,#e3ff0a,#ebff09,#f2ff07,#faff06,#fffc04,#fff402,#ffed01,#ffe600,#ffe000,#ffd900,#ffd300,#ffcd00,#ffc800,#ffc200)"></div>
<div class="s" style="top:96px;height:3px;background:linear-gradient(90deg,#c7ff11,#ceff10,#d5ff0e,#ddff0d,#e4ff0b,#ecff09,#f4ff08,#fcff06,#fffb05,#fff303,#ffec01,#ffe500,#ffde00,#ffd800,#ffd200,#ffcc00,#ffc700,#ffc100)"></div>
<div class="s" style="top:99px;height:3px;background:linear-gradient(90deg,#c8ff12,#cfff10,#d7ff0f,#deff0d,#e6ff0c,#edff0a,#f5ff09,#fdff07,#fff905,#fff203,#ffea02,#ffe400,#ffdd00,#ffd700,#ffd100,#ffcb00,#ffc500,#ffc000)"></div>
<div class="s" style="top:102px;height:3px;background:linear-gradient(90deg,#c9ff13,#d0ff11,#d8ff10,#dfff0e,#e7ff0c,#efff0b,#f7ff09,#ffff08,#fff806,#fff004,#ffe902,#ffe201,#ffdc00,#ffd500,#ffd000,#ffca00,#ffc400,#ffbf00)"></div>
<div class="s" style="top:105px;height:3px;background:linear-gradient(90deg,#caff13,#d2ff12,#d9ff10,#e1ff0f,#e9ff0d,#f0ff0c,#f8ff0a,#fffe08,#fff606,#ffef05,#ffe803,#ffe101,#ffda00,#ffd400,#ffce00,#ffc900,#ffc300,#ffbe00)"></div>
<div class="s" style="top:108px;height:3px;background:linear-gradient(90deg,#ccff14,#d3ff13,#dbff11,#e2ff0f,#eaff0e,#f2ff0c,#faff0b,#fffc09,#fff507,#ffed05,#ffe604,#ffe002,#ffd901,#ffd300,#ffcd00,#ffc700,#ffc200,#ffbd00)"></div>
<div class="s" style="top:111px;height:3px;background:linear-gradient(90deg,#cdff15,#d4ff13,#dcff12,#e4ff10,#ebff0f,#f3ff0d,#fbff0b,#fffb0a,#fff308,#ffec06,#ffe504,#ffde03,#ffd801,#ffd200,#ffcc00,#ffc600,#ffc100,#ffbc00)"></div>
<div class="s" style="top:114px;height:3px;background:linear-gradient(90deg,#ceff15,#d6ff14,#ddff12,#e5ff11,#edff0f,#f5ff0e,#fdff0c,#fff90a,#fff208,#ffea07,#ffe305,#ffdd03,#ffd702,#ffd000,#ffcb00,#ffc500,#ffc000,#ffbb00)"></div>
<div class="s" style="top:117px;height:3px;background:linear-gradient(90deg,#d0ff16,#d7ff15,#dfff13,#e6ff12,#eeff10,#f6ff0e,#feff0d,#fff80b,#fff009,#ffe907,#ffe206,#ffdc04,#ffd502,#ffcf01,#ffc900,#ffc400,#ffbf00,#ffba00)"></div>
<div class="s" style="top:120px;height:3px;background:linear-gradient(90deg,#d1ff17,#d8ff15,#e0ff14,#e8ff12,#f0ff11,#f8ff0f,#fffe0e,#fff60c,#ffef0a,#ffe808,#ffe106,#ffda04,#ffd403,#ffce01,#ffc800,#ffc300,#ffbd00,#ffb800)"></div>
<div class="s" style="top:123px;height:3px;background:linear-gradient(90deg,#d2ff18,#daff16,#e2ff15,#e9ff13,#f1ff12,#f9ff10,#fffd0e,#fff50c,#ffed0a,#ffe608,#ffdf07,#ffd905,#ffd303,#ffcd02,#ffc700,#ffc200,#ffbc00,#ffb700)"></div>
<div class="s" style="top:126px;height:3px;background:linear-gradient(90deg,#d4ff18,#dbff17,#e3ff15,#ebff14,#f3ff12,#fbff11,#fffb0f,#fff30d,#ffec0b,#ffe509,#ffde07,#ffd806,#ffd104,#ffcc03,#ffc601,#ffc000,#ffbb00,#ffb600)"></div>
<div class="s" style="top:129px;height:3px;background:linear-gradient(90deg,#d5ff19,#ddff18,#e4ff16,#ecff15,#f4ff13,#fcff11,#fffa10,#fff20d,#ffea0c,#ffe30a,#ffdd08,#ffd606,#ffd005,#ffca03,#ffc502,#ffbf00,#ffba00,#ffb500)"></div>
<div class="s" style="top:132px;height:3px;background:linear-gradient(90deg,#d6ff1a,#deff18,#e6ff17,#eeff15,#f6ff14,#feff12,#fff810,#fff00e,#ffe90c,#ffe20a,#ffdb09,#ffd507,#ffcf05,#ffc904,#ffc402,#ffbe01,#ffb900,#ffb400)"></div>
<div class="s" style="top:135px;height:3px;background:linear-gradient(90deg,#d8ff1b,#dfff19,#e7ff18,#efff16,#f7ff15,#fffe13,#fff611,#ffef0f,#ffe80d,#ffe10b,#ffda09,#ffd407,#ffce06,#ffc804,#ffc203,#ffbd01,#ffb800,#ffb300)"></div>
<div class="s" style="top:138px;height:3px;background:linear-gradient(90deg,#d9ff1c,#e1ff1a,#e9ff18,#f1ff17,#f9ff15,#fffd14,#fff511,#ffed0f,#ffe60d,#ffdf0c,#ffd90a,#ffd208,#ffcc06,#ffc705,#ffc103,#ffbc02,#ffb700,#ffb200)"></div>
<div class="s" style="top:141px;height:3px;background:linear-gradient(90deg,#daff1c,#e2ff1b,#eaff19,#f2ff18,#faff16,#fffb14,#fff312,#ffec10,#ffe50e,#ffde0c,#ffd70a,#ffd109,#ffcb07,#ffc505,#ffc004,#ffbb02,#ffb601,#ffb100)"></div>
<div class="s" style="top:144px;height:3px;background:linear-gradient(90deg,#dcff1d,#e4ff1c,#ecff1a,#f4ff18,#fcff17,#fffa15,#fff213,#ffea11,#ffe30f,#ffdd0d,#ffd60b,#ffd009,#ffca08,#ffc406,#ffbf04,#ffba03,#ffb502,#ffb000)"></div>
<div class="s" style="top:147px;height:3px;background:linear-gradient(90deg,#ddff1e,#e5ff1c,#edff1b,#f5ff19,#feff18,#fff816,#fff013,#ffe911,#ffe20f,#ffdb0d,#ffd50b,#ffcf0a,#ffc908,#ffc306,#ffbe05,#ffb803,#ffb302,#ffaf01)"></div>
<div class="s" style="top:150px;height:3px;background:linear-gradient(90deg,#dfff1f,#e7ff1d,#efff1c,#f7ff1a,#ffff18,#fff716,#ffef14,#ffe812,#ffe110,#ffda0e,#ffd40c,#ffcd0a,#ffc809,#ffc207,#ffbd05,#ffb704,#ffb203,#ffae01)"></div>
<div class="s" style="top:153px;height:3px;background:linear-gradient(90deg,#e0ff20,#e8ff1e,#f0ff1c,#f8ff1b,#fffd19,#fff517,#ffed15,#ffe612,#ffdf10,#ffd90f,#ffd20d,#ffcc0b,#ffc609,#ffc108,#ffbb06,#ffb605,#ffb103,#ffad02)"></div>
<div class="s" style="top:156px;height:3px;background:linear-gradient(90deg,#e2ff20,#eaff1f,#f2ff1d,#faff1c,#fffc1a,#fff417,#ffec15,#ffe513,#ffde11,#ffd70f,#ffd10d,#ffcb0b,#ffc50a,#ffc008,#ffba07,#ffb505,#ffb004,#ffac02)"></div>
<div class="s" style="top:159px;height:3px;background:linear-gradient(90deg,#e3ff21,#ebff20,#f3ff1e,#fcff1d,#fffa1a,#fff218,#ffeb16,#ffe314,#ffdc12,#ffd610,#ffd00e,#ffca0c,#ffc40a,#ffbe09,#ffb907,#ffb406,#ffaf04,#ffaa03)"></div>
<svg style="position:absolute;left:0;top:0" width="204" height="161"><path d="M0 0H204V144.5L0 16.7Z" fill="#000" fill-opacity="0.4"/></svg>
</div>
<svg style="position:absolute;left:0;top:0" width="1612" height="990"><rect x="1161.1" y="139.8" width="13" height="15" fill="#a4c0a4" fill-opacity=".35" stroke="#fff" stroke-width="1.6"/><rect x="1143.5" y="121.0" width="13" height="15" fill="#87c087" fill-opacity=".35" stroke="#fff" stroke-width="1.6"/><rect x="1129.0" y="103.8" width="13" height="15" fill="#6ec06e" fill-opacity=".35" stroke="#fff" stroke-width="1.6"/><rect x="1117.1" y="89.8" width="13" height="15" fill="#4ac04a" fill-opacity=".35" stroke="#fff" stroke-width="1.6"/><rect x="1105.3" y="76.0" width="13" height="15" fill="#00c000" fill-opacity=".35" stroke="#fff" stroke-width="1.6"/><rect x="1183.0" y="144.0" width="13" height="15" fill="#c0c0a4" fill-opacity=".35" stroke="#fff" stroke-width="1.6"/><rect x="1184.0" y="127.0" width="13" height="15" fill="#c0c087" fill-opacity=".35" stroke="#fff" stroke-width="1.6"/><rect x="1185.3" y="111.6" width="13" height="15" fill="#c0c06e" fill-opacity=".35" stroke="#fff" stroke-width="1.6"/><rect x="1185.9" y="97.0" width="13" height="15" fill="#c0c04a" fill-opacity=".35" stroke="#fff" stroke-width="1.6"/><rect x="1186.8" y="84.9" width="13" height="15" fill="#c0c000" fill-opacity=".35" stroke="#fff" stroke-width="1.6"/><rect x="1169.0" y="167.0" width="13" height="15" fill="#a4c0c0" fill-opacity=".35" stroke="#fff" stroke-width="1.6"/><rect x="1157.1" y="168.9" width="13" height="15" fill="#87c0c0" fill-opacity=".35" stroke="#fff" stroke-width="1.6"/><rect x="1144.4" y="171.5" width="13" height="15" fill="#6ec0c0" fill-opacity=".35" stroke="#fff" stroke-width="1.6"/><rect x="1131.7" y="172.9" width="13" height="15" fill="#4ac0c0" fill-opacity=".35" stroke="#fff" stroke-width="1.6"/><rect x="1119.9" y="177.0" width="13" height="15" fill="#00c0c0" fill-opacity=".35" stroke="#fff" stroke-width="1.6"/><rect x="1228.0" y="154.9" width="13" height="15" fill="#c0a4a4" fill-opacity=".35" stroke="#fff" stroke-width="1.6"/><rect x="1279.7" y="144.0" width="13" height="15" fill="#c08787" fill-opacity=".35" stroke="#fff" stroke-width="1.6"/><rect x="1327.0" y="135.8" width="13" height="15" fill="#c06e6e" fill-opacity=".35" stroke="#fff" stroke-width="1.6"/><rect x="1379.3" y="125.8" width="13" height="15" fill="#c04a4a" fill-opacity=".35" stroke="#fff" stroke-width="1.6"/><rect x="1441.3" y="112.9" width="13" height="15" fill="#c00000" fill-opacity=".35" stroke="#fff" stroke-width="1.6"/><rect x="1197.5" y="182.5" width="13" height="15" fill="#c0a4c0" fill-opacity=".35" stroke="#fff" stroke-width="1.6"/><rect x="1215.9" y="203.9" width="13" height="15" fill="#c087c0" fill-opacity=".35" stroke="#fff" stroke-width="1.6"/><rect x="1234.5" y="227.5" width="13" height="15" fill="#c06ec0" fill-opacity=".35" stroke="#fff" stroke-width="1.6"/><rect x="1259.3" y="257.0" width="13" height="15" fill="#c04ac0" fill-opacity=".35" stroke="#fff" stroke-width="1.6"/><rect x="1291.5" y="292.0" width="13" height="15" fill="#c000c0" fill-opacity=".35" stroke="#fff" stroke-width="1.6"/><rect x="1177.7" y="198.0" width="13" height="15" fill="#a4a4c0" fill-opacity=".35" stroke="#fff" stroke-width="1.6"/><rect x="1175.5" y="239.8" width="13" height="15" fill="#8787c0" fill-opacity=".35" stroke="#fff" stroke-width="1.6"/><rect x="1171.5" y="291.0" width="13" height="15" fill="#6e6ec0" fill-opacity=".35" stroke="#fff" stroke-width="1.6"/><rect x="1165.9" y="356.1" width="13" height="15" fill="#4a4ac0" fill-opacity=".35" stroke="#fff" stroke-width="1.6"/><rect x="1158.0" y="453.0" width="13" height="15" fill="#0000c0" fill-opacity=".35" stroke="#fff" stroke-width="1.6"/><circle cx="1165.8" cy="146.9" r="4.2" fill="#a4c0a4" fill-opacity=".8" stroke="#000" stroke-width="1.2"/><circle cx="1148.5" cy="127.3" r="4.2" fill="#87c087" fill-opacity=".8" stroke="#000" stroke-width="1.2"/><circle cx="1133.1" cy="110.0" r="4.2" fill="#6ec06e" fill-opacity=".8" stroke="#000" stroke-width="1.2"/><circle cx="1120.0" cy="94.5" r="4.2" fill="#4ac04a" fill-opacity=".8" stroke="#000" stroke-width="1.2"/><circle cx="1108.2" cy="82.5" r="4.2" fill="#00c000" fill-opacity=".8" stroke="#000" stroke-width="1.2"/><circle cx="1188.7" cy="151.3" r="4.2" fill="#c0c0a4" fill-opacity=".8" stroke="#000" stroke-width="1.2"/><circle cx="1189.5" cy="133.6" r="4.2" fill="#c0c087" fill-opacity=".8" stroke="#000" stroke-width="1.2"/><circle cx="1191.1" cy="117.8" r="4.2" fill="#c0c06e" fill-opacity=".8" stroke="#000" stroke-width="1.2"/><circle cx="1192.4" cy="103.6" r="4.2" fill="#c0c04a" fill-opacity=".8" stroke="#000" stroke-width="1.2"/><circle cx="1192.4" cy="91.3" r="4.2" fill="#c0c000" fill-opacity=".8" stroke="#000" stroke-width="1.2"/><circle cx="1175.5" cy="173.6" r="4.2" fill="#a4c0c0" fill-opacity=".8" stroke="#000" stroke-width="1.2"/><circle cx="1163.3" cy="176.4" r="4.2" fill="#87c0c0" fill-opacity=".8" stroke="#000" stroke-width="1.2"/><circle cx="1148.5" cy="177.3" r="4.2" fill="#6ec0c0" fill-opacity=".8" stroke="#000" stroke-width="1.2"/><circle cx="1136.9" cy="180.5" r="4.2" fill="#4ac0c0" fill-opacity=".8" stroke="#000" stroke-width="1.2"/><circle cx="1125.3" cy="182.2" r="4.2" fill="#00c0c0" fill-opacity=".8" stroke="#000" stroke-width="1.2"/><circle cx="1234.5" cy="162.4" r="4.2" fill="#c0a4a4" fill-opacity=".8" stroke="#000" stroke-width="1.2"/><circle cx="1288.5" cy="151.5" r="4.2" fill="#c08787" fill-opacity=".8" stroke="#000" stroke-width="1.2"/><circle cx="1337.3" cy="142.7" r="4.2" fill="#c06e6e" fill-opacity=".8" stroke="#000" stroke-width="1.2"/><circle cx="1392.4" cy="131.8" r="4.2" fill="#c04a4a" fill-opacity=".8" stroke="#000" stroke-width="1.2"/><circle cx="1446.4" cy="123.1" r="4.2" fill="#c00000" fill-opacity=".8" stroke="#000" stroke-width="1.2"/><circle cx="1204.4" cy="188.7" r="4.2" fill="#c0a4c0" fill-opacity=".8" stroke="#000" stroke-width="1.2"/><circle cx="1224.0" cy="211.4" r="4.2" fill="#c087c0" fill-opacity=".8" stroke="#000" stroke-width="1.2"/><circle cx="1243.3" cy="233.4" r="4.2" fill="#c06ec0" fill-opacity=".8" stroke="#000" stroke-width="1.2"/><circle cx="1271.5" cy="264.5" r="4.2" fill="#c04ac0" fill-opacity=".8" stroke="#000" stroke-width="1.2"/><circle cx="1301.3" cy="300.0" r="4.2" fill="#c000c0" fill-opacity=".8" stroke="#000" stroke-width="1.2"/><circle cx="1184.2" cy="204.7" r="4.2" fill="#a4a4c0" fill-opacity=".8" stroke="#000" stroke-width="1.2"/><circle cx="1183.3" cy="247.6" r="4.2" fill="#8787c0" fill-opacity=".8" stroke="#000" stroke-width="1.2"/><circle cx="1179.5" cy="300.0" r="4.2" fill="#6e6ec0" fill-opacity=".8" stroke="#000" stroke-width="1.2"/><circle cx="1175.4" cy="367.7" r="4.2" fill="#4a4ac0" fill-opacity=".8" stroke="#000" stroke-width="1.2"/><circle cx="1168.2" cy="462.7" r="4.2" fill="#0000c0" fill-opacity=".8" stroke="#000" stroke-width="1.2"/><rect x="1180.6" y="164.0" width="13" height="15" fill="none" stroke="#000" stroke-width="1.8"/><circle cx="1188.4" cy="170.5" r="4.2" fill="#fff" stroke="#000" stroke-width="1.1"/><rect x="1487.5" y="508.5" width="12" height="15" fill="none" stroke="#fff" stroke-width="1.4"/><circle cx="1493.5" cy="506" r="4" fill="#c0c000" fill-opacity=".6" stroke="#000" stroke-width="1.1"/></svg>
<span class="t" style="left:968.4px;top:602.0px;font-size:16px;color:#d6d6d6;transform:scaleX(0.850);transform-origin:100% 0;">0</span>
<span class="t" style="left:980.1px;top:620.0px;font-size:16px;color:#d6d6d6;transform:scaleX(0.850);transform-origin:50% 0;">0</span>
<span class="t" style="left:946.2px;top:555.0px;font-size:16px;color:#d6d6d6;transform:scaleX(0.850);transform-origin:100% 0;">0,05</span>
<span class="t" style="left:1020.4px;top:620.0px;font-size:16px;color:#d6d6d6;transform:scaleX(0.850);transform-origin:50% 0;">0,05</span>
<span class="t" style="left:955.1px;top:509.0px;font-size:16px;color:#d6d6d6;transform:scaleX(0.850);transform-origin:100% 0;">0,1</span>
<span class="t" style="left:1076.3px;top:620.0px;font-size:16px;color:#d6d6d6;transform:scaleX(0.850);transform-origin:50% 0;">0,1</span>
<span class="t" style="left:946.2px;top:463.0px;font-size:16px;color:#d6d6d6;transform:scaleX(0.850);transform-origin:100% 0;">0,15</span>
<span class="t" style="left:1123.3px;top:620.0px;font-size:16px;color:#d6d6d6;transform:scaleX(0.850);transform-origin:50% 0;">0,15</span>
<span class="t" style="left:955.1px;top:416.0px;font-size:16px;color:#d6d6d6;transform:scaleX(0.850);transform-origin:100% 0;">0,2</span>
<span class="t" style="left:1179.2px;top:620.0px;font-size:16px;color:#d6d6d6;transform:scaleX(0.850);transform-origin:50% 0;">0,2</span>
<span class="t" style="left:946.2px;top:370.0px;font-size:16px;color:#d6d6d6;transform:scaleX(0.850);transform-origin:100% 0;">0,25</span>
<span class="t" style="left:1226.2px;top:620.0px;font-size:16px;color:#d6d6d6;transform:scaleX(0.850);transform-origin:50% 0;">0,25</span>
<span class="t" style="left:955.1px;top:323.0px;font-size:16px;color:#d6d6d6;transform:scaleX(0.850);transform-origin:100% 0;">0,3</span>
<span class="t" style="left:1282.1px;top:620.0px;font-size:16px;color:#d6d6d6;transform:scaleX(0.850);transform-origin:50% 0;">0,3</span>
<span class="t" style="left:946.2px;top:277.0px;font-size:16px;color:#d6d6d6;transform:scaleX(0.850);transform-origin:100% 0;">0,35</span>
<span class="t" style="left:1329.1px;top:620.0px;font-size:16px;color:#d6d6d6;transform:scaleX(0.850);transform-origin:50% 0;">0,35</span>
<span class="t" style="left:955.1px;top:231.0px;font-size:16px;color:#d6d6d6;transform:scaleX(0.850);transform-origin:100% 0;">0,4</span>
<span class="t" style="left:1385.0px;top:620.0px;font-size:16px;color:#d6d6d6;transform:scaleX(0.850);transform-origin:50% 0;">0,4</span>
<span class="t" style="left:946.2px;top:184.0px;font-size:16px;color:#d6d6d6;transform:scaleX(0.850);transform-origin:100% 0;">0,45</span>
<span class="t" style="left:1432.0px;top:620.0px;font-size:16px;color:#d6d6d6;transform:scaleX(0.850);transform-origin:50% 0;">0,45</span>
<span class="t" style="left:955.1px;top:138.0px;font-size:16px;color:#d6d6d6;transform:scaleX(0.850);transform-origin:100% 0;">0,5</span>
<span class="t" style="left:1487.9px;top:620.0px;font-size:16px;color:#d6d6d6;transform:scaleX(0.850);transform-origin:50% 0;">0,5</span>
<span class="t" style="left:946.2px;top:91.0px;font-size:16px;color:#d6d6d6;transform:scaleX(0.850);transform-origin:100% 0;">0,55</span>
<span class="t" style="left:1534.9px;top:620.0px;font-size:16px;color:#d6d6d6;transform:scaleX(0.850);transform-origin:50% 0;">0,55</span>
<svg style="position:absolute;left:0;top:0" width="1612" height="990"><rect x="978" y="607.5" width="6" height="1.6" fill="#ccc"/><rect x="983.9" y="608" width="1.6" height="6" fill="#ccc"/><rect x="978" y="561.1" width="6" height="1.6" fill="#ccc"/><rect x="1035.4" y="608" width="1.6" height="6" fill="#ccc"/><rect x="978" y="514.7" width="6" height="1.6" fill="#ccc"/><rect x="1086.8" y="608" width="1.6" height="6" fill="#ccc"/><rect x="978" y="468.3" width="6" height="1.6" fill="#ccc"/><rect x="1138.2" y="608" width="1.6" height="6" fill="#ccc"/><rect x="978" y="421.9" width="6" height="1.6" fill="#ccc"/><rect x="1189.7" y="608" width="1.6" height="6" fill="#ccc"/><rect x="978" y="375.5" width="6" height="1.6" fill="#ccc"/><rect x="1241.2" y="608" width="1.6" height="6" fill="#ccc"/><rect x="978" y="329.1" width="6" height="1.6" fill="#ccc"/><rect x="1292.6" y="608" width="1.6" height="6" fill="#ccc"/><rect x="978" y="282.7" width="6" height="1.6" fill="#ccc"/><rect x="1344.1" y="608" width="1.6" height="6" fill="#ccc"/><rect x="978" y="236.3" width="6" height="1.6" fill="#ccc"/><rect x="1395.5" y="608" width="1.6" height="6" fill="#ccc"/><rect x="978" y="189.9" width="6" height="1.6" fill="#ccc"/><rect x="1447.0" y="608" width="1.6" height="6" fill="#ccc"/><rect x="978" y="143.5" width="6" height="1.6" fill="#ccc"/><rect x="1498.4" y="608" width="1.6" height="6" fill="#ccc"/><rect x="978" y="97.1" width="6" height="1.6" fill="#ccc"/><rect x="1549.9" y="608" width="1.6" height="6" fill="#ccc"/></svg>
<span class="t" style="left:1236.0px;top:31.0px;font-size:15.5px;color:#d6d6d6;transform:scaleX(0.778);transform-origin:0 0;">CIE 1976 u'v'</span>
<span class="t" style="left:6.0px;top:20.0px;font-size:42px;color:#f2f2f2;transform:scaleX(0.913);transform-origin:0 0;">Saturation Sweeps</span>
<span class="t" style="left:118.0px;top:100.0px;font-size:21.5px;color:#f2f2f2;transform:scaleX(0.897);transform-origin:0 0;">dE Formula:</span>
<span class="t" style="left:540.0px;top:29.0px;font-size:21.5px;color:#f2f2f2;transform:scaleX(0.851);transform-origin:0 0;">Levels:</span>
<div style="position:absolute;left:605.0px;top:24.0px;width:329.0px;height:30.0px;background:linear-gradient(#727272,#616161 45%,#4c4c4c);border:1px solid #262626;box-sizing:border-box;box-shadow:inset 0 1px 0 #868686"></div>
<span class="t" style="left:610.0px;top:32.0px;font-size:18.5px;color:#f2f2f2;transform:scaleX(0.801);transform-origin:0 0;">20% Sweeps</span>
<svg style="position:absolute;left:918px;top:34.0px" width="12" height="8"><path d="M1.5 1H10.5L6 7Z" fill="#000"/></svg>
<div style="position:absolute;left:230.0px;top:95.0px;width:130.0px;height:28.0px;background:linear-gradient(#727272,#616161 45%,#4c4c4c);border:1px solid #262626;box-sizing:border-box;box-shadow:inset 0 1px 0 #868686"></div>
<span class="t" style="left:234.5px;top:102.0px;font-size:18.5px;color:#f2f2f2;transform:scaleX(0.838);transform-origin:0 0;">2000</span>
<svg style="position:absolute;left:344px;top:104.0px" width="12" height="8"><path d="M1.5 1H10.5L6 7Z" fill="#000"/></svg>
<div style="position:absolute;left:40.0px;top:160.0px;width:303.0px;height:438.0px;background:#252525;border:1px solid #a6a6a6;box-sizing:border-box"></div>
<div style="position:absolute;left:39.4px;top:158.9px;width:303.0px;height:2.0px;background:#9e9e9e"></div>
<div style="position:absolute;left:39.4px;top:158.9px;width:2.0px;height:439.0px;background:#9e9e9e"></div>
<span class="t" style="left:135.3px;top:141.0px;font-size:16.5px;color:#d6d6d6;transform:scaleX(0.845);transform-origin:0 0;">DeltaE 2000</span>
<span class="t" style="left:35.1px;top:609.0px;font-size:16px;color:#d6d6d6;transform:scaleX(0.830);transform-origin:50% 0;">0</span>
<span class="t" style="left:75.4px;top:609.0px;font-size:16px;color:#d6d6d6;transform:scaleX(0.830);transform-origin:50% 0;">2</span>
<span class="t" style="left:115.7px;top:609.0px;font-size:16px;color:#d6d6d6;transform:scaleX(0.830);transform-origin:50% 0;">4</span>
<span class="t" style="left:156.0px;top:609.0px;font-size:16px;color:#d6d6d6;transform:scaleX(0.830);transform-origin:50% 0;">6</span>
<span class="t" style="left:196.3px;top:609.0px;font-size:16px;color:#d6d6d6;transform:scaleX(0.830);transform-origin:50% 0;">8</span>
<span class="t" style="left:232.1px;top:609.0px;font-size:16px;color:#d6d6d6;transform:scaleX(0.830);transform-origin:50% 0;">10</span>
<span class="t" style="left:272.4px;top:609.0px;font-size:16px;color:#d6d6d6;transform:scaleX(0.830);transform-origin:50% 0;">12</span>
<span class="t" style="left:312.7px;top:609.0px;font-size:16px;color:#d6d6d6;transform:scaleX(0.830);transform-origin:50% 0;">14</span>
<span class="t" style="left:-1.6px;top:190.0px;font-size:16px;color:#d6d6d6;transform:scaleX(0.830);transform-origin:100% 0;">100%</span>
<span class="t" style="left:7.3px;top:263.0px;font-size:16px;color:#d6d6d6;transform:scaleX(0.830);transform-origin:100% 0;">80%</span>
<span class="t" style="left:7.3px;top:336.0px;font-size:16px;color:#d6d6d6;transform:scaleX(0.830);transform-origin:100% 0;">60%</span>
<span class="t" style="left:7.3px;top:409.0px;font-size:16px;color:#d6d6d6;transform:scaleX(0.830);transform-origin:100% 0;">40%</span>
<span class="t" style="left:7.3px;top:482.0px;font-size:16px;color:#d6d6d6;transform:scaleX(0.830);transform-origin:100% 0;">20%</span>
<span class="t" style="left:12.6px;top:556.0px;font-size:16px;color:#d6d6d6;transform:scaleX(0.830);transform-origin:100% 0;">100</span>
<div style="position:absolute;left:394.0px;top:98.0px;width:140.0px;height:322.0px;background:#252525;border:1px solid #a6a6a6;box-sizing:border-box"></div>
<span class="t" style="left:368.9px;top:92.0px;font-size:16px;color:#d6d6d6;transform:scaleX(0.830);transform-origin:100% 0;">15</span>
<span class="t" style="left:368.9px;top:144.0px;font-size:16px;color:#d6d6d6;transform:scaleX(0.830);transform-origin:100% 0;">10</span>
<span class="t" style="left:377.8px;top:198.0px;font-size:16px;color:#d6d6d6;transform:scaleX(0.830);transform-origin:100% 0;">5</span>
<span class="t" style="left:377.8px;top:253.0px;font-size:16px;color:#d6d6d6;transform:scaleX(0.830);transform-origin:100% 0;">0</span>
<span class="t" style="left:372.5px;top:305.0px;font-size:16px;color:#d6d6d6;transform:scaleX(0.830);transform-origin:100% 0;">-5</span>
<span class="t" style="left:363.6px;top:359.0px;font-size:16px;color:#d6d6d6;transform:scaleX(0.830);transform-origin:100% 0;">-10</span>
<span class="t" style="left:363.6px;top:412.0px;font-size:16px;color:#d6d6d6;transform:scaleX(0.830);transform-origin:100% 0;">-15</span>
<span class="t" style="left:426.8px;top:78.0px;font-size:16.5px;color:#d6d6d6;transform:scaleX(0.830);transform-origin:50% 0;">DeltaL</span>
<span class="t" style="left:443.2px;top:424.0px;font-size:16px;color:#d6d6d6;transform:scaleX(0.830);transform-origin:50% 0;">100%</span>
<div style="position:absolute;left:585.0px;top:98.0px;width:140.0px;height:322.0px;background:#252525;border:1px solid #a6a6a6;box-sizing:border-box"></div>
<span class="t" style="left:559.9px;top:92.0px;font-size:16px;color:#d6d6d6;transform:scaleX(0.830);transform-origin:100% 0;">15</span>
<span class="t" style="left:559.9px;top:144.0px;font-size:16px;color:#d6d6d6;transform:scaleX(0.830);transform-origin:100% 0;">10</span>
<span class="t" style="left:568.8px;top:198.0px;font-size:16px;color:#d6d6d6;transform:scaleX(0.830);transform-origin:100% 0;">5</span>
<span class="t" style="left:568.8px;top:253.0px;font-size:16px;color:#d6d6d6;transform:scaleX(0.830);transform-origin:100% 0;">0</span>
<span class="t" style="left:563.5px;top:305.0px;font-size:16px;color:#d6d6d6;transform:scaleX(0.830);transform-origin:100% 0;">-5</span>
<span class="t" style="left:554.6px;top:359.0px;font-size:16px;color:#d6d6d6;transform:scaleX(0.830);transform-origin:100% 0;">-10</span>
<span class="t" style="left:554.6px;top:412.0px;font-size:16px;color:#d6d6d6;transform:scaleX(0.830);transform-origin:100% 0;">-15</span>
<span class="t" style="left:616.3px;top:78.0px;font-size:16.5px;color:#d6d6d6;transform:scaleX(0.830);transform-origin:50% 0;">DeltaC</span>
<span class="t" style="left:634.2px;top:424.0px;font-size:16px;color:#d6d6d6;transform:scaleX(0.830);transform-origin:50% 0;">100%</span>
<div style="position:absolute;left:776.0px;top:98.0px;width:140.0px;height:322.0px;background:#252525;border:1px solid #a6a6a6;box-sizing:border-box"></div>
<span class="t" style="left:750.9px;top:92.0px;font-size:16px;color:#d6d6d6;transform:scaleX(0.830);transform-origin:100% 0;">15</span>
<span class="t" style="left:750.9px;top:144.0px;font-size:16px;color:#d6d6d6;transform:scaleX(0.830);transform-origin:100% 0;">10</span>
<span class="t" style="left:759.8px;top:198.0px;font-size:16px;color:#d6d6d6;transform:scaleX(0.830);transform-origin:100% 0;">5</span>
<span class="t" style="left:759.8px;top:253.0px;font-size:16px;color:#d6d6d6;transform:scaleX(0.830);transform-origin:100% 0;">0</span>
<span class="t" style="left:754.5px;top:305.0px;font-size:16px;color:#d6d6d6;transform:scaleX(0.830);transform-origin:100% 0;">-5</span>
<span class="t" style="left:745.6px;top:359.0px;font-size:16px;color:#d6d6d6;transform:scaleX(0.830);transform-origin:100% 0;">-10</span>
<span class="t" style="left:745.6px;top:412.0px;font-size:16px;color:#d6d6d6;transform:scaleX(0.830);transform-origin:100% 0;">-15</span>
<span class="t" style="left:807.3px;top:78.0px;font-size:16.5px;color:#d6d6d6;transform:scaleX(0.830);transform-origin:50% 0;">DeltaH</span>
<span class="t" style="left:825.2px;top:424.0px;font-size:16px;color:#d6d6d6;transform:scaleX(0.830);transform-origin:50% 0;">100%</span>
<div style="position:absolute;left:340.0px;top:693.0px;width:247.0px;height:206.0px;background:#252525;border:1px solid #a6a6a6;box-sizing:border-box"></div>
<div style="position:absolute;left:340.0px;top:692.0px;width:247.0px;height:3.2px;background:#8e8e8e"></div>
<div style="position:absolute;left:340.0px;top:896.3px;width:247.0px;height:2.7px;background:#909090"></div>
<span class="t" style="left:317.5px;top:687.0px;font-size:16px;color:#d6d6d6;transform:scaleX(0.830);transform-origin:100% 0;">20</span>
<span class="t" style="left:317.5px;top:738.0px;font-size:16px;color:#d6d6d6;transform:scaleX(0.830);transform-origin:100% 0;">10</span>
<span class="t" style="left:326.4px;top:790.0px;font-size:16px;color:#d6d6d6;transform:scaleX(0.830);transform-origin:100% 0;">0</span>
<span class="t" style="left:312.2px;top:841.0px;font-size:16px;color:#d6d6d6;transform:scaleX(0.830);transform-origin:100% 0;">-10</span>
<span class="t" style="left:312.2px;top:892.0px;font-size:16px;color:#d6d6d6;transform:scaleX(0.830);transform-origin:100% 0;">-20</span>
<span class="t" style="left:400.0px;top:673.0px;font-size:16.5px;color:#d6d6d6;transform:scaleX(0.830);transform-origin:50% 0;">RGB Balance</span>
<span class="t" style="left:442.5px;top:903.0px;font-size:16px;color:#d6d6d6;transform:scaleX(0.830);transform-origin:50% 0;">100%</span>
<svg style="position:absolute;left:0;top:0" width="1612" height="990"><defs><linearGradient id="b00"><stop offset="0" stop-color="rgb(239, 90, 90)"/><stop offset=".25" stop-color="rgb(212, 25, 25)"/><stop offset="1" stop-color="rgb(127, 15, 15)"/></linearGradient><linearGradient id="b01"><stop offset="0" stop-color="rgb(90, 239, 90)"/><stop offset=".25" stop-color="rgb(25, 212, 25)"/><stop offset="1" stop-color="rgb(15, 127, 15)"/></linearGradient><linearGradient id="b02"><stop offset="0" stop-color="rgb(90, 90, 239)"/><stop offset=".25" stop-color="rgb(25, 25, 212)"/><stop offset="1" stop-color="rgb(15, 15, 127)"/></linearGradient><linearGradient id="b03"><stop offset="0" stop-color="rgb(90, 239, 239)"/><stop offset=".25" stop-color="rgb(25, 212, 212)"/><stop offset="1" stop-color="rgb(15, 127, 127)"/></linearGradient><linearGradient id="b04"><stop offset="0" stop-color="rgb(239, 90, 239)"/><stop offset=".25" stop-color="rgb(212, 25, 212)"/><stop offset="1" stop-color="rgb(127, 15, 127)"/></linearGradient><linearGradient id="b05"><stop offset="0" stop-color="rgb(239, 239, 90)"/><stop offset=".25" stop-color="rgb(212, 212, 25)"/><stop offset="1" stop-color="rgb(127, 127, 15)"/></linearGradient><linearGradient id="b10"><stop offset="0" stop-color="rgb(239, 126, 126)"/><stop offset=".25" stop-color="rgb(212, 70, 70)"/><stop offset="1" stop-color="rgb(127, 42, 42)"/></linearGradient><linearGradient id="b11"><stop offset="0" stop-color="rgb(126, 239, 126)"/><stop offset=".25" stop-color="rgb(70, 212, 70)"/><stop offset="1" stop-color="rgb(42, 127, 42)"/></linearGradient><linearGradient id="b12"><stop offset="0" stop-color="rgb(126, 126, 239)"/><stop offset=".25" stop-color="rgb(70, 70, 212)"/><stop offset="1" stop-color="rgb(42, 42, 127)"/></linearGradient><linearGradient id="b13"><stop offset="0" stop-color="rgb(126, 239, 239)"/><stop offset=".25" stop-color="rgb(70, 212, 212)"/><stop offset="1" stop-color="rgb(42, 127, 127)"/></linearGradient><linearGradient id="b14"><stop offset="0" stop-color="rgb(239, 126, 239)"/><stop offset=".25" stop-color="rgb(212, 70, 212)"/><stop offset="1" stop-color="rgb(127, 42, 127)"/></linearGradient><linearGradient id="b15"><stop offset="0" stop-color="rgb(239, 239, 126)"/><stop offset=".25" stop-color="rgb(212, 212, 70)"/><stop offset="1" stop-color="rgb(127, 127, 42)"/></linearGradient><linearGradient id="b20"><stop offset="0" stop-color="rgb(239, 143, 143)"/><stop offset=".25" stop-color="rgb(212, 92, 92)"/><stop offset="1" stop-color="rgb(127, 55, 55)"/></linearGradient><linearGradient id="b21"><stop offset="0" stop-color="rgb(143, 239, 143)"/><stop offset=".25" stop-color="rgb(92, 212, 92)"/><stop offset="1" stop-color="rgb(55, 127, 55)"/></linearGradient><linearGradient id="b22"><stop offset="0" stop-color="rgb(143, 143, 239)"/><stop offset=".25" stop-color="rgb(92, 92, 212)"/><stop offset="1" stop-color="rgb(55, 55, 127)"/></linearGradient><linearGradient id="b23"><stop offset="0" stop-color="rgb(143, 239, 239)"/><stop offset=".25" stop-color="rgb(92, 212, 212)"/><stop offset="1" stop-color="rgb(55, 127, 127)"/></linearGradient><linearGradient id="b24"><stop offset="0" stop-color="rgb(239, 143, 239)"/><stop offset=".25" stop-color="rgb(212, 92, 212)"/><stop offset="1" stop-color="rgb(127, 55, 127)"/></linearGradient><linearGradient id="b25"><stop offset="0" stop-color="rgb(239, 239, 143)"/><stop offset=".25" stop-color="rgb(212, 212, 92)"/><stop offset="1" stop-color="rgb(127, 127, 55)"/></linearGradient><linearGradient id="b30"><stop offset="0" stop-color="rgb(239, 166, 166)"/><stop offset=".25" stop-color="rgb(212, 120, 120)"/><stop offset="1" stop-color="rgb(127, 72, 72)"/></linearGradient><linearGradient id="b31"><stop offset="0" stop-color="rgb(166, 239, 166)"/><stop offset=".25" stop-color="rgb(120, 212, 120)"/><stop offset="1" stop-color="rgb(72, 127, 72)"/></linearGradient><linearGradient id="b32"><stop offset="0" stop-color="rgb(166, 166, 239)"/><stop offset=".25" stop-color="rgb(120, 120, 212)"/><stop offset="1" stop-color="rgb(72, 72, 127)"/></linearGradient><linearGradient id="b33"><stop offset="0" stop-color="rgb(166, 239, 239)"/><stop offset=".25" stop-color="rgb(120, 212, 212)"/><stop offset="1" stop-color="rgb(72, 127, 127)"/></linearGradient><linearGradient id="b34"><stop offset="0" stop-color="rgb(239, 166, 239)"/><stop offset=".25" stop-color="rgb(212, 120, 212)"/><stop offset="1" stop-color="rgb(127, 72, 127)"/></linearGradient><linearGradient id="b35"><stop offset="0" stop-color="rgb(239, 239, 166)"/><stop offset=".25" stop-color="rgb(212, 212, 120)"/><stop offset="1" stop-color="rgb(127, 127, 72)"/></linearGradient><linearGradient id="b40"><stop offset="0" stop-color="rgb(239, 198, 198)"/><stop offset=".25" stop-color="rgb(212, 160, 160)"/><stop offset="1" stop-color="rgb(127, 96, 96)"/></linearGradient><linearGradient id="b41"><stop offset="0" stop-color="rgb(198, 239, 198)"/><stop offset=".25" stop-color="rgb(160, 212, 160)"/><stop offset="1" stop-color="rgb(96, 127, 96)"/></linearGradient><linearGradient id="b42"><stop offset="0" stop-color="rgb(198, 198, 239)"/><stop offset=".25" stop-color="rgb(160, 160, 212)"/><stop offset="1" stop-color="rgb(96, 96, 127)"/></linearGradient><linearGradient id="b43"><stop offset="0" stop-color="rgb(198, 239, 239)"/><stop offset=".25" stop-color="rgb(160, 212, 212)"/><stop offset="1" stop-color="rgb(96, 127, 127)"/></linearGradient><linearGradient id="b44"><stop offset="0" stop-color="rgb(239, 198, 239)"/><stop offset=".25" stop-color="rgb(212, 160, 212)"/><stop offset="1" stop-color="rgb(127, 96, 127)"/></linearGradient><linearGradient id="b45"><stop offset="0" stop-color="rgb(239, 239, 198)"/><stop offset=".25" stop-color="rgb(212, 212, 160)"/><stop offset="1" stop-color="rgb(127, 127, 96)"/></linearGradient><linearGradient id="bw"><stop offset="0" stop-color="#fff"/><stop offset=".5" stop-color="#fff"/><stop offset="1" stop-color="#777"/></linearGradient><linearGradient id="yb" x1="0" y1="0" x2="0" y2="1"><stop offset="0" stop-color="#cccc1c"/><stop offset=".5" stop-color="#c6c602"/><stop offset="1" stop-color="#8e8e00"/></linearGradient><linearGradient id="gg" x1="0" y1="0" x2="0" y2="1"><stop offset="0" stop-color="#1f8f1f"/><stop offset="1" stop-color="#0c6a0c"/></linearGradient><linearGradient id="bb" x1="0" y1="0" x2="0" y2="1"><stop offset="0" stop-color="#2424ff"/><stop offset=".12" stop-color="#0202ff"/><stop offset=".62" stop-color="#0000f4"/><stop offset="1" stop-color="#000074"/></linearGradient></defs><rect x="78.9" y="160" width="1.5" height="437" fill="#9c9c9c"/><rect x="119.2" y="160" width="1.5" height="437" fill="#9c9c9c"/><rect x="159.5" y="160" width="1.5" height="437" fill="#9c9c9c"/><rect x="199.8" y="160" width="1.5" height="437" fill="#9c9c9c"/><rect x="240.1" y="160" width="1.5" height="437" fill="#9c9c9c"/><rect x="280.4" y="160" width="1.5" height="437" fill="#9c9c9c"/><rect x="320.7" y="160" width="1.5" height="437" fill="#9c9c9c"/><rect x="38.8" y="597" width="1.5" height="6" fill="#ccc"/><rect x="79.1" y="597" width="1.5" height="6" fill="#ccc"/><rect x="119.4" y="597" width="1.5" height="6" fill="#ccc"/><rect x="159.7" y="597" width="1.5" height="6" fill="#ccc"/><rect x="200.0" y="597" width="1.5" height="6" fill="#ccc"/><rect x="240.3" y="597" width="1.5" height="6" fill="#ccc"/><rect x="280.6" y="597" width="1.5" height="6" fill="#ccc"/><rect x="320.9" y="597" width="1.5" height="6" fill="#ccc"/><rect x="35" y="159.2" width="6" height="1.6" fill="#ccc"/><rect x="35" y="232.0" width="6" height="1.6" fill="#ccc"/><rect x="35" y="304.9" width="6" height="1.6" fill="#ccc"/><rect x="35" y="377.7" width="6" height="1.6" fill="#ccc"/><rect x="35" y="450.6" width="6" height="1.6" fill="#ccc"/><rect x="35" y="523.5" width="6" height="1.6" fill="#ccc"/><rect x="35" y="596.3" width="6" height="1.6" fill="#ccc"/><rect x="41.4" y="166.3" width="38.4" height="7.6" fill="#000"/><rect x="41.4" y="168.0" width="37.2" height="4.7" fill="url(#b00)"/><rect x="41.4" y="173.9" width="13.0" height="7.6" fill="#000"/><rect x="41.4" y="175.6" width="11.8" height="4.7" fill="url(#b01)"/><rect x="41.4" y="181.5" width="16.6" height="7.6" fill="#000"/><rect x="41.4" y="183.2" width="15.4" height="4.7" fill="url(#b02)"/><rect x="41.4" y="189.1" width="12.0" height="7.6" fill="#000"/><rect x="41.4" y="190.8" width="10.8" height="4.7" fill="url(#b03)"/><rect x="41.4" y="196.7" width="10.6" height="7.6" fill="#000"/><rect x="41.4" y="198.4" width="9.4" height="4.7" fill="url(#b04)"/><rect x="41.4" y="204.3" width="10.6" height="7.6" fill="#000"/><rect x="41.4" y="206.0" width="9.4" height="4.7" fill="url(#b05)"/><rect x="41.4" y="238.1" width="12.2" height="7.6" fill="#000"/><rect x="41.4" y="239.8" width="11.0" height="4.7" fill="url(#b10)"/><rect x="41.4" y="246.0" width="18.6" height="7.6" fill="#000"/><rect x="41.4" y="247.7" width="17.4" height="4.7" fill="url(#b11)"/><rect x="41.4" y="253.8" width="18.8" height="7.6" fill="#000"/><rect x="41.4" y="255.5" width="17.6" height="4.7" fill="url(#b12)"/><rect x="41.4" y="261.7" width="12.6" height="7.6" fill="#000"/><rect x="41.4" y="263.4" width="11.4" height="4.7" fill="url(#b13)"/><rect x="41.4" y="269.5" width="11.8" height="7.6" fill="#000"/><rect x="41.4" y="271.2" width="10.6" height="4.7" fill="url(#b14)"/><rect x="41.4" y="277.4" width="14.6" height="7.6" fill="#000"/><rect x="41.4" y="279.1" width="13.4" height="4.7" fill="url(#b15)"/><rect x="41.4" y="311.2" width="8.6" height="7.6" fill="#000"/><rect x="41.4" y="312.9" width="7.4" height="4.7" fill="url(#b20)"/><rect x="41.4" y="319.0" width="15.6" height="7.6" fill="#000"/><rect x="41.4" y="320.7" width="14.4" height="4.7" fill="url(#b21)"/><rect x="41.4" y="326.8" width="12.2" height="7.6" fill="#000"/><rect x="41.4" y="328.5" width="11.0" height="4.7" fill="url(#b22)"/><rect x="41.4" y="334.7" width="11.2" height="7.6" fill="#000"/><rect x="41.4" y="336.4" width="10.0" height="4.7" fill="url(#b23)"/><rect x="41.4" y="342.5" width="11.6" height="7.6" fill="#000"/><rect x="41.4" y="344.2" width="10.4" height="4.7" fill="url(#b24)"/><rect x="41.4" y="350.3" width="10.2" height="7.6" fill="#000"/><rect x="41.4" y="352.0" width="9.0" height="4.7" fill="url(#b25)"/><rect x="41.4" y="385.4" width="9.0" height="7.6" fill="#000"/><rect x="41.4" y="387.1" width="7.8" height="4.7" fill="url(#b30)"/><rect x="41.4" y="393.2" width="11.6" height="7.6" fill="#000"/><rect x="41.4" y="394.9" width="10.4" height="4.7" fill="url(#b31)"/><rect x="41.4" y="401.0" width="8.6" height="7.6" fill="#000"/><rect x="41.4" y="402.7" width="7.4" height="4.7" fill="url(#b32)"/><rect x="41.4" y="408.7" width="8.6" height="7.6" fill="#000"/><rect x="41.4" y="410.4" width="7.4" height="4.7" fill="url(#b33)"/><rect x="41.4" y="416.5" width="11.6" height="7.6" fill="#000"/><rect x="41.4" y="418.2" width="10.4" height="4.7" fill="url(#b34)"/><rect x="41.4" y="424.3" width="8.6" height="7.6" fill="#000"/><rect x="41.4" y="426.0" width="7.4" height="4.7" fill="url(#b35)"/><rect x="41.4" y="458.2" width="10.6" height="7.6" fill="#000"/><rect x="41.4" y="459.9" width="9.4" height="4.7" fill="url(#b40)"/><rect x="41.4" y="465.8" width="9.6" height="7.6" fill="#000"/><rect x="41.4" y="467.5" width="8.4" height="4.7" fill="url(#b41)"/><rect x="41.4" y="473.4" width="15.6" height="7.6" fill="#000"/><rect x="41.4" y="475.1" width="14.4" height="4.7" fill="url(#b42)"/><rect x="41.4" y="480.9" width="8.6" height="7.6" fill="#000"/><rect x="41.4" y="482.6" width="7.4" height="4.7" fill="url(#b43)"/><rect x="41.4" y="488.5" width="10.6" height="7.6" fill="#000"/><rect x="41.4" y="490.2" width="9.4" height="4.7" fill="url(#b44)"/><rect x="41.4" y="496.1" width="7.6" height="7.6" fill="#000"/><rect x="41.4" y="497.8" width="6.4" height="4.7" fill="url(#b45)"/><rect x="41.4" y="577" width="18.8" height="7.4" fill="#000"/><rect x="41.4" y="578.6" width="17.6" height="4.7" fill="url(#bw)"/><rect x="389" y="97.8" width="6" height="1.4" fill="#ccc"/><rect x="394" y="150.4" width="139" height="1.2" fill="#9c9c9c"/><rect x="389" y="150.3" width="6" height="1.4" fill="#ccc"/><rect x="394" y="204.6" width="139" height="1.2" fill="#9c9c9c"/><rect x="389" y="204.5" width="6" height="1.4" fill="#ccc"/><rect x="394" y="259.3" width="139" height="1.2" fill="#9c9c9c"/><rect x="389" y="259.2" width="6" height="1.4" fill="#ccc"/><rect x="394" y="311.6" width="139" height="1.2" fill="#9c9c9c"/><rect x="389" y="311.5" width="6" height="1.4" fill="#ccc"/><rect x="394" y="365.6" width="139" height="1.2" fill="#9c9c9c"/><rect x="389" y="365.5" width="6" height="1.4" fill="#ccc"/><rect x="389" y="417.8" width="6" height="1.4" fill="#ccc"/><rect x="394" y="98" width="139" height="2" fill="#9c9c9c"/><rect x="394" y="417.3" width="139" height="2" fill="#9c9c9c"/><rect x="393.8" y="418" width="1.5" height="7" fill="#ccc"/><rect x="532.2" y="418" width="1.5" height="7" fill="#ccc"/><rect x="408.6" y="254.3" width="109.39999999999998" height="4.699999999999989" fill="url(#yb)" stroke="#000" stroke-width="1.6"/><rect x="580" y="97.8" width="6" height="1.4" fill="#ccc"/><rect x="585" y="150.4" width="139" height="1.2" fill="#9c9c9c"/><rect x="580" y="150.3" width="6" height="1.4" fill="#ccc"/><rect x="585" y="204.6" width="139" height="1.2" fill="#9c9c9c"/><rect x="580" y="204.5" width="6" height="1.4" fill="#ccc"/><rect x="585" y="259.3" width="139" height="1.2" fill="#9c9c9c"/><rect x="580" y="259.2" width="6" height="1.4" fill="#ccc"/><rect x="585" y="311.6" width="139" height="1.2" fill="#9c9c9c"/><rect x="580" y="311.5" width="6" height="1.4" fill="#ccc"/><rect x="585" y="365.6" width="139" height="1.2" fill="#9c9c9c"/><rect x="580" y="365.5" width="6" height="1.4" fill="#ccc"/><rect x="580" y="417.8" width="6" height="1.4" fill="#ccc"/><rect x="585" y="98" width="139" height="2" fill="#9c9c9c"/><rect x="585" y="417.3" width="139" height="2" fill="#9c9c9c"/><rect x="584.8" y="418" width="1.5" height="7" fill="#ccc"/><rect x="723.2" y="418" width="1.5" height="7" fill="#ccc"/><rect x="599" y="241" width="110.20000000000005" height="17" fill="url(#yb)" stroke="#000" stroke-width="1.6"/><rect x="771" y="97.8" width="6" height="1.4" fill="#ccc"/><rect x="776" y="150.4" width="139" height="1.2" fill="#9c9c9c"/><rect x="771" y="150.3" width="6" height="1.4" fill="#ccc"/><rect x="776" y="204.6" width="139" height="1.2" fill="#9c9c9c"/><rect x="771" y="204.5" width="6" height="1.4" fill="#ccc"/><rect x="776" y="259.3" width="139" height="1.2" fill="#9c9c9c"/><rect x="771" y="259.2" width="6" height="1.4" fill="#ccc"/><rect x="776" y="311.6" width="139" height="1.2" fill="#9c9c9c"/><rect x="771" y="311.5" width="6" height="1.4" fill="#ccc"/><rect x="776" y="365.6" width="139" height="1.2" fill="#9c9c9c"/><rect x="771" y="365.5" width="6" height="1.4" fill="#ccc"/><rect x="771" y="417.8" width="6" height="1.4" fill="#ccc"/><rect x="776" y="98" width="139" height="2" fill="#9c9c9c"/><rect x="776" y="417.3" width="139" height="2" fill="#9c9c9c"/><rect x="775.8" y="418" width="1.5" height="7" fill="#ccc"/><rect x="914.2" y="418" width="1.5" height="7" fill="#ccc"/><rect x="790.2" y="254.3" width="110.29999999999995" height="4.699999999999989" fill="url(#yb)" stroke="#000" stroke-width="1.6"/><rect x="335" y="692.8" width="6" height="1.5" fill="#ccc"/><rect x="340" y="743.9" width="246" height="1.5" fill="#9c9c9c"/><rect x="335" y="743.9" width="6" height="1.5" fill="#ccc"/><rect x="340" y="795.1" width="246" height="1.5" fill="#9c9c9c"/><rect x="335" y="795.1" width="6" height="1.5" fill="#ccc"/><rect x="340" y="846.2" width="246" height="1.5" fill="#9c9c9c"/><rect x="335" y="846.2" width="6" height="1.5" fill="#ccc"/><rect x="335" y="897.4" width="6" height="1.5" fill="#ccc"/><rect x="339.8" y="898" width="1.5" height="6" fill="#ccc"/><rect x="585.2" y="898" width="1.5" height="6" fill="#ccc"/><rect x="365" y="793.6" width="67" height="2.6" fill="#000"/><rect x="432" y="786.8" width="64.5" height="9" fill="url(#gg)" stroke="#000" stroke-width="1.2"/><rect x="497.5" y="796" width="65" height="61.5" fill="url(#bb)" stroke="#000" stroke-width="1.2"/></svg>
<div style="position:absolute;left:361.0px;top:448.0px;width:573.0px;height:185.0px;background:#000"></div>
<div style="position:absolute;left:381.0px;top:456.0px;width:97.0px;height:150.5px;background:#c0c1a4;border:1px solid #f4f4e8;box-sizing:border-box"></div>
<span class="t" style="left:417.0px;top:614.0px;font-size:12.5px;color:#fff;transform:scaleX(0.950);transform-origin:50% 0;">20%</span>
<div style="position:absolute;left:493.0px;top:456.0px;width:97.0px;height:150.5px;background:#c0c187;border:1px solid #f4f4e8;box-sizing:border-box"></div>
<span class="t" style="left:529.0px;top:614.0px;font-size:12.5px;color:#fff;transform:scaleX(0.950);transform-origin:50% 0;">40%</span>
<div style="position:absolute;left:605.0px;top:456.0px;width:97.0px;height:150.5px;background:#bfc06e;border:1px solid #f4f4e8;box-sizing:border-box"></div>
<span class="t" style="left:641.0px;top:614.0px;font-size:12.5px;color:#fff;transform:scaleX(0.950);transform-origin:50% 0;">60%</span>
<div style="position:absolute;left:717.0px;top:456.0px;width:97.0px;height:150.5px;background:#bfbf4a;border:1px solid #f4f4e8;box-sizing:border-box"></div>
<span class="t" style="left:753.0px;top:614.0px;font-size:12.5px;color:#fff;transform:scaleX(0.950);transform-origin:50% 0;">80%</span>
<div style="position:absolute;left:829.0px;top:456.0px;width:97.0px;height:150.5px;background:#c0c000;border:1px solid #f4f4e8;box-sizing:border-box"></div>
<span class="t" style="left:861.5px;top:614.0px;font-size:12.5px;color:#fff;transform:scaleX(0.950);transform-origin:50% 0;">100%</span>
<span class="t" style="left:364px;top:510px;font-size:12.5px;color:#fff;font-weight:bold;transform:rotate(-90deg) scaleX(1.06);transform-origin:0 0">Actual</span>
<span class="t" style="left:364px;top:594px;font-size:12.5px;color:#fff;font-weight:bold;transform:rotate(-90deg) scaleX(1.06);transform-origin:0 0">Target</span>
<span class="t" style="left:47.6px;top:659.0px;font-size:30px;color:#f2f2f2;transform:scaleX(0.945);transform-origin:0 0;">Avg dE2000: 0,75</span>
<span class="t" style="left:43.9px;top:705.0px;font-size:30px;color:#f2f2f2;transform:scaleX(0.958);transform-origin:0 0;">Max dE2000: 2,02</span>
<span class="t" style="left:13.0px;top:758.0px;font-size:30px;color:#f2f2f2;transform:scaleX(0.960);transform-origin:0 0;">Current Reading</span>
<span class="t" style="left:13.0px;top:803.0px;font-size:27.5px;color:#f2f2f2;transform:scaleX(0.871);transform-origin:0 0;">x: 0,4194</span>
<span class="t" style="left:163.7px;top:803.0px;font-size:27.5px;color:#f2f2f2;transform:scaleX(0.882);transform-origin:0 0;">y: 0,5088</span>
<span class="t" style="left:13.0px;top:849.0px;font-size:27.5px;color:#f2f2f2;transform:scaleX(0.862);transform-origin:0 0;">fL: 40,82</span>
<span class="t" style="left:13.0px;top:888.0px;font-size:27.5px;color:#f2f2f2;transform:scaleX(0.908);transform-origin:0 0;">cd/m²: 139,87</span>
<div style="position:absolute;left:607.0px;top:658.0px;width:698.5px;height:32.3px;background:linear-gradient(#2f2f2f,#2b2b2b 49%,#1b1b1b 50%,#0c0c0c)"></div>
<div style="position:absolute;left:607.0px;top:658.0px;width:19.0px;height:32.3px;background:#000"></div>
<span class="t" style="left:786.7px;top:667.0px;font-size:16px;color:#fff;transform:scaleX(1.220);transform-origin:0 0;text-shadow:0 0 .6px #fff;">20%</span>
<span class="t" style="left:891.6px;top:667.0px;font-size:16px;color:#fff;transform:scaleX(1.220);transform-origin:0 0;text-shadow:0 0 .6px #fff;">40%</span>
<span class="t" style="left:996.6px;top:667.0px;font-size:16px;color:#fff;transform:scaleX(1.220);transform-origin:0 0;text-shadow:0 0 .6px #fff;">60%</span>
<span class="t" style="left:1101.2px;top:667.0px;font-size:16px;color:#fff;transform:scaleX(1.220);transform-origin:0 0;text-shadow:0 0 .6px #fff;">80%</span>
<span class="t" style="left:1206.2px;top:667.0px;font-size:16px;color:#fff;transform:scaleX(1.220);transform-origin:0 0;text-shadow:0 0 .6px #fff;">100%</span>
<div style="position:absolute;left:607.0px;top:690.2px;width:698.5px;height:29.3px;background:linear-gradient(#4a4a4a,#424242)"></div>
<div style="position:absolute;left:607.0px;top:690.2px;width:19.0px;height:29.3px;background:linear-gradient(#2c2c2c,#242424)"></div>
<span class="t" style="left:632.0px;top:698.0px;font-size:17px;color:#fff;transform:scaleX(1.235);transform-origin:0 0;">x: CIE31</span>
<span class="t" style="left:786.7px;top:698.0px;font-size:17px;color:#fff;transform:scaleX(1.270);transform-origin:0 0;">0,3346</span>
<span class="t" style="left:891.6px;top:698.0px;font-size:17px;color:#fff;transform:scaleX(1.270);transform-origin:0 0;">0,3563</span>
<span class="t" style="left:996.6px;top:698.0px;font-size:17px;color:#fff;transform:scaleX(1.270);transform-origin:0 0;">0,3776</span>
<span class="t" style="left:1101.2px;top:698.0px;font-size:17px;color:#fff;transform:scaleX(1.270);transform-origin:0 0;">0,3983</span>
<span class="t" style="left:1206.2px;top:698.0px;font-size:17px;color:#fff;transform:scaleX(1.270);transform-origin:0 0;">0,4194</span>
<div style="position:absolute;left:607.0px;top:719.5px;width:698.5px;height:29.3px;background:linear-gradient(#838383,#797979)"></div>
<div style="position:absolute;left:607.0px;top:719.5px;width:19.0px;height:29.3px;background:linear-gradient(#323232,#2a2a2a)"></div>
<span class="t" style="left:632.0px;top:727.0px;font-size:17px;color:#f0f0f0;transform:scaleX(1.235);transform-origin:0 0;">y: CIE31</span>
<span class="t" style="left:786.7px;top:727.0px;font-size:17px;color:#f0f0f0;transform:scaleX(1.270);transform-origin:0 0;">0,3657</span>
<span class="t" style="left:891.6px;top:727.0px;font-size:17px;color:#f0f0f0;transform:scaleX(1.270);transform-origin:0 0;">0,4025</span>
<span class="t" style="left:996.6px;top:727.0px;font-size:17px;color:#f0f0f0;transform:scaleX(1.270);transform-origin:0 0;">0,4384</span>
<span class="t" style="left:1101.2px;top:727.0px;font-size:17px;color:#f0f0f0;transform:scaleX(1.270);transform-origin:0 0;">0,4734</span>
<span class="t" style="left:1206.2px;top:727.0px;font-size:17px;color:#f0f0f0;transform:scaleX(1.270);transform-origin:0 0;">0,5088</span>
<div style="position:absolute;left:607.0px;top:748.7px;width:698.5px;height:29.3px;background:linear-gradient(#4a4a4a,#424242)"></div>
<div style="position:absolute;left:607.0px;top:748.7px;width:19.0px;height:29.3px;background:linear-gradient(#2c2c2c,#242424)"></div>
<span class="t" style="left:632.0px;top:756.0px;font-size:17px;color:#fff;transform:scaleX(1.235);transform-origin:0 0;">Y</span>
<span class="t" style="left:786.7px;top:756.0px;font-size:17px;color:#fff;transform:scaleX(1.270);transform-origin:0 0;">147,8900</span>
<span class="t" style="left:891.6px;top:756.0px;font-size:17px;color:#fff;transform:scaleX(1.270);transform-origin:0 0;">145,3259</span>
<span class="t" style="left:996.6px;top:756.0px;font-size:17px;color:#fff;transform:scaleX(1.270);transform-origin:0 0;">143,3015</span>
<span class="t" style="left:1101.2px;top:756.0px;font-size:17px;color:#fff;transform:scaleX(1.270);transform-origin:0 0;">141,6531</span>
<span class="t" style="left:1206.2px;top:756.0px;font-size:17px;color:#fff;transform:scaleX(1.270);transform-origin:0 0;">139,8691</span>
<div style="position:absolute;left:607.0px;top:778.0px;width:698.5px;height:29.3px;background:linear-gradient(#838383,#797979)"></div>
<div style="position:absolute;left:607.0px;top:778.0px;width:19.0px;height:29.3px;background:linear-gradient(#323232,#2a2a2a)"></div>
<span class="t" style="left:632.0px;top:785.0px;font-size:17px;color:#f0f0f0;transform:scaleX(1.235);transform-origin:0 0;">Target x:CIE31</span>
<span class="t" style="left:786.7px;top:785.0px;font-size:17px;color:#f0f0f0;transform:scaleX(1.270);transform-origin:0 0;">0,3344</span>
<span class="t" style="left:891.6px;top:785.0px;font-size:17px;color:#f0f0f0;transform:scaleX(1.270);transform-origin:0 0;">0,3564</span>
<span class="t" style="left:996.6px;top:785.0px;font-size:17px;color:#f0f0f0;transform:scaleX(1.270);transform-origin:0 0;">0,3773</span>
<span class="t" style="left:1101.2px;top:785.0px;font-size:17px;color:#f0f0f0;transform:scaleX(1.270);transform-origin:0 0;">0,3969</span>
<span class="t" style="left:1206.2px;top:785.0px;font-size:17px;color:#f0f0f0;transform:scaleX(1.270);transform-origin:0 0;">0,4193</span>
<div style="position:absolute;left:607.0px;top:807.2px;width:698.5px;height:29.3px;background:linear-gradient(#4a4a4a,#424242)"></div>
<div style="position:absolute;left:607.0px;top:807.2px;width:19.0px;height:29.3px;background:linear-gradient(#2c2c2c,#242424)"></div>
<span class="t" style="left:632.0px;top:815.0px;font-size:17px;color:#fff;transform:scaleX(1.235);transform-origin:0 0;">Target y:CIE31</span>
<span class="t" style="left:786.7px;top:815.0px;font-size:17px;color:#fff;transform:scaleX(1.270);transform-origin:0 0;">0,3648</span>
<span class="t" style="left:891.6px;top:815.0px;font-size:17px;color:#fff;transform:scaleX(1.270);transform-origin:0 0;">0,4013</span>
<span class="t" style="left:996.6px;top:815.0px;font-size:17px;color:#fff;transform:scaleX(1.270);transform-origin:0 0;">0,4358</span>
<span class="t" style="left:1101.2px;top:815.0px;font-size:17px;color:#fff;transform:scaleX(1.270);transform-origin:0 0;">0,4682</span>
<span class="t" style="left:1206.2px;top:815.0px;font-size:17px;color:#fff;transform:scaleX(1.270);transform-origin:0 0;">0,5053</span>
<div style="position:absolute;left:607.0px;top:836.5px;width:698.5px;height:29.3px;background:linear-gradient(#838383,#797979)"></div>
<div style="position:absolute;left:607.0px;top:836.5px;width:19.0px;height:29.3px;background:linear-gradient(#323232,#2a2a2a)"></div>
<span class="t" style="left:632.0px;top:844.0px;font-size:17px;color:#f0f0f0;transform:scaleX(1.235);transform-origin:0 0;">Target Y</span>
<span class="t" style="left:786.7px;top:844.0px;font-size:17px;color:#f0f0f0;transform:scaleX(1.270);transform-origin:0 0;">145,3062</span>
<span class="t" style="left:891.6px;top:844.0px;font-size:17px;color:#f0f0f0;transform:scaleX(1.270);transform-origin:0 0;">142,7557</span>
<span class="t" style="left:996.6px;top:844.0px;font-size:17px;color:#f0f0f0;transform:scaleX(1.270);transform-origin:0 0;">140,7959</span>
<span class="t" style="left:1101.2px;top:844.0px;font-size:17px;color:#f0f0f0;transform:scaleX(1.270);transform-origin:0 0;">139,2579</span>
<span class="t" style="left:1206.2px;top:844.0px;font-size:17px;color:#f0f0f0;transform:scaleX(1.270);transform-origin:0 0;">137,7710</span>
<div style="position:absolute;left:607.0px;top:865.7px;width:698.5px;height:29.3px;background:linear-gradient(#4a4a4a,#424242)"></div>
<div style="position:absolute;left:607.0px;top:865.7px;width:19.0px;height:29.3px;background:linear-gradient(#2c2c2c,#242424)"></div>
<span class="t" style="left:632.0px;top:873.0px;font-size:17px;color:#fff;transform:scaleX(1.235);transform-origin:0 0;">ΔE 2000</span>
<span class="t" style="left:786.7px;top:873.0px;font-size:17px;color:#fff;transform:scaleX(1.270);transform-origin:0 0;">0,5114</span>
<span class="t" style="left:891.6px;top:873.0px;font-size:17px;color:#fff;transform:scaleX(1.270);transform-origin:0 0;">0,5318</span>
<span class="t" style="left:996.6px;top:873.0px;font-size:17px;color:#fff;transform:scaleX(1.270);transform-origin:0 0;">0,6252</span>
<span class="t" style="left:1101.2px;top:873.0px;font-size:17px;color:#fff;transform:scaleX(1.270);transform-origin:0 0;">0,8336</span>
<span class="t" style="left:1206.2px;top:873.0px;font-size:17px;color:#fff;transform:scaleX(1.270);transform-origin:0 0;">0,6186</span>
<div style="position:absolute;left:607.0px;top:895.0px;width:698.5px;height:29.3px;background:linear-gradient(#838383,#797979)"></div>
<div style="position:absolute;left:607.0px;top:895.0px;width:19.0px;height:29.3px;background:linear-gradient(#323232,#2a2a2a)"></div>
<span class="t" style="left:632.0px;top:902.0px;font-size:17px;color:#f0f0f0;transform:scaleX(1.235);transform-origin:0 0;">dEITP</span>
<span class="t" style="left:786.7px;top:902.0px;font-size:17px;color:#f0f0f0;transform:scaleX(1.270);transform-origin:0 0;">1,3401</span>
<span class="t" style="left:891.6px;top:902.0px;font-size:17px;color:#f0f0f0;transform:scaleX(1.270);transform-origin:0 0;">1,4213</span>
<span class="t" style="left:996.6px;top:902.0px;font-size:17px;color:#f0f0f0;transform:scaleX(1.270);transform-origin:0 0;">1,7630</span>
<span class="t" style="left:1101.2px;top:902.0px;font-size:17px;color:#f0f0f0;transform:scaleX(1.270);transform-origin:0 0;">3,1061</span>
<span class="t" style="left:1206.2px;top:902.0px;font-size:17px;color:#f0f0f0;transform:scaleX(1.270);transform-origin:0 0;">2,4539</span>
<div style="position:absolute;left:0.0px;top:924.3px;width:1612.0px;height:66.0px;background:linear-gradient(#272727 0,#272727 2px,#434343 3px,#3a3a3a 40%,#2a2a2a 100%)"></div>
<div style="position:absolute;left:0.0px;top:927.0px;width:44.0px;height:60.7px;background:linear-gradient(#8e8e8e,#6c6c6c 55%,#565656);border-radius:5px 5px 0 0"></div>
<div style="position:absolute;left:5.0px;top:953.0px;width:34.5px;height:30.0px;background:#ffff00;border-radius:3px;box-shadow:0 0 0 1px #9a9a50"></div>
<div style="position:absolute;left:14.0px;top:928.5px;width:15.0px;height:15.0px;border-radius:50%;background:linear-gradient(#5e5e5e,#9a9a9a)"></div>
<svg style="position:absolute;left:16.5px;top:932px" width="10" height="7"><path d="M5 1L9 6H1Z" fill="#1c1c1c"/></svg>
<div style="position:absolute;left:49.6px;top:927.0px;width:150.0px;height:61.0px;background:linear-gradient(#8e8e8e,#6c6c6c 55%,#565656);border-radius:5px 5px 0 0"></div>
<div style="position:absolute;left:54.6px;top:931.9px;width:140.0px;height:36.2px;background:#c0c1a4;border-radius:3px;box-shadow:inset 0 0 2px rgba(0,0,0,.45)"></div>
<span class="t" style="left:113.6px;top:974.0px;font-size:11px;color:#2a2a2a;transform:scaleX(0.950);transform-origin:50% 0;">20%</span>
<div style="position:absolute;left:201.7px;top:927.0px;width:150.0px;height:61.0px;background:linear-gradient(#8e8e8e,#6c6c6c 55%,#565656);border-radius:5px 5px 0 0"></div>
<div style="position:absolute;left:206.7px;top:931.9px;width:140.0px;height:36.2px;background:#c0c187;border-radius:3px;box-shadow:inset 0 0 2px rgba(0,0,0,.45)"></div>
<span class="t" style="left:265.7px;top:974.0px;font-size:11px;color:#2a2a2a;transform:scaleX(0.950);transform-origin:50% 0;">40%</span>
<div style="position:absolute;left:353.7px;top:927.0px;width:150.0px;height:61.0px;background:linear-gradient(#8e8e8e,#6c6c6c 55%,#565656);border-radius:5px 5px 0 0"></div>
<div style="position:absolute;left:358.7px;top:931.9px;width:140.0px;height:36.2px;background:#bfc06e;border-radius:3px;box-shadow:inset 0 0 2px rgba(0,0,0,.45)"></div>
<span class="t" style="left:417.7px;top:974.0px;font-size:11px;color:#2a2a2a;transform:scaleX(0.950);transform-origin:50% 0;">60%</span>
<div style="position:absolute;left:505.8px;top:927.0px;width:150.0px;height:61.0px;background:linear-gradient(#8e8e8e,#6c6c6c 55%,#565656);border-radius:5px 5px 0 0"></div>
<div style="position:absolute;left:510.8px;top:931.9px;width:140.0px;height:36.2px;background:#bfbf4a;border-radius:3px;box-shadow:inset 0 0 2px rgba(0,0,0,.45)"></div>
<span class="t" style="left:569.8px;top:974.0px;font-size:11px;color:#2a2a2a;transform:scaleX(0.950);transform-origin:50% 0;">80%</span>
<div style="position:absolute;left:657.9px;top:927.0px;width:150.0px;height:61.0px;background:linear-gradient(#1a1a1a,#333);border-radius:5px"></div>
<div style="position:absolute;left:662.9px;top:931.9px;width:140.0px;height:36.2px;background:#c0c000;border-radius:3px;box-shadow:inset 0 0 2px rgba(0,0,0,.45)"></div>
<span class="t" style="left:718.8px;top:974.0px;font-size:11px;color:#fff;font-weight:bold;transform:scaleX(0.950);transform-origin:50% 0;">100%</span>
<div style="position:absolute;left:1291.0px;top:927.0px;width:48.0px;height:18.0px;background:linear-gradient(#8c8c8c,#747474);border-radius:5px 5px 0 0"></div>
<div style="position:absolute;left:1291.0px;top:946.0px;width:48.0px;height:41.5px;background:linear-gradient(#808080,#5c5c5c);border-radius:0 0 4px 4px"></div>
<div style="position:absolute;left:1308.5px;top:928.5px;width:14px;height:14px;border-radius:50%;background:linear-gradient(#5e5e5e,#9a9a9a)"></div>
<svg style="position:absolute;left:1310.5px;top:931.5px" width="10" height="7"><path d="M5 1L9 6H1Z" fill="#1c1c1c"/></svg>
<svg style="position:absolute;left:1298px;top:950px" width="34" height="34"><defs><linearGradient id="gl" x1="0" y1="0" x2="0" y2="1"><stop offset="0" stop-color="#9c9c9c"/><stop offset=".5" stop-color="#a6a6a6"/><stop offset=".51" stop-color="#6c6c6c"/><stop offset="1" stop-color="#8a8a8a"/></linearGradient></defs><rect x="2" y="2" width="29" height="29" rx="4" fill="url(#gl)" stroke="#2b2b2b" stroke-width="2.6"/><rect x="9.5" y="9.500" width="14" height="7" fill="#1c1c1c"/><rect x="9.5" y="16.500" width="14" height="7" fill="#000"/></svg>
<div style="position:absolute;left:1340.5px;top:927.0px;width:45.0px;height:30.0px;background:linear-gradient(#8a8a8a,#787878 50%,#666);"></div>
<div style="position:absolute;left:1352.8px;top:931.8px;width:20.4px;height:20.4px;border-radius:50%;background:linear-gradient(#5e5e5e,#9a9a9a)"></div>
<div style="position:absolute;left:1386.5px;top:927.0px;width:44.5px;height:30.0px;background:linear-gradient(#8a8a8a,#787878 50%,#666);"></div>
<div style="position:absolute;left:1398.55px;top:931.8px;width:20.4px;height:20.4px;border-radius:50%;background:linear-gradient(#5e5e5e,#9a9a9a)"></div>
<div style="position:absolute;left:1432.0px;top:927.0px;width:44.0px;height:30.0px;background:linear-gradient(#8a8a8a,#787878 50%,#666);"></div>
<div style="position:absolute;left:1443.8px;top:931.8px;width:20.4px;height:20.4px;border-radius:50%;background:linear-gradient(#5e5e5e,#9a9a9a)"></div>
<div style="position:absolute;left:1477.0px;top:927.0px;width:44.0px;height:30.0px;background:linear-gradient(#8a8a8a,#787878 50%,#666);"></div>
<div style="position:absolute;left:1488.8px;top:931.8px;width:20.4px;height:20.4px;border-radius:50%;background:linear-gradient(#5e5e5e,#9a9a9a)"></div>
<div style="position:absolute;left:1522.0px;top:927.0px;width:44.0px;height:30.0px;background:linear-gradient(#8a8a8a,#787878 50%,#666);"></div>
<div style="position:absolute;left:1533.8px;top:931.8px;width:20.4px;height:20.4px;border-radius:50%;background:linear-gradient(#5e5e5e,#9a9a9a)"></div>
<div style="position:absolute;left:1567.0px;top:927.0px;width:45.0px;height:30.0px;background:#2c2c2c"></div>
<div style="position:absolute;left:1580px;top:932px;width:20px;height:20px;border-radius:50%;background:linear-gradient(#2a2a2a,#3c3c3c)"></div>
<svg style="position:absolute;left:0;top:0" width="1612" height="990"><rect x="1359" y="938" width="8" height="8" fill="#222"/><path d="M1405.5 937.5V946.5L1414 942Z" fill="#222"/><path d="M1451 938H1449V946H1451M1457 938H1459V946H1457" fill="none" stroke="#222" stroke-width="1.4"/><rect x="1452" y="941.3" width="1.4" height="1.4" fill="#222"/><rect x="1454.6" y="941.3" width="1.4" height="1.4" fill="#222"/><path d="M1499 942c-1.5-2.6-5.5-2.6-5.5 0s4 2.600 5.5 0c1.500-2.600 5.500-2.600 5.500 0s-4 2.600-5.500 0z" fill="none" stroke="#222" stroke-width="1.5"/><path d="M1539.500 941a4.600 4.600 0 0 1 8-2.500M1548.500 943a4.600 4.600 0 0 1-8 2.500" fill="none" stroke="#222" stroke-width="1.700"/><path d="M1549.500 936.500v3.500h-3.500zM1538.500 947.500v-3.500h3.500z" fill="#222"/></svg>
<div style="position:absolute;left:1340.5px;top:958.0px;width:135.5px;height:29.6px;background:linear-gradient(#8c8c8c,#7a7a7a 50%,#686868)"></div>
<div style="position:absolute;left:1477.0px;top:958.0px;width:135.0px;height:29.6px;background:linear-gradient(#8c8c8c,#7a7a7a 50%,#686868)"></div>
<div style="position:absolute;left:1360.5px;top:963px;width:20px;height:20px;border-radius:50%;background:linear-gradient(#5e5e5e,#9a9a9a)"></div>
<div style="position:absolute;left:1573.5px;top:963px;width:20px;height:20px;border-radius:50%;background:linear-gradient(#5e5e5e,#9a9a9a)"></div>
<svg style="position:absolute;left:1364px;top:966px" width="14" height="14"><path d="M6.5 2L2 7L6.500 12M11.500 2L7 7L11.500 12" fill="none" stroke="#2a2a2a" stroke-width="1.500"/></svg>
<svg style="position:absolute;left:1577px;top:966px" width="14" height="14"><path d="M2.5 2L7 7L2.500 12M7.500 2L12 7L7.500 12" fill="none" stroke="#2a2a2a" stroke-width="1.500"/></svg>
<span class="t" style="left:1398.0px;top:962.0px;font-size:24px;color:#2d2d2d;transform:scaleX(0.937);transform-origin:0 0;text-shadow:0 0 .5px #2d2d2d;">Back</span>
<span class="t" style="left:1504.0px;top:962.0px;font-size:24px;color:#2d2d2d;transform:scaleX(1.054);transform-origin:0 0;text-shadow:0 0 .5px #2d2d2d;">Next</span></body></html>
